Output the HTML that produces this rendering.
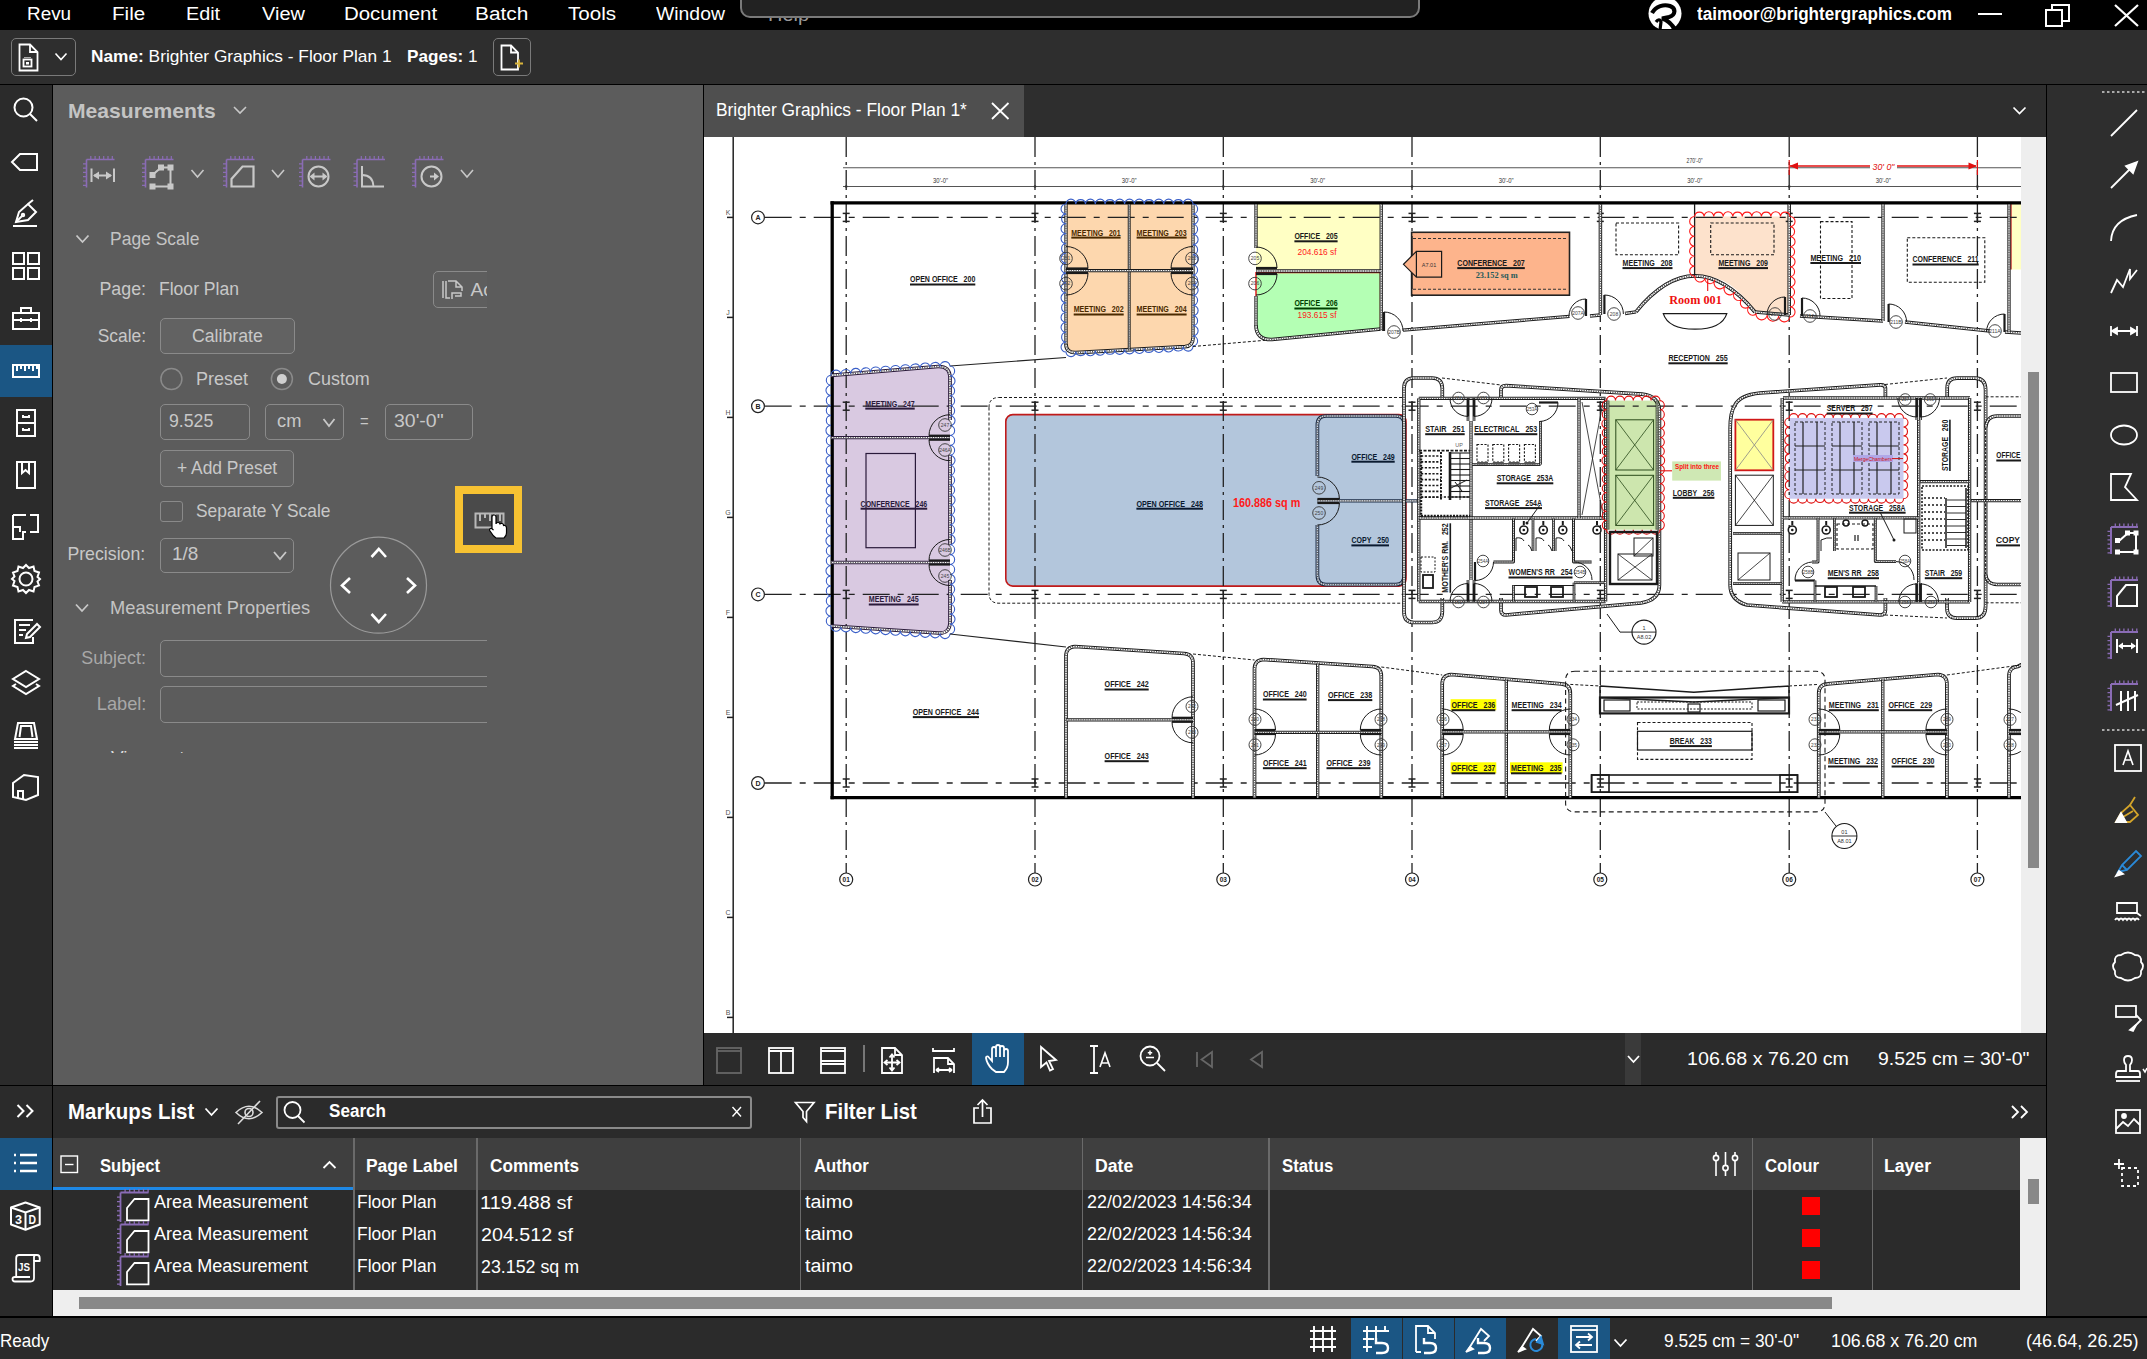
<!DOCTYPE html><html><head><meta charset="utf-8"><style>
html,body{margin:0;padding:0;width:2147px;height:1359px;overflow:hidden;background:#2b2b2b;}
body{position:relative;font-family:"Liberation Sans",sans-serif;}
.b{position:absolute;}
.s{position:absolute;overflow:visible;}
.t{position:absolute;white-space:nowrap;line-height:1;}
</style></head><body>
<div class="b" style="left:0px;top:0px;width:2147px;height:30px;background:#000;"></div>
<div class="b" style="left:0px;top:30px;width:2147px;height:54px;background:#2e2e2e;"></div>
<div class="b" style="left:0px;top:84px;width:2147px;height:1px;background:#000;"></div>
<div class="b" style="left:0px;top:85px;width:52px;height:1001px;background:#2b2b2b;"></div>
<div class="b" style="left:52px;top:85px;width:1px;height:1001px;background:#000;"></div>
<div class="b" style="left:53px;top:85px;width:650px;height:1000px;background:#5c5c5c;"></div>
<div class="b" style="left:703px;top:85px;width:1px;height:1000px;background:#000;"></div>
<div class="b" style="left:704px;top:85px;width:1342px;height:52px;background:#2e2e2e;"></div>
<div class="b" style="left:704px;top:85px;width:320px;height:52px;background:#4f4f4f;"></div>
<div class="b" style="left:704px;top:137px;width:1317px;height:896px;background:#fff;"></div>
<div class="b" style="left:2021px;top:137px;width:25px;height:896px;background:#eeeeee;"></div>
<div class="b" style="left:2028px;top:372px;width:11px;height:496px;background:#888;"></div>
<div class="b" style="left:2046px;top:85px;width:1px;height:1232px;background:#000;"></div>
<div class="b" style="left:2047px;top:85px;width:100px;height:1232px;background:#2e2e2e;"></div>
<div class="b" style="left:704px;top:1033px;width:1342px;height:52px;background:#2b2b2b;"></div>
<div class="b" style="left:0px;top:1085px;width:2046px;height:1px;background:#000;"></div>
<div class="b" style="left:0px;top:1086px;width:52px;height:231px;background:#2b2b2b;"></div>
<div class="b" style="left:52px;top:1086px;width:1px;height:231px;background:#000;"></div>
<div class="b" style="left:53px;top:1086px;width:1993px;height:52px;background:#2b2b2b;"></div>
<div class="b" style="left:53px;top:1138px;width:1967px;height:52px;background:#3f3f3f;"></div>
<div class="b" style="left:53px;top:1187px;width:300px;height:3px;background:#1e88e5;"></div>
<div class="b" style="left:53px;top:1190px;width:1967px;height:100px;background:#2b2b2b;"></div>
<div class="b" style="left:53px;top:1290px;width:1993px;height:26px;background:#eeeeee;"></div>
<div class="b" style="left:2020px;top:1138px;width:26px;height:152px;background:#eeeeee;"></div>
<div class="b" style="left:2028px;top:1179px;width:11px;height:25px;background:#888;"></div>
<div class="b" style="left:79px;top:1297px;width:1753px;height:12px;background:#888;"></div>
<div class="b" style="left:0px;top:1316px;width:2147px;height:1px;background:#111;"></div>
<div class="b" style="left:0px;top:1317px;width:2147px;height:42px;background:#2b2b2b;"></div>
<div id="t1" class="t" style="left:27.00px;transform-origin:left center;top:5.26px;font-size:18px;color:#fff;font-weight:normal;transform:scaleX(1.0497);">Revu</div>
<div id="t2" class="t" style="left:112.00px;transform-origin:left center;top:5.26px;font-size:18px;color:#fff;font-weight:normal;transform:scaleX(1.1431);">File</div>
<div id="t3" class="t" style="left:186.00px;transform-origin:left center;top:5.26px;font-size:18px;color:#fff;font-weight:normal;transform:scaleX(1.0994);">Edit</div>
<div id="t4" class="t" style="left:262.00px;transform-origin:left center;top:5.26px;font-size:18px;color:#fff;font-weight:normal;transform:scaleX(1.1086);">View</div>
<div id="t5" class="t" style="left:344.00px;transform-origin:left center;top:5.26px;font-size:18px;color:#fff;font-weight:normal;transform:scaleX(1.1353);">Document</div>
<div id="t6" class="t" style="left:475.00px;transform-origin:left center;top:5.26px;font-size:18px;color:#fff;font-weight:normal;transform:scaleX(1.1586);">Batch</div>
<div id="t7" class="t" style="left:568.00px;transform-origin:left center;top:5.26px;font-size:18px;color:#fff;font-weight:normal;transform:scaleX(1.1423);">Tools</div>
<div id="t8" class="t" style="left:656.00px;transform-origin:left center;top:5.26px;font-size:18px;color:#fff;font-weight:normal;transform:scaleX(1.0766);">Window</div>
<div id="t9" class="t" style="left:768.00px;transform-origin:left center;top:6.26px;font-size:18px;color:#9a9a9a;font-weight:normal;transform:scaleX(1.1108);">Help</div>
<div class="b" style="left:740px;top:-10px;width:680px;height:27.5px;background:#222;border:2px solid #7a7a7a;border-radius:10px;box-sizing:border-box;"></div>
<svg class="s" style="left:1648px;top:0" width="35" height="30" viewBox="0 0 35 30"><defs><clipPath id="lgc"><rect x="0" y="0" width="35" height="29"/></clipPath></defs><g clip-path="url(#lgc)"><circle cx="17" cy="13.5" r="16.5" fill="#fff"/><path d="M4 13 C8 6 16 4 22 6 C28 8 28 15 21 17 L14 18.5 C19 20 24 24 27 30" stroke="#000" stroke-width="4.2" fill="none"/><path d="M8 22 C10 19 12 19 13 22 L12 30" stroke="#000" stroke-width="3.2" fill="none"/></g></svg>
<div id="t10" class="t" style="left:1697.00px;transform-origin:left center;top:5.16px;font-size:18px;color:#fff;font-weight:bold;transform:scaleX(0.9492);">taimoor@brightergraphics.com</div>
<svg class="s" style="left:1978px;top:13px;" width="25" height="3" viewBox="0 0 25 3"><rect x="0" y="0" width="24" height="2" fill="#fff"/></svg>
<svg class="s" style="left:2045px;top:3px;" width="27" height="25" viewBox="0 0 27 25"><g fill="none" stroke="#fff" stroke-width="2"><rect x="1" y="7" width="16" height="16"/><path d="M7 7 V2 H24 V18 H17"/></g></svg>
<svg class="s" style="left:2113px;top:3px;" width="27" height="25" viewBox="0 0 27 25"><path d="M2 2 L25 23 M25 2 L2 23" stroke="#fff" stroke-width="2.2"/></svg>
<div class="b" style="left:11px;top:38px;width:65px;height:38px;background:transparent;border:1.6px solid #7a7a7a;border-radius:5px;box-sizing:border-box;"></div>
<svg class="s" style="left:18px;top:43px;" width="24" height="30" viewBox="0 0 24 30"><g fill="none" stroke="#fff" stroke-width="1.8"><path d="M1.5 1.5 H12 L19.5 9 V27.5 H1.5 Z"/><path d="M12 1.5 V9 H19.5"/><rect x="5.5" y="16.5" width="8" height="7"/></g><rect x="8" y="19" width="3" height="2.5" fill="#fff"/><path d="M6 14.5 H13" stroke="#aaa" stroke-width="1"/></svg>
<svg class="s" style="left:54px;top:52px;" width="15" height="10" viewBox="0 0 15 10"><path d="M1.5 1.5 L7 7.5 L12.5 1.5" fill="none" stroke="#fff" stroke-width="1.6"/></svg>
<div id="t11" class="t" style="left:91.00px;transform-origin:left center;top:48.11px;font-size:17px;color:#fff;font-weight:normal;transform:scaleX(1.0161);"><b>Name:</b> Brighter Graphics - Floor Plan 1</div>
<div id="t12" class="t" style="left:407.00px;transform-origin:left center;top:48.11px;font-size:17px;color:#fff;font-weight:normal;transform:scaleX(1.0077);"><b>Pages:</b> 1</div>
<div class="b" style="left:493px;top:38px;width:38px;height:38px;background:transparent;border:1.6px solid #7a7a7a;border-radius:5px;box-sizing:border-box;"></div>
<svg class="s" style="left:500px;top:44px;" width="24" height="28" viewBox="0 0 24 28"><g fill="none" stroke="#fff" stroke-width="1.8"><path d="M1.5 1.5 H11 L18 8.5 V25.5 H1.5 Z"/><path d="M11 1.5 V8.5 H18"/></g><path d="M15 19.5 H23 M19 15.5 V23.5" stroke="#d9b43a" stroke-width="1.8"/></svg>
<div class="b" style="left:0px;top:345px;width:52px;height:52px;background:#1b5684;"></div>
<svg class="s" style="left:6.0px;top:90.0px" width="40" height="40" viewBox="0 0 40 40" fill="none" stroke="#fff" stroke-width="2"><circle cx="17.5" cy="17.5" r="9"/><path d="M24 24 L31 31"/></svg>
<svg class="s" style="left:6.0px;top:142.0px" width="40" height="40" viewBox="0 0 40 40" fill="none" stroke="#fff" stroke-width="2"><path d="M31 12 H14 L6 20 L14 28 H31 Z"/></svg>
<svg class="s" style="left:6.0px;top:194.0px" width="40" height="40" viewBox="0 0 40 40" fill="none" stroke="#fff" stroke-width="2"><path d="M7 32 H31"/><path d="M10 28 L13 18 L22 10 L30 18 L22 26 Z" /><path d="M10 28 L16.5 21.5"/><circle cx="17" cy="21" r="1.2"/><path d="M22 10 L27 6"/></svg>
<svg class="s" style="left:6.0px;top:246.0px" width="40" height="40" viewBox="0 0 40 40" fill="none" stroke="#fff" stroke-width="2"><rect x="7" y="7" width="11" height="11"/><rect x="22" y="7" width="11" height="11"/><rect x="7" y="22" width="11" height="11"/><rect x="22" y="22" width="11" height="11"/></svg>
<svg class="s" style="left:6.0px;top:298.0px" width="40" height="40" viewBox="0 0 40 40" fill="none" stroke="#fff" stroke-width="2"><rect x="7" y="15" width="26" height="16"/><path d="M15 15 V10 H25 V15"/><path d="M7 22 H33"/><path d="M15 20 V24 M25 20 V24"/></svg>
<svg class="s" style="left:6.0px;top:351.0px" width="40" height="40" viewBox="0 0 40 40" fill="none" stroke="#fff" stroke-width="2"><rect x="7" y="14" width="26" height="12"/><path d="M11 14 V20 M15 14 V18 M19 14 V20 M23 14 V18 M27 14 V20 M31 14 V18"/></svg>
<svg class="s" style="left:6.0px;top:403.0px" width="40" height="40" viewBox="0 0 40 40" fill="none" stroke="#fff" stroke-width="2"><rect x="11" y="7" width="18" height="26"/><path d="M11 20 H29"/><path d="M17 12 V14 H23 V12 M17 25 V27 H23 V25"/></svg>
<svg class="s" style="left:6.0px;top:455.0px" width="40" height="40" viewBox="0 0 40 40" fill="none" stroke="#fff" stroke-width="2"><rect x="11" y="7" width="18" height="26"/><path d="M16 7 V18 L19.5 15 L23 18 V7"/></svg>
<svg class="s" style="left:6.0px;top:507.0px" width="40" height="40" viewBox="0 0 40 40" fill="none" stroke="#fff" stroke-width="2"><path d="M7 8 H20 M24 8 H32 V25 H24 M20 25 H17 V32 H7 V8"/><path d="M7 20 H14 V25"/></svg>
<svg class="s" style="left:6.0px;top:559.0px" width="40" height="40" viewBox="0 0 40 40" fill="none" stroke="#fff" stroke-width="2"><circle cx="20" cy="20" r="6.5"/><path d="M20 6 L23 9 L27.5 7.5 L28.5 12 L33 13.5 L31.5 18 L34 20 L31.5 22.5 L33 26.5 L28.5 28 L27.5 32.5 L23 31 L20 34 L17 31 L12.5 32.5 L11.5 28 L7 26.5 L8.5 22 L6 20 L8.5 17.5 L7 13.5 L11.5 12 L12.5 7.5 L17 9 Z"/></svg>
<svg class="s" style="left:6.0px;top:611.0px" width="40" height="40" viewBox="0 0 40 40" fill="none" stroke="#fff" stroke-width="2"><path d="M27 9 H9 V32 H27 V26"/><path d="M13 14 H24 M13 19 H20 M13 24 H17"/><path d="M20 27 L21 23 L31 13 L34 16 L24 26 Z"/></svg>
<svg class="s" style="left:6.0px;top:663.0px" width="40" height="40" viewBox="0 0 40 40" fill="none" stroke="#fff" stroke-width="2"><path d="M20 8 L33 16 L20 24 L7 16 Z"/><path d="M10 21 L7 23 L20 31 L33 23 L30 21"/></svg>
<svg class="s" style="left:6.0px;top:715.0px" width="40" height="40" viewBox="0 0 40 40" fill="none" stroke="#fff" stroke-width="2"><path d="M9 24 L12 8 H28 L31 24 Z"/><path d="M13.5 22 L15 11 H25 L26.5 22"/><path d="M8 27 H32 M8 30 H32 M8 33 H32"/></svg>
<svg class="s" style="left:6.0px;top:767.0px" width="40" height="40" viewBox="0 0 40 40" fill="none" stroke="#fff" stroke-width="2"><path d="M7 16 L18 8 L32 10 V28 L20 33 L7 30 Z"/><path d="M12 31 V24 H17 V32"/></svg>
<svg class="s" style="left:6.0px;top:1092.0px" width="40" height="40" viewBox="0 0 40 40" fill="none" stroke="#fff" stroke-width="2"><path d="M11.5 13 L17.5 19 L11.5 25 M20.5 13 L26.5 19 L20.5 25"/></svg>
<div class="b" style="left:0px;top:1138px;width:52px;height:52px;background:#1b5684;"></div>
<svg class="s" style="left:6.0px;top:1144.0px" width="40" height="40" viewBox="0 0 40 40" fill="none" stroke="#fff" stroke-width="2"><path d="M14 11 H31 M14 19 H31 M14 27 H31" stroke-width="2.6"/><path d="M8 11 H10 M8 19 H10 M8 27 H10" stroke-width="2.6"/></svg>
<svg class="s" style="left:6.0px;top:1196.0px" width="40" height="40" viewBox="0 0 40 40" fill="none" stroke="#fff" stroke-width="2"><path d="M5 11.5 L19.5 6.5 L33.7 11.5 V28.5 L19.5 33.7 L5 28.5 Z" stroke-linejoin="round"/><path d="M5 11.5 L19.5 16.5 L33.7 11.5 M19.5 16.5 V33.7"/><text x="9" y="28" font-size="13" font-weight="bold" fill="#fff" stroke="none" font-family="Liberation Sans" textLength="7" lengthAdjust="spacingAndGlyphs">3</text><text x="22.5" y="28" font-size="13" font-weight="bold" fill="#fff" stroke="none" font-family="Liberation Sans" textLength="7.5" lengthAdjust="spacingAndGlyphs">D</text></svg>
<svg class="s" style="left:6.0px;top:1248.0px" width="40" height="40" viewBox="0 0 40 40" fill="none" stroke="#fff" stroke-width="1.8"><path d="M10.2 30 V10 Q10.2 7 13 7 H31 Q33.7 7 33.7 10 V13 H28 V30 Q28 33.5 24.5 33.5 H9 Q6.5 33.5 6.5 31 Q6.5 29 9 29 H24" stroke-linejoin="round"/><path d="M28 13 V9 Q28 7 30 7"/><text x="12" y="23" font-size="10.5" font-weight="bold" fill="#fff" stroke="none" font-family="Liberation Sans" textLength="12" lengthAdjust="spacingAndGlyphs">JS</text></svg>
<div id="t13" class="t" style="left:67.70px;transform-origin:left center;top:100.22px;font-size:21px;color:#c4c4c4;font-weight:bold;transform:scaleX(1.0042);">Measurements</div>
<svg class="s" style="left:233px;top:106px;" width="14" height="9" viewBox="0 0 14 9"><path d="M1 1 L7 7 L13 1" fill="none" stroke="#c8c8c8" stroke-width="1.6"/></svg>
<svg class="s" style="left:0px;top:0px;" width="700" height="300" viewBox="0 0 700 300"><path d="M86.5 159.5 V187.5 M86.5 159.5 H114.5" stroke="#8a6cb5" stroke-width="1.6" fill="none"/><path d="M90.8 159.5 V156.0 M95.1 159.5 V156.0 M99.4 159.5 V156.0 M103.7 159.5 V156.0 M108.0 159.5 V156.0 M112.3 159.5 V156.0 M86.5 163.8 H83.0 M86.5 168.1 H83.0 M86.5 172.4 H83.0 M86.5 176.7 H83.0 M86.5 181.0 H83.0 M86.5 185.3 H83.0 " stroke="#8a6cb5" stroke-width="1.2" fill="none"/><g stroke="#c8c8c8" stroke-width="2" fill="none"><path d="M91.5 168.5 V182 M114 168.5 V182 M94 175.5 H111"/></g><path d="M93 175.5 L99 171.5 V179.5 Z M112 175.5 L106 171.5 V179.5 Z" fill="#c8c8c8"/><path d="M145.5 159.5 V187.5 M145.5 159.5 H173.5" stroke="#8a6cb5" stroke-width="1.6" fill="none"/><path d="M149.8 159.5 V156.0 M154.1 159.5 V156.0 M158.4 159.5 V156.0 M162.7 159.5 V156.0 M167.0 159.5 V156.0 M171.3 159.5 V156.0 M145.5 163.8 H142.0 M145.5 168.1 H142.0 M145.5 172.4 H142.0 M145.5 176.7 H142.0 M145.5 181.0 H142.0 M145.5 185.3 H142.0 " stroke="#8a6cb5" stroke-width="1.2" fill="none"/><path d="M152.5 186.5 H170.5 V167.5 H161 L152.5 175" stroke="#c8c8c8" stroke-width="2" fill="none"/><g fill="#c8c8c8"><rect x="149.5" y="172" width="6" height="6"/><rect x="158" y="164.5" width="6" height="6"/><rect x="167.5" y="164.5" width="6" height="6"/><rect x="167.5" y="183.5" width="6" height="6"/><rect x="149.5" y="183.5" width="6" height="6"/></g><path d="M191.5 170 L197.5 177 L203.5 170" fill="none" stroke="#c8c8c8" stroke-width="1.6"/><path d="M226.5 159.5 V187.5 M226.5 159.5 H254.5" stroke="#8a6cb5" stroke-width="1.6" fill="none"/><path d="M230.8 159.5 V156.0 M235.1 159.5 V156.0 M239.4 159.5 V156.0 M243.7 159.5 V156.0 M248.0 159.5 V156.0 M252.3 159.5 V156.0 M226.5 163.8 H223.0 M226.5 168.1 H223.0 M226.5 172.4 H223.0 M226.5 176.7 H223.0 M226.5 181.0 H223.0 M226.5 185.3 H223.0 " stroke="#8a6cb5" stroke-width="1.2" fill="none"/><path d="M231.5 186.5 V179 L242.5 166.5 H253.5 V186.5 Z" stroke="#c8c8c8" stroke-width="2.2" fill="none"/><path d="M272 170 L278.0 177 L284 170" fill="none" stroke="#c8c8c8" stroke-width="1.6"/><path d="M302.5 159.5 V187.5 M302.5 159.5 H330.5" stroke="#8a6cb5" stroke-width="1.6" fill="none"/><path d="M306.8 159.5 V156.0 M311.1 159.5 V156.0 M315.4 159.5 V156.0 M319.7 159.5 V156.0 M324.0 159.5 V156.0 M328.3 159.5 V156.0 M302.5 163.8 H299.0 M302.5 168.1 H299.0 M302.5 172.4 H299.0 M302.5 176.7 H299.0 M302.5 181.0 H299.0 M302.5 185.3 H299.0 " stroke="#8a6cb5" stroke-width="1.2" fill="none"/><circle cx="318.5" cy="176.5" r="10" stroke="#c8c8c8" stroke-width="2" fill="none"/><path d="M311 176.5 H326" stroke="#c8c8c8" stroke-width="2"/><path d="M309.5 176.5 L314.5 172.5 V180.5 Z M327.5 176.5 L322.5 172.5 V180.5 Z" fill="#c8c8c8"/><path d="M357 159.5 V187.5 M357 159.5 H385" stroke="#8a6cb5" stroke-width="1.6" fill="none"/><path d="M361.3 159.5 V156.0 M365.6 159.5 V156.0 M369.9 159.5 V156.0 M374.2 159.5 V156.0 M378.5 159.5 V156.0 M382.8 159.5 V156.0 M357 163.8 H353.5 M357 168.1 H353.5 M357 172.4 H353.5 M357 176.7 H353.5 M357 181.0 H353.5 M357 185.3 H353.5 " stroke="#8a6cb5" stroke-width="1.2" fill="none"/><path d="M362 166 V186.5 H384" stroke="#c8c8c8" stroke-width="2" fill="none"/><path d="M362 175 Q373 175 373.5 186.5" stroke="#c8c8c8" stroke-width="1.8" fill="none"/><path d="M415.5 159.5 V187.5 M415.5 159.5 H443.5" stroke="#8a6cb5" stroke-width="1.6" fill="none"/><path d="M419.8 159.5 V156.0 M424.1 159.5 V156.0 M428.4 159.5 V156.0 M432.7 159.5 V156.0 M437.0 159.5 V156.0 M441.3 159.5 V156.0 M415.5 163.8 H412.0 M415.5 168.1 H412.0 M415.5 172.4 H412.0 M415.5 176.7 H412.0 M415.5 181.0 H412.0 M415.5 185.3 H412.0 " stroke="#8a6cb5" stroke-width="1.2" fill="none"/><circle cx="431.5" cy="176.5" r="10" stroke="#c8c8c8" stroke-width="2" fill="none"/><path d="M430 176.5 H437" stroke="#c8c8c8" stroke-width="2"/><path d="M439 176.5 L434 172.5 V180.5 Z" fill="#c8c8c8"/><path d="M461 170 L467.0 177 L473 170" fill="none" stroke="#c8c8c8" stroke-width="1.6"/></svg>
<svg class="s" style="left:0px;top:0px;" width="700" height="800" viewBox="0 0 700 800"><path d="M76.5 235.5 L82.5 242.0 L88.5 235.5" fill="none" stroke="#c8c8c8" stroke-width="1.8"/><path d="M76 604.5 L82.0 611.0 L88 604.5" fill="none" stroke="#c8c8c8" stroke-width="1.8"/></svg>
<div id="t14" class="t" style="left:110.30px;transform-origin:left center;top:229.22px;font-size:19px;color:#c4c4c4;font-weight:normal;transform:scaleX(0.9204);">Page Scale</div>
<div id="t15" class="t" style="right:2001.19px;transform-origin:right center;top:279.96px;font-size:18px;color:#c8c8c8;font-weight:normal;transform:scaleX(0.9903);">Page:</div>
<div id="t16" class="t" style="left:159.30px;transform-origin:left center;top:279.96px;font-size:18px;color:#c8c8c8;font-weight:normal;transform:scaleX(0.9747);">Floor Plan</div>
<div class="b" style="left:432.5px;top:271px;width:54.5px;height:37px;overflow:hidden;"><div style="position:absolute;left:0;top:0;width:80px;height:37px;border:1.6px solid #8a8a8a;border-radius:5px;box-sizing:border-box;background:#5e5e5e"></div><svg style="position:absolute;left:8px;top:7px" width="24" height="24" viewBox="0 0 24 24" fill="none" stroke="#c8c8c8" stroke-width="1.5"><path d="M2 3 V20 M5 3 V20 H9"/><path d="M7 3 H15 L21 9 V13 M15 3 V9 H21"/><path d="M11 21 V15 H20 V18 H14"/></svg><div style="position:absolute;left:38px;top:3px;font-size:19px;line-height:31px;color:#c8c8c8;font-family:Liberation Sans">Ac</div></div>
<div id="t17" class="t" style="right:2001.20px;transform-origin:right center;top:326.96px;font-size:18px;color:#c8c8c8;font-weight:normal;transform:scaleX(0.9668);">Scale:</div>
<div class="b" style="left:160.3px;top:317.6px;width:134.4px;height:36.3px;background:#626262;border:1.6px solid #8a8a8a;border-radius:5px;box-sizing:border-box;"></div>
<div id="t18" class="t" style="left:192.40px;transform-origin:left center;top:326.96px;font-size:18px;color:#c8c8c8;font-weight:normal;transform:scaleX(0.9830);">Calibrate</div>
<svg class="s" style="left:0px;top:0px;" width="700" height="800" viewBox="0 0 700 800"><circle cx="171.4" cy="379" r="10.5" fill="none" stroke="#8a8a8a" stroke-width="1.5"/><circle cx="281.9" cy="379" r="10.5" fill="none" stroke="#8a8a8a" stroke-width="1.5"/><circle cx="281.9" cy="379" r="5" fill="#d0d0d0"/></svg>
<div id="t19" class="t" style="left:195.60px;transform-origin:left center;top:369.64px;font-size:18.5px;color:#c8c8c8;font-weight:normal;transform:scaleX(0.9727);">Preset</div>
<div id="t20" class="t" style="left:307.70px;transform-origin:left center;top:369.64px;font-size:18.5px;color:#c8c8c8;font-weight:normal;transform:scaleX(0.9696);">Custom</div>
<div class="b" style="left:160.3px;top:404.2px;width:89.29999999999998px;height:36.1px;background:transparent;border:1.6px solid #8a8a8a;border-radius:5px;box-sizing:border-box;"></div>
<div class="b" style="left:265.3px;top:404.2px;width:78.39999999999998px;height:36.1px;background:transparent;border:1.6px solid #8a8a8a;border-radius:5px;box-sizing:border-box;"></div>
<div class="b" style="left:384.6px;top:404.2px;width:88.59999999999997px;height:36.1px;background:transparent;border:1.6px solid #8a8a8a;border-radius:5px;box-sizing:border-box;"></div>
<div id="t21" class="t" style="left:169.30px;transform-origin:left center;top:412.04px;font-size:18.5px;color:#c8c8c8;font-weight:normal;transform:scaleX(0.9564);">9.525</div>
<div id="t22" class="t" style="left:277.30px;transform-origin:left center;top:412.04px;font-size:18.5px;color:#c8c8c8;font-weight:normal;transform:scaleX(0.9897);">cm</div>
<svg class="s" style="left:0px;top:0px;" width="700" height="800" viewBox="0 0 700 800"><path d="M323.5 419 L329.0 426 L334.5 419" fill="none" stroke="#c8c8c8" stroke-width="1.8"/><path d="M274 552 L280.0 559 L286 552" fill="none" stroke="#c8c8c8" stroke-width="1.8"/></svg>
<div id="t23" class="t" style="left:360.00px;transform-origin:left center;top:412.04px;font-size:18.5px;color:#c8c8c8;font-weight:normal;transform:scaleX(0.8000);">=</div>
<div id="t24" class="t" style="left:393.60px;transform-origin:left center;top:412.04px;font-size:18.5px;color:#c8c8c8;font-weight:normal;transform:scaleX(1.0524);">30'-0&quot;</div>
<div class="b" style="left:160.3px;top:450.3px;width:134.2px;height:36.5px;background:#626262;border:1.6px solid #8a8a8a;border-radius:5px;box-sizing:border-box;"></div>
<div id="t25" class="t" style="left:177.40px;transform-origin:left center;top:459.04px;font-size:18.5px;color:#c8c8c8;font-weight:normal;transform:scaleX(0.9410);">+ Add Preset</div>
<div class="b" style="left:160.3px;top:501.2px;width:22.3px;height:21px;background:transparent;border:1.6px solid #8a8a8a;border-radius:3px;box-sizing:border-box;"></div>
<div id="t26" class="t" style="left:195.60px;transform-origin:left center;top:502.34px;font-size:18.5px;color:#c8c8c8;font-weight:normal;transform:scaleX(0.9381);">Separate Y Scale</div>
<div class="b" style="left:455.2px;top:486.1px;width:66.8px;height:66.5px;background:#f7c232;"></div>
<div class="b" style="left:463.2px;top:494.3px;width:50.9px;height:50.7px;background:#4a4a4a;"></div>
<svg class="s" style="left:470px;top:505px;" width="40" height="40" viewBox="0 0 40 40"><rect x="5.5" y="8.5" width="28" height="14" fill="none" stroke="#b8b8b8" stroke-width="2"/><path d="M10 8.5 V16 M15 8.5 V13 M20 8.5 V16 M25 8.5 V13 M30 8.5 V16" stroke="#b8b8b8" stroke-width="2"/><path d="M22 12 Q22 10 24 10 Q26 10 26 12 V19 Q26 17.5 28 17.5 Q30 17.5 30 19.5 Q30 18 32 18.5 Q34 19 33.5 21 Q33.5 20 35 20.5 Q36.5 21 36.5 23 V28 Q36.5 31 34 33 H26 Q23 31 20 26 Q19 24 20.5 23.5 Q22 23 23.5 25 L22 24 Z" fill="#fff" stroke="#000" stroke-width="1.2"/></svg>
<div id="t27" class="t" style="right:2001.55px;transform-origin:right center;top:545.34px;font-size:18.5px;color:#c8c8c8;font-weight:normal;transform:scaleX(0.9584);">Precision:</div>
<div class="b" style="left:160.3px;top:537.7px;width:134.2px;height:35.4px;background:transparent;border:1.6px solid #8a8a8a;border-radius:5px;box-sizing:border-box;"></div>
<div id="t28" class="t" style="left:171.90px;transform-origin:left center;top:545.34px;font-size:18.5px;color:#c8c8c8;font-weight:normal;transform:scaleX(1.0234);">1/8</div>
<svg class="s" style="left:0px;top:0px;" width="700" height="800" viewBox="0 0 700 800"><circle cx="378.5" cy="585.2" r="48" fill="none" stroke="#9a9a9a" stroke-width="1.2"/><g fill="none" stroke="#fff" stroke-width="2.6"><path d="M371.5 557 L378.8 549 L386 557"/><path d="M371.5 614 L378.8 622 L386 614"/><path d="M350 578 L342 585.5 L350 593"/><path d="M407 578 L415 585.5 L407 593"/></g></svg>
<div id="t29" class="t" style="left:110.20px;transform-origin:left center;top:597.92px;font-size:19px;color:#c4c4c4;font-weight:normal;transform:scaleX(0.9616);">Measurement Properties</div>
<div id="t30" class="t" style="right:2000.85px;transform-origin:right center;top:648.54px;font-size:18.5px;color:#a8a8a8;font-weight:normal;transform:scaleX(0.9664);">Subject:</div>
<div id="t31" class="t" style="right:2000.86px;transform-origin:right center;top:695.34px;font-size:18.5px;color:#a8a8a8;font-weight:normal;transform:scaleX(0.9841);">Label:</div>
<div class="b" style="left:160.3px;top:639.8px;width:326.3px;height:37.0px;overflow:hidden"><div style="position:absolute;left:0;top:0;width:400px;height:100%;border:1.6px solid #8a8a8a;border-radius:5px;box-sizing:border-box"></div></div>
<div class="b" style="left:160.3px;top:686.4px;width:326.3px;height:36.700000000000045px;overflow:hidden"><div style="position:absolute;left:0;top:0;width:400px;height:100%;border:1.6px solid #8a8a8a;border-radius:5px;box-sizing:border-box"></div></div>
<div class="b" style="left:100px;top:747px;width:200px;height:6px;overflow:hidden"><div style="position:absolute;left:11px;top:1px;font-size:19px;line-height:19px;color:#ddd;font-family:Liberation Sans">Viewports</div></div>
<div id="t32" class="t" style="left:716.40px;transform-origin:left center;top:101.89px;font-size:17.5px;color:#fff;font-weight:normal;transform:scaleX(0.9918);">Brighter Graphics - Floor Plan 1*</div>
<svg class="s" style="left:990px;top:101px;" width="21" height="21" viewBox="0 0 21 21"><path d="M2 2 L18.5 18 M18.5 2 L2 18" stroke="#fff" stroke-width="1.8"/></svg>
<svg class="s" style="left:2012px;top:106px;" width="16" height="10" viewBox="0 0 16 10"><path d="M1.5 1.5 L7.5 7.5 L13.5 1.5" fill="none" stroke="#fff" stroke-width="1.7"/></svg>
<div class="b" style="left:972px;top:1033px;width:52px;height:52px;background:#1b5684;"></div>
<svg class="s" style="left:709.0px;top:1039.0px" width="40" height="40" viewBox="0 0 40 40" fill="none" stroke="#fff" stroke-width="1.8"><rect x="8" y="9" width="24" height="25" stroke="#666"/><path d="M8 12 H32" stroke="#666"/></svg>
<svg class="s" style="left:761.0px;top:1039.0px" width="40" height="40" viewBox="0 0 40 40" fill="none" stroke="#fff" stroke-width="1.8"><rect x="8" y="9" width="24" height="25"/><path d="M8 12 H32 M20 12 V34"/></svg>
<svg class="s" style="left:813.0px;top:1039.0px" width="40" height="40" viewBox="0 0 40 40" fill="none" stroke="#fff" stroke-width="1.8"><rect x="8" y="9" width="24" height="25"/><path d="M8 12 H32 M8 22 H32 M8 25 H32"/></svg>
<svg class="s" style="left:872.0px;top:1039.0px" width="40" height="40" viewBox="0 0 40 40" fill="none" stroke="#fff" stroke-width="1.8"><path d="M10 9 H23 L30 16 V34 H10 Z"/><path d="M23 9 V16 H30"/><path d="M20 16 V31 M13 23.5 H27"/><path d="M17.5 18.5 L20 15.5 L22.5 18.5 M17.5 28.5 L20 31.5 L22.5 28.5 M15.5 21 L12.5 23.5 L15.5 26 M24.5 21 L27.5 23.5 L24.5 26"/></svg>
<svg class="s" style="left:924.0px;top:1039.0px" width="40" height="40" viewBox="0 0 40 40" fill="none" stroke="#fff" stroke-width="1.8"><path d="M9 9 V12 H30 V9"/><path d="M10 34 V19 H24 L30 25 V34 M24 19 V25 H30"/><path d="M12 31 H28 M12 31 L15 29 M12 31 L15 33 M28 31 L25 29 M28 31 L25 33"/></svg>
<svg class="s" style="left:978.0px;top:1039.0px" width="40" height="40" viewBox="0 0 40 40" fill="none" stroke="#fff" stroke-width="1.8"><path d="M14 30 Q9 25 8 19 Q8 17 10 17.5 L14 22 V10 Q14 8 16 8 Q18 8 18 10 V18 V8 Q18 6 20 6 Q22 6 22 8 V18 V9 Q22 7 24 7 Q26 7 26 9 V18 V12 Q26 10 28 10 Q30 10 30 12 V23 Q30 29 26 33 H18 Z"/></svg>
<svg class="s" style="left:1029.0px;top:1039.0px" width="40" height="40" viewBox="0 0 40 40" fill="none" stroke="#fff" stroke-width="1.8"><path d="M12 8 L27 21 L20 22 L24 30 L21 31.5 L17.5 23.5 L12 28 Z"/></svg>
<svg class="s" style="left:1081.0px;top:1039.0px" width="40" height="40" viewBox="0 0 40 40" fill="none" stroke="#fff" stroke-width="1.8"><path d="M9 7 H17 M13 7 V34 M9 34 H17"/><path d="M19 28 L24 14 L29 28 M20.5 24 H27.5" stroke-width="1.6"/></svg>
<svg class="s" style="left:1133.0px;top:1039.0px" width="40" height="40" viewBox="0 0 40 40" fill="none" stroke="#fff" stroke-width="1.8"><circle cx="17" cy="17" r="9.5"/><path d="M24 24 L32 32"/><path d="M13 18.5 H21 M17 11.5 V16 M14.8 13.8 H19.2" stroke-width="1.5"/></svg>
<svg class="s" style="left:1185.0px;top:1039.0px" width="40" height="40" viewBox="0 0 40 40" fill="none" stroke="#fff" stroke-width="1.8"><path d="M12 13 V28 M27 13 V28 L16.5 20.5 Z" stroke="#666"/></svg>
<svg class="s" style="left:1237.0px;top:1039.0px" width="40" height="40" viewBox="0 0 40 40" fill="none" stroke="#fff" stroke-width="1.8"><path d="M25 13 V28 L14 20.5 Z" stroke="#666"/></svg>
<div class="b" style="left:863px;top:1045px;width:1.5px;height:27px;background:#777;"></div>
<div class="b" style="left:1625px;top:1033px;width:16px;height:52px;background:#3a3a3a;"></div>
<svg class="s" style="left:1627px;top:1055px;" width="14" height="9" viewBox="0 0 14 9"><path d="M1 1 L6.5 7 L12 1" fill="none" stroke="#fff" stroke-width="1.8"/></svg>
<div id="t33" class="t" style="left:1687.30px;transform-origin:left center;top:1049.12px;font-size:19px;color:#fff;font-weight:normal;transform:scaleX(1.0356);">106.68 x 76.20 cm</div>
<div id="t34" class="t" style="left:1878.40px;transform-origin:left center;top:1049.12px;font-size:19px;color:#fff;font-weight:normal;transform:scaleX(1.0213);">9.525 cm = 30'-0&quot;</div>
<svg class="s" style="left:2100px;top:90px;" width="47" height="4" viewBox="0 0 47 4"><path d="M2 2 H47" stroke="#aaa" stroke-width="2" stroke-dasharray="2.5 2.5"/></svg>
<svg class="s" style="left:2100px;top:718px;" width="47" height="24" viewBox="0 0 47 24"><path d="M2 12 H47" stroke="#aaa" stroke-width="2" stroke-dasharray="2.5 2.5"/></svg>
<svg class="s" style="left:2104.0px;top:103.0px" width="40" height="40" viewBox="0 0 40 40" fill="none" stroke="#fff" stroke-width="1.8"><path d="M7 33 L33 7"/></svg>
<svg class="s" style="left:2104.0px;top:155.0px" width="40" height="40" viewBox="0 0 40 40" fill="none" stroke="#fff" stroke-width="1.8"><path d="M7 33 L29 11"/><path d="M33 7 L22 11 L29 18 Z" fill="#fff"/></svg>
<svg class="s" style="left:2104.0px;top:208.0px" width="40" height="40" viewBox="0 0 40 40" fill="none" stroke="#fff" stroke-width="1.8"><path d="M7 33 Q8 12 33 7"/></svg>
<svg class="s" style="left:2104.0px;top:260.0px" width="40" height="40" viewBox="0 0 40 40" fill="none" stroke="#fff" stroke-width="1.8"><path d="M7 33 L13 20 L19 27 L26 9 V19 L33 10"/></svg>
<svg class="s" style="left:2104.0px;top:311.0px" width="40" height="40" viewBox="0 0 40 40" fill="none" stroke="#fff" stroke-width="1.8"><path d="M7 20 H33 M7 15 V25 M33 15 V25"/><path d="M8 20 L13 17 V23 Z M32 20 L27 17 V23 Z" fill="#fff"/></svg>
<svg class="s" style="left:2104.0px;top:363.0px" width="40" height="40" viewBox="0 0 40 40" fill="none" stroke="#fff" stroke-width="1.8"><rect x="7" y="10" width="26" height="19"/></svg>
<svg class="s" style="left:2104.0px;top:415.0px" width="40" height="40" viewBox="0 0 40 40" fill="none" stroke="#fff" stroke-width="1.8"><ellipse cx="20" cy="20" rx="13" ry="9.5"/></svg>
<svg class="s" style="left:2104.0px;top:467.0px" width="40" height="40" viewBox="0 0 40 40" fill="none" stroke="#fff" stroke-width="1.8"><path d="M7 7 H27 L21 20 L33 33 H7 Z"/></svg>
<svg class="s" style="left:2108.0px;top:738.0px" width="40" height="40" viewBox="0 0 40 40" fill="none" stroke="#fff" stroke-width="1.8"><rect x="7" y="7" width="26" height="26"/><path d="M15 27 L20 13 L25 27 M17 22 H23" stroke-width="1.6"/></svg>
<svg class="s" style="left:2108.0px;top:894.0px" width="40" height="40" viewBox="0 0 40 40" fill="none" stroke="#fff" stroke-width="1.8"><path d="M9 9 H29 V19 H9 Z M29 19 L33 22"/><path d="M7 26 Q9 23 11 26 Q13 23 15 26 Q17 23 19 26 Q21 23 23 26 Q25 23 27 26 Q29 23 31 26"/></svg>
<svg class="s" style="left:2108.0px;top:946.0px" width="40" height="40" viewBox="0 0 40 40" fill="none" stroke="#fff" stroke-width="1.8"><path d="M13 9 Q20 4 27 9 Q34 9 33 16 Q37 20 33 25 Q34 32 27 32 Q20 37 13 32 Q6 32 7 25 Q3 20 7 16 Q6 9 13 9 Z"/></svg>
<svg class="s" style="left:2108.0px;top:998.0px" width="40" height="40" viewBox="0 0 40 40" fill="none" stroke="#fff" stroke-width="1.8"><rect x="8" y="8" width="20" height="11"/><path d="M28 17 L33 22 L25 30"/><path d="M22 32 L28 27 L25 33 Z" fill="#fff"/></svg>
<svg class="s" style="left:2108.0px;top:1049.0px" width="40" height="40" viewBox="0 0 40 40" fill="none" stroke="#fff" stroke-width="1.8"><path d="M20 7 Q16 7 16 11 Q16 14 18 16 V22 H10 Q8 22 8 25 V28 H32 V25 Q32 22 30 22 H22 V16 Q24 14 24 11 Q24 7 20 7 Z"/><path d="M8 32 H32"/><path d="M35 20 L37 23 L39 19" stroke-width="1.5"/></svg>
<svg class="s" style="left:2108.0px;top:1101.0px" width="40" height="40" viewBox="0 0 40 40" fill="none" stroke="#fff" stroke-width="1.8"><rect x="8" y="9" width="24" height="23"/><circle cx="16" cy="15" r="2" fill="#fff"/><path d="M8 28 L15 21 L20 25 L26 18 L32 24"/></svg>
<svg class="s" style="left:2108.0px;top:1153.0px" width="40" height="40" viewBox="0 0 40 40" fill="none" stroke="#fff" stroke-width="1.8"><path d="M14 15 H30 V33 H14 Z" stroke-dasharray="3 3"/><path d="M11 6 V16 M6 11 H16"/></svg>
<svg class="s" style="left:2104.0px;top:520.0px" width="40" height="40" viewBox="0 0 40 40" fill="none" stroke="#fff" stroke-width="2"><path d="M7 7 V34 M7 7 H34" stroke="#8a6cb5" stroke-width="2"/><path d="M11.3 7 V3.5 M15.6 7 V3.5 M19.9 7 V3.5 M24.2 7 V3.5 M28.5 7 V3.5 M32.8 7 V3.5 M7 11.3 H3.5 M7 15.6 H3.5 M7 19.9 H3.5 M7 24.2 H3.5 M7 28.5 H3.5 M7 32.8 H3.5 " stroke="#8a6cb5" stroke-width="1.3"/><path d="M13 32 H32 V13 H24 L15 21" /><g fill="#fff" stroke="none"><rect x="11" y="18" width="5" height="5"/><rect x="21" y="10.5" width="5" height="5"/><rect x="29.5" y="10.5" width="5" height="5"/><rect x="29.5" y="29.5" width="5" height="5"/><rect x="11" y="29.5" width="5" height="5"/></g></svg>
<svg class="s" style="left:2104.0px;top:573.0px" width="40" height="40" viewBox="0 0 40 40" fill="none" stroke="#fff" stroke-width="2"><path d="M7 7 V34 M7 7 H34" stroke="#8a6cb5" stroke-width="2"/><path d="M11.3 7 V3.5 M15.6 7 V3.5 M19.9 7 V3.5 M24.2 7 V3.5 M28.5 7 V3.5 M32.8 7 V3.5 M7 11.3 H3.5 M7 15.6 H3.5 M7 19.9 H3.5 M7 24.2 H3.5 M7 28.5 H3.5 M7 32.8 H3.5 " stroke="#8a6cb5" stroke-width="1.3"/><path d="M13 33 V23 L22 12 H33 V33 Z"/></svg>
<svg class="s" style="left:2104.0px;top:625.0px" width="40" height="40" viewBox="0 0 40 40" fill="none" stroke="#fff" stroke-width="2"><path d="M7 7 V34 M7 7 H34" stroke="#8a6cb5" stroke-width="2"/><path d="M11.3 7 V3.5 M15.6 7 V3.5 M19.9 7 V3.5 M24.2 7 V3.5 M28.5 7 V3.5 M32.8 7 V3.5 M7 11.3 H3.5 M7 15.6 H3.5 M7 19.9 H3.5 M7 24.2 H3.5 M7 28.5 H3.5 M7 32.8 H3.5 " stroke="#8a6cb5" stroke-width="1.3"/><path d="M13 14 V28 M33 14 V28 M15 21 H31"/><path d="M14 21 L19 17.5 V24.5 Z M32 21 L27 17.5 V24.5 Z" fill="#fff" stroke="none"/></svg>
<svg class="s" style="left:2104.0px;top:677.0px" width="40" height="40" viewBox="0 0 40 40" fill="none" stroke="#fff" stroke-width="2"><path d="M7 7 V34 M7 7 H34" stroke="#8a6cb5" stroke-width="2"/><path d="M11.3 7 V3.5 M15.6 7 V3.5 M19.9 7 V3.5 M24.2 7 V3.5 M28.5 7 V3.5 M32.8 7 V3.5 M7 11.3 H3.5 M7 15.6 H3.5 M7 19.9 H3.5 M7 24.2 H3.5 M7 28.5 H3.5 M7 32.8 H3.5 " stroke="#8a6cb5" stroke-width="1.3"/><path d="M17 14 V34 M24 14 V34 M31 14 V34 M12 28 L34 18"/></svg>
<svg class="s" style="left:2108.0px;top:791.0px" width="40" height="40" viewBox="0 0 40 40" fill="none" stroke="#fff" stroke-width="1.8"><path d="M8 31 L13 22 L22 14 L30 24 L22 31 Z" stroke="#d4a52a"/><path d="M22 14 L27 6 M15 26 L25 20" stroke="#d4a52a"/><path d="M8 31 L13 22 L18 31 Z" fill="#fff" stroke="#fff"/></svg>
<svg class="s" style="left:2108.0px;top:843.0px" width="40" height="40" viewBox="0 0 40 40" fill="none" stroke="#fff" stroke-width="1.8"><path d="M10 29 L14 22 L28 8 L33 13 L19 27 Z" stroke="#2a8ad8"/><path d="M8 33 L11 28 L15 31 Z" fill="#fff" stroke="#fff"/><path d="M14 22 L19 27" stroke="#2a8ad8"/></svg>
<div id="t35" class="t" style="left:68.30px;transform-origin:left center;top:1100.68px;font-size:22px;color:#fff;font-weight:bold;transform:scaleX(0.9308);">Markups List</div>
<svg class="s" style="left:204px;top:1107px;" width="16" height="10" viewBox="0 0 16 10"><path d="M1.5 1.5 L7.5 8 L13.5 1.5" fill="none" stroke="#fff" stroke-width="1.8"/></svg>
<svg class="s" style="left:234px;top:1099px;" width="30" height="27" viewBox="0 0 30 27"><g fill="none" stroke="#ddd" stroke-width="1.6"><path d="M2 13.5 Q15 1 28 13.5 Q15 26 2 13.5 Z"/><circle cx="15" cy="13.5" r="4"/><path d="M4 25 L26 2"/></g></svg>
<div class="b" style="left:276.1px;top:1095.8px;width:476px;height:32.8px;background:transparent;border:2px solid #8a8a8a;border-radius:3px;box-sizing:border-box;"></div>
<svg class="s" style="left:282px;top:1100px;" width="26" height="26" viewBox="0 0 26 26"><circle cx="10.5" cy="10" r="8" fill="none" stroke="#fff" stroke-width="1.8"/><path d="M16 16 L22.5 22.5" stroke="#fff" stroke-width="1.8"/></svg>
<div id="t36" class="t" style="left:328.50px;transform-origin:left center;top:1101.76px;font-size:18px;color:#fff;font-weight:bold;transform:scaleX(0.9485);">Search</div>
<svg class="s" style="left:731px;top:1106px;" width="12" height="12" viewBox="0 0 12 12"><path d="M1.5 1 L10 10.5 M10 1 L1.5 10.5" stroke="#fff" stroke-width="1.4"/></svg>
<svg class="s" style="left:794px;top:1101px;" width="23" height="23" viewBox="0 0 23 23"><path d="M1.5 1.5 H20 L12.5 10.5 V20.5 L9 16.5 V10.5 Z" fill="none" stroke="#fff" stroke-width="1.7"/></svg>
<div id="t37" class="t" style="left:824.50px;transform-origin:left center;top:1100.68px;font-size:22px;color:#fff;font-weight:bold;transform:scaleX(0.9272);">Filter List</div>
<svg class="s" style="left:972px;top:1098px;" width="23" height="27" viewBox="0 0 23 27"><g fill="none" stroke="#fff" stroke-width="1.7"><path d="M7 10 H2 V25 H19 V10 H14"/><path d="M10.5 19 V2 M5.5 7 L10.5 2 L15.5 7"/></g></svg>
<svg class="s" style="left:2010px;top:1104px;" width="22" height="16" viewBox="0 0 22 16"><path d="M2 2 L8 8 L2 14 M11 2 L17 8 L11 14" fill="none" stroke="#fff" stroke-width="1.8"/></svg>
<svg class="s" style="left:60px;top:1155px;" width="20" height="19" viewBox="0 0 20 19"><rect x="1" y="1" width="16.5" height="16.5" fill="none" stroke="#fff" stroke-width="1.4"/><path d="M5 9.5 H13.5" stroke="#fff" stroke-width="1.4"/></svg>
<div id="t38" class="t" style="left:99.60px;transform-origin:left center;top:1156.96px;font-size:18px;color:#fff;font-weight:bold;transform:scaleX(0.9228);">Subject</div>
<svg class="s" style="left:322px;top:1160px;" width="16" height="10" viewBox="0 0 16 10"><path d="M1.5 8 L7.5 2 L13.5 8" fill="none" stroke="#fff" stroke-width="1.8"/></svg>
<div class="b" style="left:353.4px;top:1138px;width:1.2px;height:152px;background:#6a6a6a;"></div>
<div class="b" style="left:476.4px;top:1138px;width:1.2px;height:152px;background:#6a6a6a;"></div>
<div class="b" style="left:800.3px;top:1138px;width:1.2px;height:152px;background:#6a6a6a;"></div>
<div class="b" style="left:1082.1px;top:1138px;width:1.2px;height:152px;background:#6a6a6a;"></div>
<div class="b" style="left:1268.4px;top:1138px;width:1.2px;height:152px;background:#6a6a6a;"></div>
<div class="b" style="left:1751.5px;top:1138px;width:1.2px;height:152px;background:#6a6a6a;"></div>
<div class="b" style="left:1871.5px;top:1138px;width:1.2px;height:152px;background:#6a6a6a;"></div>
<div id="t39" class="t" style="left:366.40px;transform-origin:left center;top:1156.96px;font-size:18px;color:#fff;font-weight:bold;transform:scaleX(0.9674);">Page Label</div>
<div id="t40" class="t" style="left:490.40px;transform-origin:left center;top:1156.96px;font-size:18px;color:#fff;font-weight:bold;transform:scaleX(0.9569);">Comments</div>
<div id="t41" class="t" style="left:813.80px;transform-origin:left center;top:1156.96px;font-size:18px;color:#fff;font-weight:bold;transform:scaleX(0.9292);">Author</div>
<div id="t42" class="t" style="left:1095.00px;transform-origin:left center;top:1156.96px;font-size:18px;color:#fff;font-weight:bold;transform:scaleX(0.9815);">Date</div>
<div id="t43" class="t" style="left:1282.40px;transform-origin:left center;top:1156.96px;font-size:18px;color:#fff;font-weight:bold;transform:scaleX(0.9309);">Status</div>
<div id="t44" class="t" style="left:1765.00px;transform-origin:left center;top:1156.96px;font-size:18px;color:#fff;font-weight:bold;transform:scaleX(0.9313);">Colour</div>
<div id="t45" class="t" style="left:1884.00px;transform-origin:left center;top:1156.96px;font-size:18px;color:#fff;font-weight:bold;transform:scaleX(0.9782);">Layer</div>
<svg class="s" style="left:1712px;top:1150px;" width="28" height="28" viewBox="0 0 28 28"><g fill="none" stroke="#fff" stroke-width="1.6"><path d="M4 2 V26 M13.5 2 V26 M23 2 V26"/><circle cx="4" cy="8" r="2.6" fill="#3f3f3f"/><circle cx="13.5" cy="18" r="2.6" fill="#3f3f3f"/><circle cx="23" cy="8" r="2.6" fill="#3f3f3f"/></g></svg>
<svg class="s" style="left:114px;top:1188px;" width="40" height="36" viewBox="0 0 40 36"><path d="M6.5 4.5 V34 M6.5 4.5 H34.5" stroke="#8a6cb5" stroke-width="1.8"/><path d="M11.1 4.5 V1 M15.7 4.5 V1 M20.3 4.5 V1 M24.9 4.5 V1 M29.5 4.5 V1 M34.1 4.5 V1 M6.5 9.1 H3 M6.5 13.7 H3 M6.5 18.3 H3 M6.5 22.9 H3 M6.5 27.5 H3 M6.5 32.1 H3 " stroke="#8a6cb5" stroke-width="1.3"/><path d="M13 32.4 V20 L20.5 11 H34.5 V32.4 Z" fill="none" stroke="#fff" stroke-width="1.8"/></svg>
<div id="t46" class="t" style="left:153.60px;transform-origin:left center;top:1192.56px;font-size:18px;color:#fff;font-weight:normal;transform:scaleX(1.0041);">Area Measurement</div>
<div id="t47" class="t" style="left:356.60px;transform-origin:left center;top:1192.56px;font-size:18px;color:#fff;font-weight:normal;transform:scaleX(0.9672);">Floor Plan</div>
<div id="t48" class="t" style="left:480.00px;transform-origin:left center;top:1194.26px;font-size:18px;color:#fff;font-weight:normal;transform:scaleX(1.1120);">119.488 sf</div>
<div id="t49" class="t" style="left:804.50px;transform-origin:left center;top:1192.56px;font-size:18px;color:#fff;font-weight:normal;transform:scaleX(1.0908);">taimo</div>
<div id="t50" class="t" style="left:1086.80px;transform-origin:left center;top:1192.56px;font-size:18px;color:#fff;font-weight:normal;transform:scaleX(0.9967);">22/02/2023 14:56:34</div>
<div class="b" style="left:1802px;top:1197px;width:18px;height:18px;background:#ff0000;"></div>
<svg class="s" style="left:114px;top:1220px;" width="40" height="36" viewBox="0 0 40 36"><path d="M6.5 4.5 V34 M6.5 4.5 H34.5" stroke="#8a6cb5" stroke-width="1.8"/><path d="M11.1 4.5 V1 M15.7 4.5 V1 M20.3 4.5 V1 M24.9 4.5 V1 M29.5 4.5 V1 M34.1 4.5 V1 M6.5 9.1 H3 M6.5 13.7 H3 M6.5 18.3 H3 M6.5 22.9 H3 M6.5 27.5 H3 M6.5 32.1 H3 " stroke="#8a6cb5" stroke-width="1.3"/><path d="M13 32.4 V20 L20.5 11 H34.5 V32.4 Z" fill="none" stroke="#fff" stroke-width="1.8"/></svg>
<div id="t51" class="t" style="left:153.60px;transform-origin:left center;top:1224.56px;font-size:18px;color:#fff;font-weight:normal;transform:scaleX(1.0041);">Area Measurement</div>
<div id="t52" class="t" style="left:356.60px;transform-origin:left center;top:1224.56px;font-size:18px;color:#fff;font-weight:normal;transform:scaleX(0.9672);">Floor Plan</div>
<div id="t53" class="t" style="left:481.00px;transform-origin:left center;top:1226.26px;font-size:18px;color:#fff;font-weight:normal;transform:scaleX(1.0933);">204.512 sf</div>
<div id="t54" class="t" style="left:804.50px;transform-origin:left center;top:1224.56px;font-size:18px;color:#fff;font-weight:normal;transform:scaleX(1.0908);">taimo</div>
<div id="t55" class="t" style="left:1086.80px;transform-origin:left center;top:1224.56px;font-size:18px;color:#fff;font-weight:normal;transform:scaleX(0.9967);">22/02/2023 14:56:34</div>
<div class="b" style="left:1802px;top:1229px;width:18px;height:18px;background:#ff0000;"></div>
<svg class="s" style="left:114px;top:1252px;" width="40" height="36" viewBox="0 0 40 36"><path d="M6.5 4.5 V34 M6.5 4.5 H34.5" stroke="#8a6cb5" stroke-width="1.8"/><path d="M11.1 4.5 V1 M15.7 4.5 V1 M20.3 4.5 V1 M24.9 4.5 V1 M29.5 4.5 V1 M34.1 4.5 V1 M6.5 9.1 H3 M6.5 13.7 H3 M6.5 18.3 H3 M6.5 22.9 H3 M6.5 27.5 H3 M6.5 32.1 H3 " stroke="#8a6cb5" stroke-width="1.3"/><path d="M13 32.4 V20 L20.5 11 H34.5 V32.4 Z" fill="none" stroke="#fff" stroke-width="1.8"/></svg>
<div id="t56" class="t" style="left:153.60px;transform-origin:left center;top:1256.56px;font-size:18px;color:#fff;font-weight:normal;transform:scaleX(1.0041);">Area Measurement</div>
<div id="t57" class="t" style="left:356.60px;transform-origin:left center;top:1256.56px;font-size:18px;color:#fff;font-weight:normal;transform:scaleX(0.9672);">Floor Plan</div>
<div id="t58" class="t" style="left:481.00px;transform-origin:left center;top:1258.26px;font-size:18px;color:#fff;font-weight:normal;transform:scaleX(0.9891);">23.152 sq m</div>
<div id="t59" class="t" style="left:804.50px;transform-origin:left center;top:1256.56px;font-size:18px;color:#fff;font-weight:normal;transform:scaleX(1.0908);">taimo</div>
<div id="t60" class="t" style="left:1086.80px;transform-origin:left center;top:1256.56px;font-size:18px;color:#fff;font-weight:normal;transform:scaleX(0.9967);">22/02/2023 14:56:34</div>
<div class="b" style="left:1802px;top:1261px;width:18px;height:18px;background:#ff0000;"></div>
<div class="b" style="left:0px;top:1316px;width:2147px;height:1.5px;background:#000;"></div>
<div id="t61" class="t" style="left:0.40px;transform-origin:left center;top:1332.44px;font-size:18.5px;color:#fff;font-weight:normal;transform:scaleX(0.9206);">Ready</div>
<div class="b" style="left:1350.5px;top:1317.5px;width:51.299999999999955px;height:41.5px;background:#1b5684;"></div>
<div class="b" style="left:1402.7px;top:1317.5px;width:51.299999999999955px;height:41.5px;background:#1b5684;"></div>
<div class="b" style="left:1455px;top:1317.5px;width:50.700000000000045px;height:41.5px;background:#1b5684;"></div>
<div class="b" style="left:1558.2px;top:1317.5px;width:52.200000000000045px;height:41.5px;background:#1b5684;"></div>
<svg class="s" style="left:1303.0px;top:1319.0px" width="40" height="40" viewBox="0 0 40 40" fill="none" stroke="#fff" stroke-width="1.8"><path d="M11 7 V33 M20 7 V33 M29 7 V33 M7 12 H33 M7 20 H33 M7 28 H33" stroke-width="1.9"/></svg>
<svg class="s" style="left:1356.0px;top:1319.0px" width="40" height="40" viewBox="0 0 40 40" fill="none" stroke="#fff" stroke-width="1.8"><path d="M11 7 V33 M20 7 V22 M29 7 V12 M7 12 H33 M7 20 H18 M7 28 H16" stroke-width="1.9"/><path d="M20 19 V24 H26 Q32 24 32 29 Q32 34 26 34 H20" stroke-width="2.4"/></svg>
<svg class="s" style="left:1408.0px;top:1319.0px" width="40" height="40" viewBox="0 0 40 40" fill="none" stroke="#fff" stroke-width="1.8"><path d="M8 33 V7 H20 L27 14 V20 M20 7 V14 H27 M8 33 H13"/><path d="M16 19 V24 H22 Q28 24 28 29 Q28 34 22 34 H16" stroke-width="2.4"/></svg>
<svg class="s" style="left:1460.0px;top:1319.0px" width="40" height="40" viewBox="0 0 40 40" fill="none" stroke="#fff" stroke-width="1.8"><path d="M8 31 L21 10 L29 17 L24 22"/><path d="M6 33 L10 28 L13 30 Z" fill="#fff"/><path d="M18 19 V24 H24 Q30 24 30 29 Q30 34 24 34 H18" stroke-width="2.4"/></svg>
<svg class="s" style="left:1512.0px;top:1319.0px" width="40" height="40" viewBox="0 0 40 40" fill="none" stroke="#fff" stroke-width="1.8"><path d="M8 31 L21 10 L29 17 L24 22"/><path d="M6 33 L10 28 L13 30 Z" fill="#fff"/><path d="M30 24 A6 6 0 1 1 24 20" stroke="#2a8ad8" stroke-width="2"/><path d="M29 18 L31 25 L25 23 Z" fill="#2a8ad8" stroke="#2a8ad8"/></svg>
<svg class="s" style="left:1564.0px;top:1319.0px" width="40" height="40" viewBox="0 0 40 40" fill="none" stroke="#fff" stroke-width="1.8"><rect x="7" y="7" width="26" height="26"/><path d="M7 11 H33"/><path d="M12 18 H28 M24 14.5 L28 18 L24 21.5 M28 26 H12 M16 22.5 L12 26 L16 29.5"/></svg>
<svg class="s" style="left:1613px;top:1338px;" width="16" height="10" viewBox="0 0 16 10"><path d="M1.5 1.5 L7.5 8 L13.5 1.5" fill="none" stroke="#fff" stroke-width="1.8"/></svg>
<div id="t62" class="t" style="left:1663.50px;transform-origin:left center;top:1332.44px;font-size:18.5px;color:#fff;font-weight:normal;transform:scaleX(0.9357);">9.525 cm = 30'-0&quot;</div>
<div id="t63" class="t" style="left:1831.00px;transform-origin:left center;top:1332.44px;font-size:18.5px;color:#fff;font-weight:normal;transform:scaleX(0.9615);">106.68 x 76.20 cm</div>
<div id="t64" class="t" style="left:2025.50px;transform-origin:left center;top:1332.44px;font-size:18.5px;color:#fff;font-weight:normal;transform:scaleX(0.9778);">(46.64, 26.25)</div>
<svg class="s" style="left:0;top:0" width="2147" height="1359" viewBox="0 0 2147 1359">
<defs><clipPath id="fpc"><rect x="704" y="137" width="1317" height="896"/></clipPath></defs>
<g clip-path="url(#fpc)">
<line x1="733.2" y1="137.0" x2="733.2" y2="1033.0" stroke="#222" stroke-width="1.5" stroke-linecap="butt"/>
<line x1="727.0" y1="217.4" x2="733.2" y2="217.4" stroke="#222" stroke-width="1.5" stroke-linecap="butt"/>
<text x="728" y="214.9" font-family="Liberation Sans" font-size="7" fill="#555" text-anchor="middle">K</text>
<line x1="727.0" y1="317.4" x2="733.2" y2="317.4" stroke="#222" stroke-width="1.5" stroke-linecap="butt"/>
<text x="728" y="314.9" font-family="Liberation Sans" font-size="7" fill="#555" text-anchor="middle">J</text>
<line x1="727.0" y1="417.4" x2="733.2" y2="417.4" stroke="#222" stroke-width="1.5" stroke-linecap="butt"/>
<text x="728" y="414.9" font-family="Liberation Sans" font-size="7" fill="#555" text-anchor="middle">H</text>
<line x1="727.0" y1="517.4" x2="733.2" y2="517.4" stroke="#222" stroke-width="1.5" stroke-linecap="butt"/>
<text x="728" y="514.9" font-family="Liberation Sans" font-size="7" fill="#555" text-anchor="middle">G</text>
<line x1="727.0" y1="617.4" x2="733.2" y2="617.4" stroke="#222" stroke-width="1.5" stroke-linecap="butt"/>
<text x="728" y="614.9" font-family="Liberation Sans" font-size="7" fill="#555" text-anchor="middle">F</text>
<line x1="727.0" y1="717.4" x2="733.2" y2="717.4" stroke="#222" stroke-width="1.5" stroke-linecap="butt"/>
<text x="728" y="714.9" font-family="Liberation Sans" font-size="7" fill="#555" text-anchor="middle">E</text>
<line x1="727.0" y1="817.4" x2="733.2" y2="817.4" stroke="#222" stroke-width="1.5" stroke-linecap="butt"/>
<text x="728" y="814.9" font-family="Liberation Sans" font-size="7" fill="#555" text-anchor="middle">D</text>
<line x1="727.0" y1="917.4" x2="733.2" y2="917.4" stroke="#222" stroke-width="1.5" stroke-linecap="butt"/>
<text x="728" y="914.9" font-family="Liberation Sans" font-size="7" fill="#555" text-anchor="middle">C</text>
<line x1="727.0" y1="1017.4" x2="733.2" y2="1017.4" stroke="#222" stroke-width="1.5" stroke-linecap="butt"/>
<text x="728" y="1014.9" font-family="Liberation Sans" font-size="7" fill="#555" text-anchor="middle">B</text>
<path d="M1066 204 H1193 V338 Q1193 346 1185 346.7 L1076 352.6 Q1066 353 1066 344 Z" stroke="none" stroke-width="0" fill="#fdd7ae" />
<rect x="1256.0" y="204.0" width="124.5" height="65.5" rx="0" stroke="none" stroke-width="0" fill="#ffffc4"/>
<path d="M1256 272.6 H1380.5 V329 L1272 339.5 Q1256 340 1256 325 Z" stroke="none" stroke-width="0" fill="#b4ffb4" />
<path d="M1256 272.6 H1380.5 V329 L1272 339.5 Q1256 340 1256 325 Z" stroke="#e01010" stroke-width="1.4" fill="none" />
<rect x="1411.6" y="232.3" width="157.9" height="62.9" rx="0" stroke="#222" stroke-width="1.6" fill="#fdb48c"/>
<line x1="1413.0" y1="238.5" x2="1568.0" y2="238.5" stroke="#333" stroke-width="1.1" stroke-dasharray="3 2" stroke-linecap="butt"/>
<line x1="1413.0" y1="289.3" x2="1568.0" y2="289.3" stroke="#333" stroke-width="1.1" stroke-dasharray="3 2" stroke-linecap="butt"/>
<path d="M1694.6 216.5 H1789.2 V315 L1755 312 Q1730 272 1694.6 276 Z" stroke="none" stroke-width="0" fill="#fde2cc" />
<rect x="2011.0" y="204.0" width="10.0" height="65.5" rx="0" stroke="none" stroke-width="0" fill="#ffffc4"/>
<line x1="2011.0" y1="204.0" x2="2011.0" y2="269.5" stroke="#c03030" stroke-width="1.4" stroke-linecap="butt"/>
<path d="M831 375.3 L938 366.5 Q950 366 950 378 V622 Q950 634 938 633 L831 626 Z" stroke="none" stroke-width="0" fill="#d9c9e1" />
<rect x="1005.8" y="414.6" width="400.2" height="171.5" rx="7" stroke="#c01a1a" stroke-width="1.6" fill="#b3c6dc"/>
<rect x="1606.6" y="400.6" width="53.4" height="129.1" rx="0" stroke="none" stroke-width="0" fill="#cde6ae"/>
<rect x="1735.4" y="419.7" width="37.9" height="50.6" rx="0" stroke="#d01818" stroke-width="1.8" fill="#ffff9e"/>
<rect x="1789.3" y="418.0" width="114.2" height="80.7" rx="0" stroke="none" stroke-width="0" fill="#c9c9ee"/>
<rect x="1672.2" y="461.4" width="48.8" height="19.2" rx="0" stroke="none" stroke-width="0" fill="#cfe8b4"/>
<rect x="1450.6" y="699.2" width="45.7" height="11.0" rx="0" stroke="none" stroke-width="0" fill="#ffff00"/>
<rect x="1450.6" y="762.3" width="45.7" height="11.0" rx="0" stroke="none" stroke-width="0" fill="#ffff00"/>
<rect x="1510.0" y="762.3" width="52.6" height="11.0" rx="0" stroke="none" stroke-width="0" fill="#ffff00"/>
<line x1="846.2" y1="137.0" x2="846.2" y2="873.0" stroke="#222" stroke-width="1.3" stroke-dasharray="20 5 3 5" stroke-linecap="butt"/>
<circle cx="846.2" cy="879.5" r="6.5" stroke="#222" stroke-width="1.2" fill="#fff"/>
<line x1="1035.0" y1="137.0" x2="1035.0" y2="873.0" stroke="#222" stroke-width="1.3" stroke-dasharray="20 5 3 5" stroke-linecap="butt"/>
<circle cx="1035.0" cy="879.5" r="6.5" stroke="#222" stroke-width="1.2" fill="#fff"/>
<line x1="1223.3" y1="137.0" x2="1223.3" y2="873.0" stroke="#222" stroke-width="1.3" stroke-dasharray="20 5 3 5" stroke-linecap="butt"/>
<circle cx="1223.3" cy="879.5" r="6.5" stroke="#222" stroke-width="1.2" fill="#fff"/>
<line x1="1412.0" y1="137.0" x2="1412.0" y2="873.0" stroke="#222" stroke-width="1.3" stroke-dasharray="20 5 3 5" stroke-linecap="butt"/>
<circle cx="1412.0" cy="879.5" r="6.5" stroke="#222" stroke-width="1.2" fill="#fff"/>
<line x1="1600.3" y1="137.0" x2="1600.3" y2="873.0" stroke="#222" stroke-width="1.3" stroke-dasharray="20 5 3 5" stroke-linecap="butt"/>
<circle cx="1600.3" cy="879.5" r="6.5" stroke="#222" stroke-width="1.2" fill="#fff"/>
<line x1="1789.2" y1="137.0" x2="1789.2" y2="873.0" stroke="#222" stroke-width="1.3" stroke-dasharray="20 5 3 5" stroke-linecap="butt"/>
<circle cx="1789.2" cy="879.5" r="6.5" stroke="#222" stroke-width="1.2" fill="#fff"/>
<line x1="1977.4" y1="137.0" x2="1977.4" y2="873.0" stroke="#222" stroke-width="1.3" stroke-dasharray="20 5 3 5" stroke-linecap="butt"/>
<circle cx="1977.4" cy="879.5" r="6.5" stroke="#222" stroke-width="1.2" fill="#fff"/>
<line x1="764.7" y1="217.4" x2="2021.0" y2="217.4" stroke="#222" stroke-width="1.3" stroke-dasharray="27 8 6 8" stroke-linecap="butt"/>
<circle cx="758.0" cy="217.4" r="6.4" stroke="#222" stroke-width="1.2" fill="#fff"/>
<line x1="764.7" y1="406.2" x2="2021.0" y2="406.2" stroke="#222" stroke-width="1.3" stroke-dasharray="27 8 6 8" stroke-linecap="butt"/>
<circle cx="758.0" cy="406.2" r="6.4" stroke="#222" stroke-width="1.2" fill="#fff"/>
<line x1="764.7" y1="594.4" x2="2021.0" y2="594.4" stroke="#222" stroke-width="1.3" stroke-dasharray="27 8 6 8" stroke-linecap="butt"/>
<circle cx="758.0" cy="594.4" r="6.4" stroke="#222" stroke-width="1.2" fill="#fff"/>
<line x1="764.7" y1="783.0" x2="2021.0" y2="783.0" stroke="#222" stroke-width="1.3" stroke-dasharray="27 8 6 8" stroke-linecap="butt"/>
<circle cx="758.0" cy="783.0" r="6.4" stroke="#222" stroke-width="1.2" fill="#fff"/>
<text x="846.2" y="882" font-family="Liberation Sans" font-size="6.5" font-weight="bold" fill="#222" text-anchor="middle">01</text>
<text x="1035.0" y="882" font-family="Liberation Sans" font-size="6.5" font-weight="bold" fill="#222" text-anchor="middle">02</text>
<text x="1223.3" y="882" font-family="Liberation Sans" font-size="6.5" font-weight="bold" fill="#222" text-anchor="middle">03</text>
<text x="1412.0" y="882" font-family="Liberation Sans" font-size="6.5" font-weight="bold" fill="#222" text-anchor="middle">04</text>
<text x="1600.3" y="882" font-family="Liberation Sans" font-size="6.5" font-weight="bold" fill="#222" text-anchor="middle">05</text>
<text x="1789.2" y="882" font-family="Liberation Sans" font-size="6.5" font-weight="bold" fill="#222" text-anchor="middle">06</text>
<text x="1977.4" y="882" font-family="Liberation Sans" font-size="6.5" font-weight="bold" fill="#222" text-anchor="middle">07</text>
<text x="758" y="219.9" font-family="Liberation Sans" font-size="7" font-weight="bold" fill="#222" text-anchor="middle">A</text>
<text x="758" y="408.7" font-family="Liberation Sans" font-size="7" font-weight="bold" fill="#222" text-anchor="middle">B</text>
<text x="758" y="596.9" font-family="Liberation Sans" font-size="7" font-weight="bold" fill="#222" text-anchor="middle">C</text>
<text x="758" y="785.5" font-family="Liberation Sans" font-size="7" font-weight="bold" fill="#222" text-anchor="middle">D</text>
<line x1="842.7" y1="213.4" x2="849.7" y2="213.4" stroke="#222" stroke-width="1.5" stroke-linecap="butt"/>
<line x1="842.7" y1="221.4" x2="849.7" y2="221.4" stroke="#222" stroke-width="1.5" stroke-linecap="butt"/>
<line x1="846.2" y1="213.4" x2="846.2" y2="221.4" stroke="#222" stroke-width="1.5" stroke-linecap="butt"/>
<line x1="842.7" y1="402.2" x2="849.7" y2="402.2" stroke="#222" stroke-width="1.5" stroke-linecap="butt"/>
<line x1="842.7" y1="410.2" x2="849.7" y2="410.2" stroke="#222" stroke-width="1.5" stroke-linecap="butt"/>
<line x1="846.2" y1="402.2" x2="846.2" y2="410.2" stroke="#222" stroke-width="1.5" stroke-linecap="butt"/>
<line x1="842.7" y1="590.4" x2="849.7" y2="590.4" stroke="#222" stroke-width="1.5" stroke-linecap="butt"/>
<line x1="842.7" y1="598.4" x2="849.7" y2="598.4" stroke="#222" stroke-width="1.5" stroke-linecap="butt"/>
<line x1="846.2" y1="590.4" x2="846.2" y2="598.4" stroke="#222" stroke-width="1.5" stroke-linecap="butt"/>
<line x1="842.7" y1="779.0" x2="849.7" y2="779.0" stroke="#222" stroke-width="1.5" stroke-linecap="butt"/>
<line x1="842.7" y1="787.0" x2="849.7" y2="787.0" stroke="#222" stroke-width="1.5" stroke-linecap="butt"/>
<line x1="846.2" y1="779.0" x2="846.2" y2="787.0" stroke="#222" stroke-width="1.5" stroke-linecap="butt"/>
<line x1="1031.5" y1="213.4" x2="1038.5" y2="213.4" stroke="#222" stroke-width="1.5" stroke-linecap="butt"/>
<line x1="1031.5" y1="221.4" x2="1038.5" y2="221.4" stroke="#222" stroke-width="1.5" stroke-linecap="butt"/>
<line x1="1035.0" y1="213.4" x2="1035.0" y2="221.4" stroke="#222" stroke-width="1.5" stroke-linecap="butt"/>
<line x1="1031.5" y1="402.2" x2="1038.5" y2="402.2" stroke="#222" stroke-width="1.5" stroke-linecap="butt"/>
<line x1="1031.5" y1="410.2" x2="1038.5" y2="410.2" stroke="#222" stroke-width="1.5" stroke-linecap="butt"/>
<line x1="1035.0" y1="402.2" x2="1035.0" y2="410.2" stroke="#222" stroke-width="1.5" stroke-linecap="butt"/>
<line x1="1031.5" y1="590.4" x2="1038.5" y2="590.4" stroke="#222" stroke-width="1.5" stroke-linecap="butt"/>
<line x1="1031.5" y1="598.4" x2="1038.5" y2="598.4" stroke="#222" stroke-width="1.5" stroke-linecap="butt"/>
<line x1="1035.0" y1="590.4" x2="1035.0" y2="598.4" stroke="#222" stroke-width="1.5" stroke-linecap="butt"/>
<line x1="1031.5" y1="779.0" x2="1038.5" y2="779.0" stroke="#222" stroke-width="1.5" stroke-linecap="butt"/>
<line x1="1031.5" y1="787.0" x2="1038.5" y2="787.0" stroke="#222" stroke-width="1.5" stroke-linecap="butt"/>
<line x1="1035.0" y1="779.0" x2="1035.0" y2="787.0" stroke="#222" stroke-width="1.5" stroke-linecap="butt"/>
<line x1="1219.8" y1="213.4" x2="1226.8" y2="213.4" stroke="#222" stroke-width="1.5" stroke-linecap="butt"/>
<line x1="1219.8" y1="221.4" x2="1226.8" y2="221.4" stroke="#222" stroke-width="1.5" stroke-linecap="butt"/>
<line x1="1223.3" y1="213.4" x2="1223.3" y2="221.4" stroke="#222" stroke-width="1.5" stroke-linecap="butt"/>
<line x1="1219.8" y1="402.2" x2="1226.8" y2="402.2" stroke="#222" stroke-width="1.5" stroke-linecap="butt"/>
<line x1="1219.8" y1="410.2" x2="1226.8" y2="410.2" stroke="#222" stroke-width="1.5" stroke-linecap="butt"/>
<line x1="1223.3" y1="402.2" x2="1223.3" y2="410.2" stroke="#222" stroke-width="1.5" stroke-linecap="butt"/>
<line x1="1219.8" y1="590.4" x2="1226.8" y2="590.4" stroke="#222" stroke-width="1.5" stroke-linecap="butt"/>
<line x1="1219.8" y1="598.4" x2="1226.8" y2="598.4" stroke="#222" stroke-width="1.5" stroke-linecap="butt"/>
<line x1="1223.3" y1="590.4" x2="1223.3" y2="598.4" stroke="#222" stroke-width="1.5" stroke-linecap="butt"/>
<line x1="1219.8" y1="779.0" x2="1226.8" y2="779.0" stroke="#222" stroke-width="1.5" stroke-linecap="butt"/>
<line x1="1219.8" y1="787.0" x2="1226.8" y2="787.0" stroke="#222" stroke-width="1.5" stroke-linecap="butt"/>
<line x1="1223.3" y1="779.0" x2="1223.3" y2="787.0" stroke="#222" stroke-width="1.5" stroke-linecap="butt"/>
<line x1="1408.5" y1="213.4" x2="1415.5" y2="213.4" stroke="#222" stroke-width="1.5" stroke-linecap="butt"/>
<line x1="1408.5" y1="221.4" x2="1415.5" y2="221.4" stroke="#222" stroke-width="1.5" stroke-linecap="butt"/>
<line x1="1412.0" y1="213.4" x2="1412.0" y2="221.4" stroke="#222" stroke-width="1.5" stroke-linecap="butt"/>
<line x1="1408.5" y1="402.2" x2="1415.5" y2="402.2" stroke="#222" stroke-width="1.5" stroke-linecap="butt"/>
<line x1="1408.5" y1="410.2" x2="1415.5" y2="410.2" stroke="#222" stroke-width="1.5" stroke-linecap="butt"/>
<line x1="1412.0" y1="402.2" x2="1412.0" y2="410.2" stroke="#222" stroke-width="1.5" stroke-linecap="butt"/>
<line x1="1408.5" y1="590.4" x2="1415.5" y2="590.4" stroke="#222" stroke-width="1.5" stroke-linecap="butt"/>
<line x1="1408.5" y1="598.4" x2="1415.5" y2="598.4" stroke="#222" stroke-width="1.5" stroke-linecap="butt"/>
<line x1="1412.0" y1="590.4" x2="1412.0" y2="598.4" stroke="#222" stroke-width="1.5" stroke-linecap="butt"/>
<line x1="1408.5" y1="779.0" x2="1415.5" y2="779.0" stroke="#222" stroke-width="1.5" stroke-linecap="butt"/>
<line x1="1408.5" y1="787.0" x2="1415.5" y2="787.0" stroke="#222" stroke-width="1.5" stroke-linecap="butt"/>
<line x1="1412.0" y1="779.0" x2="1412.0" y2="787.0" stroke="#222" stroke-width="1.5" stroke-linecap="butt"/>
<line x1="1596.8" y1="213.4" x2="1603.8" y2="213.4" stroke="#222" stroke-width="1.5" stroke-linecap="butt"/>
<line x1="1596.8" y1="221.4" x2="1603.8" y2="221.4" stroke="#222" stroke-width="1.5" stroke-linecap="butt"/>
<line x1="1600.3" y1="213.4" x2="1600.3" y2="221.4" stroke="#222" stroke-width="1.5" stroke-linecap="butt"/>
<line x1="1596.8" y1="402.2" x2="1603.8" y2="402.2" stroke="#222" stroke-width="1.5" stroke-linecap="butt"/>
<line x1="1596.8" y1="410.2" x2="1603.8" y2="410.2" stroke="#222" stroke-width="1.5" stroke-linecap="butt"/>
<line x1="1600.3" y1="402.2" x2="1600.3" y2="410.2" stroke="#222" stroke-width="1.5" stroke-linecap="butt"/>
<line x1="1596.8" y1="590.4" x2="1603.8" y2="590.4" stroke="#222" stroke-width="1.5" stroke-linecap="butt"/>
<line x1="1596.8" y1="598.4" x2="1603.8" y2="598.4" stroke="#222" stroke-width="1.5" stroke-linecap="butt"/>
<line x1="1600.3" y1="590.4" x2="1600.3" y2="598.4" stroke="#222" stroke-width="1.5" stroke-linecap="butt"/>
<line x1="1596.8" y1="779.0" x2="1603.8" y2="779.0" stroke="#222" stroke-width="1.5" stroke-linecap="butt"/>
<line x1="1596.8" y1="787.0" x2="1603.8" y2="787.0" stroke="#222" stroke-width="1.5" stroke-linecap="butt"/>
<line x1="1600.3" y1="779.0" x2="1600.3" y2="787.0" stroke="#222" stroke-width="1.5" stroke-linecap="butt"/>
<line x1="1785.7" y1="213.4" x2="1792.7" y2="213.4" stroke="#222" stroke-width="1.5" stroke-linecap="butt"/>
<line x1="1785.7" y1="221.4" x2="1792.7" y2="221.4" stroke="#222" stroke-width="1.5" stroke-linecap="butt"/>
<line x1="1789.2" y1="213.4" x2="1789.2" y2="221.4" stroke="#222" stroke-width="1.5" stroke-linecap="butt"/>
<line x1="1785.7" y1="402.2" x2="1792.7" y2="402.2" stroke="#222" stroke-width="1.5" stroke-linecap="butt"/>
<line x1="1785.7" y1="410.2" x2="1792.7" y2="410.2" stroke="#222" stroke-width="1.5" stroke-linecap="butt"/>
<line x1="1789.2" y1="402.2" x2="1789.2" y2="410.2" stroke="#222" stroke-width="1.5" stroke-linecap="butt"/>
<line x1="1785.7" y1="590.4" x2="1792.7" y2="590.4" stroke="#222" stroke-width="1.5" stroke-linecap="butt"/>
<line x1="1785.7" y1="598.4" x2="1792.7" y2="598.4" stroke="#222" stroke-width="1.5" stroke-linecap="butt"/>
<line x1="1789.2" y1="590.4" x2="1789.2" y2="598.4" stroke="#222" stroke-width="1.5" stroke-linecap="butt"/>
<line x1="1785.7" y1="779.0" x2="1792.7" y2="779.0" stroke="#222" stroke-width="1.5" stroke-linecap="butt"/>
<line x1="1785.7" y1="787.0" x2="1792.7" y2="787.0" stroke="#222" stroke-width="1.5" stroke-linecap="butt"/>
<line x1="1789.2" y1="779.0" x2="1789.2" y2="787.0" stroke="#222" stroke-width="1.5" stroke-linecap="butt"/>
<line x1="1973.9" y1="213.4" x2="1980.9" y2="213.4" stroke="#222" stroke-width="1.5" stroke-linecap="butt"/>
<line x1="1973.9" y1="221.4" x2="1980.9" y2="221.4" stroke="#222" stroke-width="1.5" stroke-linecap="butt"/>
<line x1="1977.4" y1="213.4" x2="1977.4" y2="221.4" stroke="#222" stroke-width="1.5" stroke-linecap="butt"/>
<line x1="1973.9" y1="402.2" x2="1980.9" y2="402.2" stroke="#222" stroke-width="1.5" stroke-linecap="butt"/>
<line x1="1973.9" y1="410.2" x2="1980.9" y2="410.2" stroke="#222" stroke-width="1.5" stroke-linecap="butt"/>
<line x1="1977.4" y1="402.2" x2="1977.4" y2="410.2" stroke="#222" stroke-width="1.5" stroke-linecap="butt"/>
<line x1="1973.9" y1="590.4" x2="1980.9" y2="590.4" stroke="#222" stroke-width="1.5" stroke-linecap="butt"/>
<line x1="1973.9" y1="598.4" x2="1980.9" y2="598.4" stroke="#222" stroke-width="1.5" stroke-linecap="butt"/>
<line x1="1977.4" y1="590.4" x2="1977.4" y2="598.4" stroke="#222" stroke-width="1.5" stroke-linecap="butt"/>
<line x1="1973.9" y1="779.0" x2="1980.9" y2="779.0" stroke="#222" stroke-width="1.5" stroke-linecap="butt"/>
<line x1="1973.9" y1="787.0" x2="1980.9" y2="787.0" stroke="#222" stroke-width="1.5" stroke-linecap="butt"/>
<line x1="1977.4" y1="779.0" x2="1977.4" y2="787.0" stroke="#222" stroke-width="1.5" stroke-linecap="butt"/>
<line x1="843.0" y1="167.7" x2="2021.0" y2="167.7" stroke="#555" stroke-width="1.1" stroke-linecap="butt"/>
<line x1="843.0" y1="186.5" x2="2021.0" y2="186.5" stroke="#555" stroke-width="1.1" stroke-linecap="butt"/>
<circle cx="846.2" cy="186.5" r="1.3" stroke="none" stroke-width="0" fill="#333"/>
<circle cx="1035.0" cy="186.5" r="1.3" stroke="none" stroke-width="0" fill="#333"/>
<circle cx="1223.3" cy="186.5" r="1.3" stroke="none" stroke-width="0" fill="#333"/>
<circle cx="1412.0" cy="186.5" r="1.3" stroke="none" stroke-width="0" fill="#333"/>
<circle cx="1600.3" cy="186.5" r="1.3" stroke="none" stroke-width="0" fill="#333"/>
<circle cx="1789.2" cy="186.5" r="1.3" stroke="none" stroke-width="0" fill="#333"/>
<circle cx="1977.4" cy="186.5" r="1.3" stroke="none" stroke-width="0" fill="#333"/>
<text x="940.6" y="182.5" font-family="Liberation Sans" font-size="6.5" fill="#333" text-anchor="middle" textLength="15" lengthAdjust="spacingAndGlyphs">30'-0"</text>
<text x="1129.2" y="182.5" font-family="Liberation Sans" font-size="6.5" fill="#333" text-anchor="middle" textLength="15" lengthAdjust="spacingAndGlyphs">30'-0"</text>
<text x="1317.7" y="182.5" font-family="Liberation Sans" font-size="6.5" fill="#333" text-anchor="middle" textLength="15" lengthAdjust="spacingAndGlyphs">30'-0"</text>
<text x="1506.2" y="182.5" font-family="Liberation Sans" font-size="6.5" fill="#333" text-anchor="middle" textLength="15" lengthAdjust="spacingAndGlyphs">30'-0"</text>
<text x="1694.8" y="182.5" font-family="Liberation Sans" font-size="6.5" fill="#333" text-anchor="middle" textLength="15" lengthAdjust="spacingAndGlyphs">30'-0"</text>
<text x="1883.3" y="182.5" font-family="Liberation Sans" font-size="6.5" fill="#333" text-anchor="middle" textLength="15" lengthAdjust="spacingAndGlyphs">30'-0"</text>
<text x="1694.6" y="163" font-family="Liberation Sans" font-size="6.5" fill="#333" text-anchor="middle" textLength="16" lengthAdjust="spacingAndGlyphs">270'-0"</text>
<line x1="1790.0" y1="166.0" x2="1976.0" y2="166.0" stroke="#e01010" stroke-width="1.4" stroke-linecap="butt"/>
<path d="M1789.5 166 L1798 162.5 V169.5 Z M1977 166 L1968.5 162.5 V169.5 Z" stroke="none" stroke-width="0" fill="#e01010" />
<line x1="1789.2" y1="160.0" x2="1789.2" y2="175.0" stroke="#e01010" stroke-width="1.2" stroke-linecap="butt"/>
<line x1="1977.4" y1="160.0" x2="1977.4" y2="175.0" stroke="#e01010" stroke-width="1.2" stroke-linecap="butt"/>
<rect x="1870.0" y="161.0" width="27.0" height="10.0" rx="0" stroke="none" stroke-width="0" fill="#fff"/>
<text x="1883.5" y="170" font-family="Liberation Sans" font-size="9" font-style="italic" fill="#e01010" text-anchor="middle" textLength="22" lengthAdjust="spacingAndGlyphs">30' 0"</text>
<line x1="830.5" y1="202.8" x2="2021.0" y2="202.8" stroke="#000" stroke-width="3.3" stroke-linecap="butt"/>
<line x1="832.2" y1="201.2" x2="832.2" y2="799.3" stroke="#000" stroke-width="3.3" stroke-linecap="butt"/>
<line x1="830.5" y1="797.7" x2="2021.0" y2="797.7" stroke="#000" stroke-width="3.3" stroke-linecap="butt"/>
<line x1="950.0" y1="366.0" x2="1066.0" y2="357.5" stroke="#222" stroke-width="1.1" stroke-linecap="butt"/>
<path d="M1066.0 204.0 L1066.0 344.0" stroke="#1a1a1a" stroke-width="3.3" fill="none" stroke-linejoin="round"/>
<path d="M1066.0 204.0 L1066.0 344.0" stroke="#fff" stroke-width="1.2999999999999998" fill="none" />
<path d="M1066.0 204.0 L1066.0 344.0" stroke="#555" stroke-width="1.2999999999999998" fill="none" stroke-dasharray="1.1 1.3" />
<path d="M1066 344 Q1066 353 1076 352.6 L1185 346.7 Q1193 346 1193 338" stroke="#1a1a1a" stroke-width="3.6999999999999997" fill="none" />
<path d="M1066 344 Q1066 353 1076 352.6 L1185 346.7 Q1193 346 1193 338" stroke="#fff" stroke-width="1.6999999999999997" fill="none" />
<path d="M1066 344 Q1066 353 1076 352.6 L1185 346.7 Q1193 346 1193 338" stroke="#555" stroke-width="1.6999999999999997" fill="none" stroke-dasharray="1.1 1.3" />
<path d="M1193.0 204.0 L1193.0 338.0" stroke="#1a1a1a" stroke-width="3.3" fill="none" stroke-linejoin="round"/>
<path d="M1193.0 204.0 L1193.0 338.0" stroke="#fff" stroke-width="1.2999999999999998" fill="none" />
<path d="M1193.0 204.0 L1193.0 338.0" stroke="#555" stroke-width="1.2999999999999998" fill="none" stroke-dasharray="1.1 1.3" />
<path d="M1129.2 204.0 L1129.2 350.0" stroke="#1a1a1a" stroke-width="2.9" fill="none" stroke-linejoin="round"/>
<path d="M1129.2 204.0 L1129.2 350.0" stroke="#fff" stroke-width="0.8999999999999999" fill="none" />
<path d="M1129.2 204.0 L1129.2 350.0" stroke="#555" stroke-width="0.8999999999999999" fill="none" stroke-dasharray="1.1 1.3" />
<path d="M1066.0 270.7 L1193.0 270.7" stroke="#1a1a1a" stroke-width="3.3" fill="none" stroke-linejoin="round"/>
<path d="M1066.0 270.7 L1193.0 270.7" stroke="#fff" stroke-width="1.2999999999999998" fill="none" />
<path d="M1066.0 270.7 L1193.0 270.7" stroke="#555" stroke-width="1.2999999999999998" fill="none" stroke-dasharray="1.1 1.3" />
<path d="M1088.0 268.5 A22 22 0 0 0 1066.0 246.5" stroke="#1a1a1a" stroke-width="1" fill="none" />
<line x1="1066.0" y1="268.5" x2="1088.0" y2="268.5" stroke="#1a1a1a" stroke-width="2.2" stroke-linecap="butt"/>
<path d="M1088.0 273.0 A22 22 0 0 1 1066.0 295.0" stroke="#1a1a1a" stroke-width="1" fill="none" />
<line x1="1066.0" y1="273.0" x2="1088.0" y2="273.0" stroke="#1a1a1a" stroke-width="2.2" stroke-linecap="butt"/>
<path d="M1171.0 268.5 A22 22 0 0 1 1193.0 246.5" stroke="#1a1a1a" stroke-width="1" fill="none" />
<line x1="1193.0" y1="268.5" x2="1171.0" y2="268.5" stroke="#1a1a1a" stroke-width="2.2" stroke-linecap="butt"/>
<path d="M1171.0 273.0 A22 22 0 0 0 1193.0 295.0" stroke="#1a1a1a" stroke-width="1" fill="none" />
<line x1="1193.0" y1="273.0" x2="1171.0" y2="273.0" stroke="#1a1a1a" stroke-width="2.2" stroke-linecap="butt"/>
<path d="M1066.0 204.0 A4.88 4.88 0 0 1 1075.8 204.0 A4.88 4.88 0 0 1 1085.5 204.0 A4.88 4.88 0 0 1 1095.3 204.0 A4.88 4.88 0 0 1 1105.1 204.0 A4.88 4.88 0 0 1 1114.8 204.0 A4.88 4.88 0 0 1 1124.6 204.0 A4.88 4.88 0 0 1 1134.4 204.0 A4.88 4.88 0 0 1 1144.2 204.0 A4.88 4.88 0 0 1 1153.9 204.0 A4.88 4.88 0 0 1 1163.7 204.0 A4.88 4.88 0 0 1 1173.5 204.0 A4.88 4.88 0 0 1 1183.2 204.0 A4.88 4.88 0 0 1 1193.0 204.0 A5.07 5.07 0 0 1 1193.0 214.1 A5.07 5.07 0 0 1 1193.0 224.3 A5.07 5.07 0 0 1 1193.0 234.4 A5.07 5.07 0 0 1 1193.0 244.6 A5.07 5.07 0 0 1 1193.0 254.7 A5.07 5.07 0 0 1 1193.0 264.9 A5.07 5.07 0 0 1 1193.0 275.0 A5.07 5.07 0 0 1 1193.0 285.1 A5.07 5.07 0 0 1 1193.0 295.3 A5.07 5.07 0 0 1 1193.0 305.4 A5.07 5.07 0 0 1 1193.0 315.6 A5.07 5.07 0 0 1 1193.0 325.7 A5.07 5.07 0 0 1 1193.0 335.9 A5.07 5.07 0 0 1 1193.0 346.0 A4.89 4.89 0 0 1 1183.2 346.5 A4.89 4.89 0 0 1 1173.5 346.9 A4.89 4.89 0 0 1 1163.7 347.4 A4.89 4.89 0 0 1 1153.9 347.8 A4.89 4.89 0 0 1 1144.2 348.3 A4.89 4.89 0 0 1 1134.4 348.8 A4.89 4.89 0 0 1 1124.6 349.2 A4.89 4.89 0 0 1 1114.8 349.7 A4.89 4.89 0 0 1 1105.1 350.2 A4.89 4.89 0 0 1 1095.3 350.6 A4.89 4.89 0 0 1 1085.5 351.1 A4.89 4.89 0 0 1 1075.8 351.5 A4.89 4.89 0 0 1 1066.0 352.0 A4.93 4.93 0 0 1 1066.0 342.1 A4.93 4.93 0 0 1 1066.0 332.3 A4.93 4.93 0 0 1 1066.0 322.4 A4.93 4.93 0 0 1 1066.0 312.5 A4.93 4.93 0 0 1 1066.0 302.7 A4.93 4.93 0 0 1 1066.0 292.8 A4.93 4.93 0 0 1 1066.0 282.9 A4.93 4.93 0 0 1 1066.0 273.1 A4.93 4.93 0 0 1 1066.0 263.2 A4.93 4.93 0 0 1 1066.0 253.3 A4.93 4.93 0 0 1 1066.0 243.5 A4.93 4.93 0 0 1 1066.0 233.6 A4.93 4.93 0 0 1 1066.0 223.7 A4.93 4.93 0 0 1 1066.0 213.9 A4.93 4.93 0 0 1 1066.0 204.0" stroke="#3a5fc8" stroke-width="1.1" fill="none"/>
<circle cx="1066.0" cy="258.4" r="6.3" stroke="#333" stroke-width="0.9" fill="none"/>
<text x="1066.0" y="260.2" font-family="Liberation Sans" font-size="5" fill="#444" text-anchor="middle">201</text>
<circle cx="1066.0" cy="283.6" r="6.3" stroke="#333" stroke-width="0.9" fill="none"/>
<text x="1066.0" y="285.4" font-family="Liberation Sans" font-size="5" fill="#444" text-anchor="middle">202</text>
<circle cx="1192.0" cy="258.4" r="6.3" stroke="#333" stroke-width="0.9" fill="none"/>
<text x="1192.0" y="260.2" font-family="Liberation Sans" font-size="5" fill="#444" text-anchor="middle">203</text>
<circle cx="1192.0" cy="283.6" r="6.3" stroke="#333" stroke-width="0.9" fill="none"/>
<text x="1192.0" y="285.4" font-family="Liberation Sans" font-size="5" fill="#444" text-anchor="middle">204</text>
<path d="M1256.0 204.0 L1256.0 248.0" stroke="#1a1a1a" stroke-width="3.3" fill="none" stroke-linejoin="round"/>
<path d="M1256.0 204.0 L1256.0 248.0" stroke="#fff" stroke-width="1.2999999999999998" fill="none" />
<path d="M1256.0 204.0 L1256.0 248.0" stroke="#555" stroke-width="1.2999999999999998" fill="none" stroke-dasharray="1.1 1.3" />
<path d="M1256.0 296.0 L1256.0 325.0" stroke="#1a1a1a" stroke-width="3.3" fill="none" stroke-linejoin="round"/>
<path d="M1256.0 296.0 L1256.0 325.0" stroke="#fff" stroke-width="1.2999999999999998" fill="none" />
<path d="M1256.0 296.0 L1256.0 325.0" stroke="#555" stroke-width="1.2999999999999998" fill="none" stroke-dasharray="1.1 1.3" />
<path d="M1256 325 Q1256 340 1272 339.5 L1381 329" stroke="#1a1a1a" stroke-width="3.6999999999999997" fill="none" />
<path d="M1256 325 Q1256 340 1272 339.5 L1381 329" stroke="#fff" stroke-width="1.6999999999999997" fill="none" />
<path d="M1256 325 Q1256 340 1272 339.5 L1381 329" stroke="#555" stroke-width="1.6999999999999997" fill="none" stroke-dasharray="1.1 1.3" />
<path d="M1381.2 204.0 L1381.2 331.0" stroke="#1a1a1a" stroke-width="3.3" fill="none" stroke-linejoin="round"/>
<path d="M1381.2 204.0 L1381.2 331.0" stroke="#fff" stroke-width="1.2999999999999998" fill="none" />
<path d="M1381.2 204.0 L1381.2 331.0" stroke="#555" stroke-width="1.2999999999999998" fill="none" stroke-dasharray="1.1 1.3" />
<path d="M1256.0 271.0 L1381.0 271.0" stroke="#1a1a1a" stroke-width="3.3" fill="none" stroke-linejoin="round"/>
<path d="M1256.0 271.0 L1381.0 271.0" stroke="#fff" stroke-width="1.2999999999999998" fill="none" />
<path d="M1256.0 271.0 L1381.0 271.0" stroke="#555" stroke-width="1.2999999999999998" fill="none" stroke-dasharray="1.1 1.3" />
<path d="M1277.0 268.0 A21 21 0 0 0 1256.0 247.0" stroke="#1a1a1a" stroke-width="1" fill="none" />
<line x1="1256.0" y1="268.0" x2="1277.0" y2="268.0" stroke="#1a1a1a" stroke-width="2.2" stroke-linecap="butt"/>
<path d="M1277.0 274.0 A21 21 0 0 1 1256.0 295.0" stroke="#1a1a1a" stroke-width="1" fill="none" />
<line x1="1256.0" y1="274.0" x2="1277.0" y2="274.0" stroke="#1a1a1a" stroke-width="2.2" stroke-linecap="butt"/>
<circle cx="1255.0" cy="258.4" r="6.3" stroke="#333" stroke-width="0.9" fill="none"/>
<text x="1255.0" y="260.2" font-family="Liberation Sans" font-size="5" fill="#444" text-anchor="middle">205</text>
<circle cx="1255.0" cy="283.6" r="6.3" stroke="#333" stroke-width="0.9" fill="none"/>
<text x="1255.0" y="285.4" font-family="Liberation Sans" font-size="5" fill="#444" text-anchor="middle">206</text>
<line x1="1193.0" y1="346.5" x2="1265.0" y2="340.3" stroke="#1a1a1a" stroke-width="1" stroke-dasharray="3 2" stroke-linecap="butt"/>
<path d="M1403.0 330.2 L1569.5 316.4" stroke="#1a1a1a" stroke-width="3.3" fill="none" stroke-linejoin="round"/>
<path d="M1403.0 330.2 L1569.5 316.4" stroke="#fff" stroke-width="1.2999999999999998" fill="none" />
<path d="M1403.0 330.2 L1569.5 316.4" stroke="#555" stroke-width="1.2999999999999998" fill="none" stroke-dasharray="1.1 1.3" />
<path d="M1590.0 316.0 L1600.4 315.0" stroke="#1a1a1a" stroke-width="3.3" fill="none" stroke-linejoin="round"/>
<path d="M1590.0 316.0 L1600.4 315.0" stroke="#fff" stroke-width="1.2999999999999998" fill="none" />
<path d="M1590.0 316.0 L1600.4 315.0" stroke="#555" stroke-width="1.2999999999999998" fill="none" stroke-dasharray="1.1 1.3" />
<path d="M1600.4 204.0 L1600.4 315.0" stroke="#1a1a1a" stroke-width="3.5" fill="none" stroke-linejoin="round"/>
<path d="M1600.4 204.0 L1600.4 315.0" stroke="#fff" stroke-width="1.5" fill="none" />
<path d="M1600.4 204.0 L1600.4 315.0" stroke="#555" stroke-width="1.5" fill="none" stroke-dasharray="1.1 1.3" />
<path d="M1586.0 299.0 A17 17 0 0 0 1569.0 316.0" stroke="#1a1a1a" stroke-width="1" fill="none" />
<line x1="1586.0" y1="316.0" x2="1586.0" y2="299.0" stroke="#1a1a1a" stroke-width="2.2" stroke-linecap="butt"/>
<path d="M1384.0 312.0 A19 19 0 0 1 1403.0 331.0" stroke="#1a1a1a" stroke-width="1" fill="none" />
<line x1="1384.0" y1="331.0" x2="1384.0" y2="312.0" stroke="#1a1a1a" stroke-width="2.2" stroke-linecap="butt"/>
<circle cx="1394.0" cy="332.0" r="6.3" stroke="#333" stroke-width="0.9" fill="none"/>
<text x="1394.0" y="333.8" font-family="Liberation Sans" font-size="5" fill="#444" text-anchor="middle">207B</text>
<circle cx="1578.0" cy="313.0" r="6.3" stroke="#333" stroke-width="0.9" fill="none"/>
<text x="1578.0" y="314.8" font-family="Liberation Sans" font-size="5" fill="#444" text-anchor="middle">207A</text>
<path d="M1416.4 251.4 H1441.6 V277.2 H1416.4 Z M1416.4 251.4 L1403.5 264.3 L1416.4 277.2" stroke="#1a1a1a" stroke-width="1.2" fill="#fdb48c" />
<text x="1429" y="267" font-family="Liberation Sans" font-size="5.5" fill="#333" text-anchor="middle">A7.01</text>
<rect x="1616.0" y="223.0" width="62.6" height="31.7" rx="0" stroke="#1a1a1a" stroke-width="1.1" fill="none" stroke-dasharray="3 2"/>
<path d="M1625.0 313.5 L1636.0 311.8" stroke="#1a1a1a" stroke-width="3.3" fill="none" stroke-linejoin="round"/>
<path d="M1625.0 313.5 L1636.0 311.8" stroke="#fff" stroke-width="1.2999999999999998" fill="none" />
<path d="M1625.0 313.5 L1636.0 311.8" stroke="#555" stroke-width="1.2999999999999998" fill="none" stroke-dasharray="1.1 1.3" />
<path d="M1604.4 295.0 A19 19 0 0 1 1623.4 314.0" stroke="#1a1a1a" stroke-width="1" fill="none" />
<line x1="1604.4" y1="314.0" x2="1604.4" y2="295.0" stroke="#1a1a1a" stroke-width="2.2" stroke-linecap="butt"/>
<circle cx="1614.0" cy="314.0" r="6.3" stroke="#333" stroke-width="0.9" fill="none"/>
<text x="1614.0" y="315.8" font-family="Liberation Sans" font-size="5" fill="#444" text-anchor="middle">208</text>
<path d="M1636 311.8 Q1694.6 240 1755 312" stroke="#1a1a1a" stroke-width="3.6999999999999997" fill="none" />
<path d="M1636 311.8 Q1694.6 240 1755 312" stroke="#fff" stroke-width="1.6999999999999997" fill="none" />
<path d="M1636 311.8 Q1694.6 240 1755 312" stroke="#555" stroke-width="1.6999999999999997" fill="none" stroke-dasharray="1.1 1.3" />
<line x1="1694.6" y1="204.0" x2="1694.6" y2="276.0" stroke="#1a1a1a" stroke-width="1.3" stroke-linecap="butt"/>
<rect x="1710.7" y="223.0" width="63.3" height="31.7" rx="0" stroke="#1a1a1a" stroke-width="1.1" fill="none" stroke-dasharray="3 2"/>
<path d="M1755.0 312.0 L1789.2 315.0" stroke="#1a1a1a" stroke-width="3.3" fill="none" stroke-linejoin="round"/>
<path d="M1755.0 312.0 L1789.2 315.0" stroke="#fff" stroke-width="1.2999999999999998" fill="none" />
<path d="M1755.0 312.0 L1789.2 315.0" stroke="#555" stroke-width="1.2999999999999998" fill="none" stroke-dasharray="1.1 1.3" />
<path d="M1789.2 204.0 L1789.2 315.0" stroke="#1a1a1a" stroke-width="3.5" fill="none" stroke-linejoin="round"/>
<path d="M1789.2 204.0 L1789.2 315.0" stroke="#fff" stroke-width="1.5" fill="none" />
<path d="M1789.2 204.0 L1789.2 315.0" stroke="#555" stroke-width="1.5" fill="none" stroke-dasharray="1.1 1.3" />
<path d="M1785.0 297.0 A18 18 0 0 0 1767.0 315.0" stroke="#1a1a1a" stroke-width="1" fill="none" />
<line x1="1785.0" y1="315.0" x2="1785.0" y2="297.0" stroke="#1a1a1a" stroke-width="2.2" stroke-linecap="butt"/>
<path d="M1694.6 216.5 A4.77 4.77 0 0 1 1704.1 216.5 A4.77 4.77 0 0 1 1713.7 216.5 A4.77 4.77 0 0 1 1723.2 216.5 A4.77 4.77 0 0 1 1732.8 216.5 A4.77 4.77 0 0 1 1742.3 216.5 A4.77 4.77 0 0 1 1751.8 216.5 A4.77 4.77 0 0 1 1761.4 216.5 A4.77 4.77 0 0 1 1770.9 216.5 A4.77 4.77 0 0 1 1780.5 216.5 A4.77 4.77 0 0 1 1790.0 216.5 A5.02 5.02 0 0 1 1790.0 226.6 A5.02 5.02 0 0 1 1790.0 236.6 A5.02 5.02 0 0 1 1790.0 246.7 A5.02 5.02 0 0 1 1790.0 256.7 A5.02 5.02 0 0 1 1790.0 266.8 A5.02 5.02 0 0 1 1790.0 276.8 A5.02 5.02 0 0 1 1790.0 286.9 A5.02 5.02 0 0 1 1790.0 296.9 A5.02 5.02 0 0 1 1790.0 306.9 A5.02 5.02 0 0 1 1790.0 317.0 A5.68 5.68 0 0 1 1778.7 316.0 A5.68 5.68 0 0 1 1767.3 315.0 A5.68 5.68 0 0 1 1756.0 314.0 A5.07 5.07 0 0 1 1749.0 306.7 A5.07 5.07 0 0 1 1741.9 299.3 A5.07 5.07 0 0 1 1734.9 292.0 A5.82 5.82 0 0 1 1724.9 286.0 A5.82 5.82 0 0 1 1714.9 280.0 A5.07 5.07 0 0 1 1705.0 278.0 A5.07 5.07 0 0 1 1695.0 275.9 A0.23 0.23 0 0 1 1694.6 276.0 A4.95 4.95 0 0 1 1694.6 266.1 A4.95 4.95 0 0 1 1694.6 256.2 A4.95 4.95 0 0 1 1694.6 246.2 A4.95 4.95 0 0 1 1694.6 236.3 A4.95 4.95 0 0 1 1694.6 226.4 A4.95 4.95 0 0 1 1694.6 216.5" stroke="#ff1a1a" stroke-width="1.1" fill="none"/>
<circle cx="1775.0" cy="314.0" r="6.3" stroke="#333" stroke-width="0.9" fill="none"/>
<text x="1775.0" y="315.8" font-family="Liberation Sans" font-size="5" fill="#444" text-anchor="middle">209</text>
<path d="M1663.3 313.6 H1726.8 Q1722 329 1695 329.2 Q1668 329 1663.3 313.6 Z" stroke="#1a1a1a" stroke-width="1.2" fill="none" />
<rect x="1820.5" y="221.6" width="31.5" height="76.9" rx="0" stroke="#1a1a1a" stroke-width="1.1" fill="none" stroke-dasharray="3 2"/>
<path d="M1800.0 316.0 L1883.0 321.0" stroke="#1a1a1a" stroke-width="3.6999999999999997" fill="none" stroke-linejoin="round"/>
<path d="M1800.0 316.0 L1883.0 321.0" stroke="#fff" stroke-width="1.6999999999999997" fill="none" />
<path d="M1800.0 316.0 L1883.0 321.0" stroke="#555" stroke-width="1.6999999999999997" fill="none" stroke-dasharray="1.1 1.3" />
<path d="M1883.0 204.0 L1883.0 321.0" stroke="#1a1a1a" stroke-width="3.3" fill="none" stroke-linejoin="round"/>
<path d="M1883.0 204.0 L1883.0 321.0" stroke="#fff" stroke-width="1.2999999999999998" fill="none" />
<path d="M1883.0 204.0 L1883.0 321.0" stroke="#555" stroke-width="1.2999999999999998" fill="none" stroke-dasharray="1.1 1.3" />
<path d="M1905.0 322.0 L1990.0 331.0" stroke="#1a1a1a" stroke-width="3.3" fill="none" stroke-linejoin="round"/>
<path d="M1905.0 322.0 L1990.0 331.0" stroke="#fff" stroke-width="1.2999999999999998" fill="none" />
<path d="M1905.0 322.0 L1990.0 331.0" stroke="#555" stroke-width="1.2999999999999998" fill="none" stroke-dasharray="1.1 1.3" />
<path d="M2005.0 332.0 L2021.0 333.0" stroke="#1a1a1a" stroke-width="3.3" fill="none" stroke-linejoin="round"/>
<path d="M2005.0 332.0 L2021.0 333.0" stroke="#fff" stroke-width="1.2999999999999998" fill="none" />
<path d="M2005.0 332.0 L2021.0 333.0" stroke="#555" stroke-width="1.2999999999999998" fill="none" stroke-dasharray="1.1 1.3" />
<path d="M2009.0 204.0 L2009.0 332.0" stroke="#1a1a1a" stroke-width="3.3" fill="none" stroke-linejoin="round"/>
<path d="M2009.0 204.0 L2009.0 332.0" stroke="#fff" stroke-width="1.2999999999999998" fill="none" />
<path d="M2009.0 204.0 L2009.0 332.0" stroke="#555" stroke-width="1.2999999999999998" fill="none" stroke-dasharray="1.1 1.3" />
<rect x="1907.3" y="237.8" width="77.5" height="44.5" rx="0" stroke="#1a1a1a" stroke-width="1.1" fill="none" stroke-dasharray="3 2"/>
<path d="M1802.0 298.0 A18 18 0 0 1 1820.0 316.0" stroke="#1a1a1a" stroke-width="1" fill="none" />
<line x1="1802.0" y1="316.0" x2="1802.0" y2="298.0" stroke="#1a1a1a" stroke-width="2.2" stroke-linecap="butt"/>
<circle cx="1810.0" cy="316.0" r="6.3" stroke="#333" stroke-width="0.9" fill="none"/>
<text x="1810.0" y="317.8" font-family="Liberation Sans" font-size="5" fill="#444" text-anchor="middle">210</text>
<path d="M1888.6 304.0 A18 18 0 0 1 1906.6 322.0" stroke="#1a1a1a" stroke-width="1" fill="none" />
<line x1="1888.6" y1="322.0" x2="1888.6" y2="304.0" stroke="#1a1a1a" stroke-width="2.2" stroke-linecap="butt"/>
<circle cx="1896.0" cy="322.0" r="6.3" stroke="#333" stroke-width="0.9" fill="none"/>
<text x="1896.0" y="323.8" font-family="Liberation Sans" font-size="5" fill="#444" text-anchor="middle">211B</text>
<path d="M2004.5 314.0 A18 18 0 0 0 1986.5 332.0" stroke="#1a1a1a" stroke-width="1" fill="none" />
<line x1="2004.5" y1="332.0" x2="2004.5" y2="314.0" stroke="#1a1a1a" stroke-width="2.2" stroke-linecap="butt"/>
<circle cx="1995.0" cy="331.0" r="6.3" stroke="#333" stroke-width="0.9" fill="none"/>
<text x="1995.0" y="332.8" font-family="Liberation Sans" font-size="5" fill="#444" text-anchor="middle">211A</text>
<text x="910.0" y="282.4" font-family="Liberation Sans" font-size="9.6" font-weight="bold" fill="#1a1a1a" textLength="65.3" lengthAdjust="spacingAndGlyphs" >OPEN OFFICE&#160;&#160;&#160;200</text>
<rect x="910.0" y="283.5" width="65.3" height="2" fill="#1a1a1a"/>
<text x="1071.3" y="235.5" font-family="Liberation Sans" font-size="9.6" font-weight="bold" fill="#4a2a00" textLength="49.3" lengthAdjust="spacingAndGlyphs" >MEETING&#160;&#160;&#160;201</text>
<rect x="1071.3" y="236.6" width="49.3" height="2" fill="#4a2a00"/>
<text x="1136.6" y="235.5" font-family="Liberation Sans" font-size="9.6" font-weight="bold" fill="#4a2a00" textLength="50.0" lengthAdjust="spacingAndGlyphs" >MEETING&#160;&#160;&#160;203</text>
<rect x="1136.6" y="236.6" width="50.0" height="2" fill="#4a2a00"/>
<text x="1073.7" y="312.4" font-family="Liberation Sans" font-size="9.6" font-weight="bold" fill="#4a2a00" textLength="50.0" lengthAdjust="spacingAndGlyphs" >MEETING&#160;&#160;&#160;202</text>
<rect x="1073.7" y="313.5" width="50.0" height="2" fill="#4a2a00"/>
<text x="1136.6" y="312.4" font-family="Liberation Sans" font-size="9.6" font-weight="bold" fill="#4a2a00" textLength="50.0" lengthAdjust="spacingAndGlyphs" >MEETING&#160;&#160;&#160;204</text>
<rect x="1136.6" y="313.5" width="50.0" height="2" fill="#4a2a00"/>
<text x="1294.4" y="239.2" font-family="Liberation Sans" font-size="9.6" font-weight="bold" fill="#1a1a1a" textLength="43.2" lengthAdjust="spacingAndGlyphs" >OFFICE&#160;&#160;&#160;205</text>
<rect x="1294.4" y="240.3" width="43.2" height="2" fill="#1a1a1a"/>
<text x="1294.4" y="306.4" font-family="Liberation Sans" font-size="9.6" font-weight="bold" fill="#004000" textLength="43.2" lengthAdjust="spacingAndGlyphs" >OFFICE&#160;&#160;&#160;206</text>
<rect x="1294.4" y="307.5" width="43.2" height="2" fill="#004000"/>
<text x="1457.3" y="266.0" font-family="Liberation Sans" font-size="9.6" font-weight="bold" fill="#1a1a1a" textLength="67.5" lengthAdjust="spacingAndGlyphs" >CONFERENCE&#160;&#160;&#160;207</text>
<rect x="1457.3" y="267.1" width="67.5" height="2" fill="#1a1a1a"/>
<text x="1622.5" y="266.0" font-family="Liberation Sans" font-size="9.6" font-weight="bold" fill="#1a1a1a" textLength="50.0" lengthAdjust="spacingAndGlyphs" >MEETING&#160;&#160;&#160;208</text>
<rect x="1622.5" y="267.1" width="50.0" height="2" fill="#1a1a1a"/>
<text x="1718.4" y="266.0" font-family="Liberation Sans" font-size="9.6" font-weight="bold" fill="#1a1a1a" textLength="49.6" lengthAdjust="spacingAndGlyphs" >MEETING&#160;&#160;&#160;209</text>
<rect x="1718.4" y="267.1" width="49.6" height="2" fill="#1a1a1a"/>
<text x="1810.4" y="260.9" font-family="Liberation Sans" font-size="9.6" font-weight="bold" fill="#1a1a1a" textLength="50.6" lengthAdjust="spacingAndGlyphs" >MEETING&#160;&#160;&#160;210</text>
<rect x="1810.4" y="262.0" width="50.6" height="2" fill="#1a1a1a"/>
<text x="1912.5" y="262.4" font-family="Liberation Sans" font-size="9.6" font-weight="bold" fill="#1a1a1a" textLength="66.2" lengthAdjust="spacingAndGlyphs" >CONFERENCE&#160;&#160;&#160;211</text>
<rect x="1912.5" y="263.5" width="66.2" height="2" fill="#1a1a1a"/>
<text x="1668.4" y="361.2" font-family="Liberation Sans" font-size="9.6" font-weight="bold" fill="#1a1a1a" textLength="59.3" lengthAdjust="spacingAndGlyphs" >RECEPTION&#160;&#160;&#160;255</text>
<rect x="1668.4" y="362.3" width="59.3" height="2" fill="#1a1a1a"/>
<text x="1297.5" y="254.6" font-family="Liberation Sans" font-size="9" font-weight="normal" fill="#ff2020" textLength="39.0" lengthAdjust="spacingAndGlyphs" >204.616 sf</text>
<text x="1297.5" y="318.2" font-family="Liberation Sans" font-size="9" font-weight="normal" fill="#ff2020" textLength="39.0" lengthAdjust="spacingAndGlyphs" >193.615 sf</text>
<text x="1669.2" y="304.1" font-family="Liberation Serif" font-size="12" font-weight="bold" fill="#ee1010" textLength="52.6" lengthAdjust="spacingAndGlyphs" >Room 001</text>
<line x1="1707.7" y1="279.0" x2="1707.7" y2="291.0" stroke="#ee1010" stroke-width="1.1" stroke-linecap="butt"/>
<text x="1475.7" y="278.3" font-family="Liberation Serif" font-size="8.5" font-weight="bold" fill="#1f5a5a" textLength="41.9" lengthAdjust="spacingAndGlyphs" >23.152 sq m</text>
<path d="M831 375.3 L938 366.5 Q950 366 950 378 V420 M950 455 V545 M950 580 V622 Q950 634 938 633 L831 626" stroke="#2a1a3a" stroke-width="3.6999999999999997" fill="none" />
<path d="M831 375.3 L938 366.5 Q950 366 950 378 V420 M950 455 V545 M950 580 V622 Q950 634 938 633 L831 626" stroke="#fff" stroke-width="1.6999999999999997" fill="none" />
<path d="M831 375.3 L938 366.5 Q950 366 950 378 V420 M950 455 V545 M950 580 V622 Q950 634 938 633 L831 626" stroke="#555" stroke-width="1.6999999999999997" fill="none" stroke-dasharray="1.1 1.3" />
<path d="M831.0 437.7 L950.0 437.7" stroke="#2a1a3a" stroke-width="3.3" fill="none" stroke-linejoin="round"/>
<path d="M831.0 437.7 L950.0 437.7" stroke="#fff" stroke-width="1.2999999999999998" fill="none" />
<path d="M831.0 437.7 L950.0 437.7" stroke="#555" stroke-width="1.2999999999999998" fill="none" stroke-dasharray="1.1 1.3" />
<path d="M831.0 562.5 L950.0 562.5" stroke="#2a1a3a" stroke-width="3.3" fill="none" stroke-linejoin="round"/>
<path d="M831.0 562.5 L950.0 562.5" stroke="#fff" stroke-width="1.2999999999999998" fill="none" />
<path d="M831.0 562.5 L950.0 562.5" stroke="#555" stroke-width="1.2999999999999998" fill="none" stroke-dasharray="1.1 1.3" />
<rect x="866.0" y="453.5" width="49.4" height="94.2" rx="0" stroke="#2a1a3a" stroke-width="1.2" fill="none"/>
<path d="M929.0 435.7 A21 21 0 0 1 950.0 414.7" stroke="#1a1a1a" stroke-width="1" fill="none" />
<line x1="950.0" y1="435.7" x2="929.0" y2="435.7" stroke="#1a1a1a" stroke-width="2.2" stroke-linecap="butt"/>
<path d="M929.0 439.7 A21 21 0 0 0 950.0 460.7" stroke="#1a1a1a" stroke-width="1" fill="none" />
<line x1="950.0" y1="439.7" x2="929.0" y2="439.7" stroke="#1a1a1a" stroke-width="2.2" stroke-linecap="butt"/>
<path d="M929.0 560.5 A21 21 0 0 1 950.0 539.5" stroke="#1a1a1a" stroke-width="1" fill="none" />
<line x1="950.0" y1="560.5" x2="929.0" y2="560.5" stroke="#1a1a1a" stroke-width="2.2" stroke-linecap="butt"/>
<path d="M929.0 564.5 A21 21 0 0 0 950.0 585.5" stroke="#1a1a1a" stroke-width="1" fill="none" />
<line x1="950.0" y1="564.5" x2="929.0" y2="564.5" stroke="#1a1a1a" stroke-width="2.2" stroke-linecap="butt"/>
<path d="M831.0 375.3 A4.97 4.97 0 0 1 840.9 374.5 A4.97 4.97 0 0 1 850.8 373.8 A4.97 4.97 0 0 1 860.8 373.0 A4.97 4.97 0 0 1 870.7 372.2 A4.97 4.97 0 0 1 880.6 371.4 A4.97 4.97 0 0 1 890.5 370.6 A4.97 4.97 0 0 1 900.4 369.9 A4.97 4.97 0 0 1 910.3 369.1 A4.97 4.97 0 0 1 920.2 368.3 A4.97 4.97 0 0 1 930.2 367.6 A4.97 4.97 0 0 1 940.1 366.8 A4.97 4.97 0 0 1 950.0 366.0 A4.96 4.96 0 0 1 950.0 375.9 A4.96 4.96 0 0 1 950.0 385.9 A4.96 4.96 0 0 1 950.0 395.8 A4.96 4.96 0 0 1 950.0 405.7 A4.96 4.96 0 0 1 950.0 415.6 A4.96 4.96 0 0 1 950.0 425.6 A4.96 4.96 0 0 1 950.0 435.5 A4.96 4.96 0 0 1 950.0 445.4 A4.96 4.96 0 0 1 950.0 455.3 A4.96 4.96 0 0 1 950.0 465.3 A4.96 4.96 0 0 1 950.0 475.2 A4.96 4.96 0 0 1 950.0 485.1 A4.96 4.96 0 0 1 950.0 495.0 A4.96 4.96 0 0 1 950.0 505.0 A4.96 4.96 0 0 1 950.0 514.9 A4.96 4.96 0 0 1 950.0 524.8 A4.96 4.96 0 0 1 950.0 534.7 A4.96 4.96 0 0 1 950.0 544.7 A4.96 4.96 0 0 1 950.0 554.6 A4.96 4.96 0 0 1 950.0 564.5 A4.96 4.96 0 0 1 950.0 574.4 A4.96 4.96 0 0 1 950.0 584.4 A4.96 4.96 0 0 1 950.0 594.3 A4.96 4.96 0 0 1 950.0 604.2 A4.96 4.96 0 0 1 950.0 614.1 A4.96 4.96 0 0 1 950.0 624.1 A4.96 4.96 0 0 1 950.0 634.0 A4.96 4.96 0 0 1 940.1 633.3 A4.96 4.96 0 0 1 930.2 632.7 A4.96 4.96 0 0 1 920.2 632.0 A4.96 4.96 0 0 1 910.3 631.3 A4.96 4.96 0 0 1 900.4 630.7 A4.96 4.96 0 0 1 890.5 630.0 A4.96 4.96 0 0 1 880.6 629.3 A4.96 4.96 0 0 1 870.7 628.7 A4.96 4.96 0 0 1 860.8 628.0 A4.96 4.96 0 0 1 850.8 627.3 A4.96 4.96 0 0 1 840.9 626.7 A4.96 4.96 0 0 1 831.0 626.0 A5.01 5.01 0 0 1 831.0 616.0 A5.01 5.01 0 0 1 831.0 605.9 A5.01 5.01 0 0 1 831.0 595.9 A5.01 5.01 0 0 1 831.0 585.9 A5.01 5.01 0 0 1 831.0 575.9 A5.01 5.01 0 0 1 831.0 565.8 A5.01 5.01 0 0 1 831.0 555.8 A5.01 5.01 0 0 1 831.0 545.8 A5.01 5.01 0 0 1 831.0 535.7 A5.01 5.01 0 0 1 831.0 525.7 A5.01 5.01 0 0 1 831.0 515.7 A5.01 5.01 0 0 1 831.0 505.7 A5.01 5.01 0 0 1 831.0 495.6 A5.01 5.01 0 0 1 831.0 485.6 A5.01 5.01 0 0 1 831.0 475.6 A5.01 5.01 0 0 1 831.0 465.6 A5.01 5.01 0 0 1 831.0 455.5 A5.01 5.01 0 0 1 831.0 445.5 A5.01 5.01 0 0 1 831.0 435.5 A5.01 5.01 0 0 1 831.0 425.4 A5.01 5.01 0 0 1 831.0 415.4 A5.01 5.01 0 0 1 831.0 405.4 A5.01 5.01 0 0 1 831.0 395.4 A5.01 5.01 0 0 1 831.0 385.3 A5.01 5.01 0 0 1 831.0 375.3" stroke="#3a5fc8" stroke-width="1.1" fill="none"/>
<circle cx="945.0" cy="425.0" r="6.3" stroke="#333" stroke-width="0.9" fill="none"/>
<text x="945.0" y="426.8" font-family="Liberation Sans" font-size="5" fill="#444" text-anchor="middle">247</text>
<circle cx="945.0" cy="450.0" r="6.3" stroke="#333" stroke-width="0.9" fill="none"/>
<text x="945.0" y="451.8" font-family="Liberation Sans" font-size="5" fill="#444" text-anchor="middle">246A</text>
<circle cx="945.0" cy="550.0" r="6.3" stroke="#333" stroke-width="0.9" fill="none"/>
<text x="945.0" y="551.8" font-family="Liberation Sans" font-size="5" fill="#444" text-anchor="middle">246B</text>
<circle cx="945.0" cy="576.0" r="6.3" stroke="#333" stroke-width="0.9" fill="none"/>
<text x="945.0" y="577.8" font-family="Liberation Sans" font-size="5" fill="#444" text-anchor="middle">245</text>
<line x1="950.0" y1="634.0" x2="1066.0" y2="647.0" stroke="#222" stroke-width="1.1" stroke-linecap="butt"/>
<path d="M999 397.5 H1404 M989 407.5 Q989 397.5 999 397.5 M989 407.5 V593 Q989 603.2 999 603.2 H1404" stroke="#1a1a1a" stroke-width="1" fill="none" stroke-dasharray="3 2" />
<path d="M1326 416 H1396 Q1404.4 416 1404.4 425 V575 Q1404.4 584.6 1396 584.6 H1326 Q1317.4 584.6 1317.4 575 V525 M1317.4 476 V425 Q1317.4 416 1326 416" stroke="#1a2a44" stroke-width="3.6999999999999997" fill="none" />
<path d="M1326 416 H1396 Q1404.4 416 1404.4 425 V575 Q1404.4 584.6 1396 584.6 H1326 Q1317.4 584.6 1317.4 575 V525 M1317.4 476 V425 Q1317.4 416 1326 416" stroke="#c8d4e4" stroke-width="1.6999999999999997" fill="none" />
<path d="M1326 416 H1396 Q1404.4 416 1404.4 425 V575 Q1404.4 584.6 1396 584.6 H1326 Q1317.4 584.6 1317.4 575 V525 M1317.4 476 V425 Q1317.4 416 1326 416" stroke="#555" stroke-width="1.6999999999999997" fill="none" stroke-dasharray="1.1 1.3" />
<path d="M1317.4 500.8 L1420.0 500.8" stroke="#1a2a44" stroke-width="3.3" fill="none" stroke-linejoin="round"/>
<path d="M1317.4 500.8 L1420.0 500.8" stroke="#fff" stroke-width="1.2999999999999998" fill="none" />
<path d="M1317.4 500.8 L1420.0 500.8" stroke="#555" stroke-width="1.2999999999999998" fill="none" stroke-dasharray="1.1 1.3" />
<path d="M1339.4 499.0 A22 22 0 0 0 1317.4 477.0" stroke="#1a1a1a" stroke-width="1" fill="none" />
<line x1="1317.4" y1="499.0" x2="1339.4" y2="499.0" stroke="#1a1a1a" stroke-width="2.2" stroke-linecap="butt"/>
<path d="M1339.4 503.0 A22 22 0 0 1 1317.4 525.0" stroke="#1a1a1a" stroke-width="1" fill="none" />
<line x1="1317.4" y1="503.0" x2="1339.4" y2="503.0" stroke="#1a1a1a" stroke-width="2.2" stroke-linecap="butt"/>
<circle cx="1319.0" cy="487.8" r="6.3" stroke="#333" stroke-width="0.9" fill="none"/>
<text x="1319.0" y="489.6" font-family="Liberation Sans" font-size="5" fill="#444" text-anchor="middle">249</text>
<circle cx="1319.0" cy="513.0" r="6.3" stroke="#333" stroke-width="0.9" fill="none"/>
<text x="1319.0" y="514.8" font-family="Liberation Sans" font-size="5" fill="#444" text-anchor="middle">250</text>
<path d="M1442.3 398.4 V388 Q1442 378 1432 378 H1414 Q1404 378 1404 388 V612 Q1404 622.5 1414 622.5 H1432 Q1442 622.5 1442.3 612 V598" stroke="#1a1a1a" stroke-width="3.6999999999999997" fill="none" />
<path d="M1442.3 398.4 V388 Q1442 378 1432 378 H1414 Q1404 378 1404 388 V612 Q1404 622.5 1414 622.5 H1432 Q1442 622.5 1442.3 612 V598" stroke="#fff" stroke-width="1.6999999999999997" fill="none" />
<path d="M1442.3 398.4 V388 Q1442 378 1432 378 H1414 Q1404 378 1404 388 V612 Q1404 622.5 1414 622.5 H1432 Q1442 622.5 1442.3 612 V598" stroke="#555" stroke-width="1.6999999999999997" fill="none" stroke-dasharray="1.1 1.3" />
<path d="M1501 398.4 V390 Q1501 385.6 1506 385.6 L1641.9 394.2 Q1659.4 396 1659.4 412 V585 Q1659.4 600 1641 603 L1506 615 Q1501 615 1501 610 V598" stroke="#1a1a1a" stroke-width="3.6999999999999997" fill="none" />
<path d="M1501 398.4 V390 Q1501 385.6 1506 385.6 L1641.9 394.2 Q1659.4 396 1659.4 412 V585 Q1659.4 600 1641 603 L1506 615 Q1501 615 1501 610 V598" stroke="#fff" stroke-width="1.6999999999999997" fill="none" />
<path d="M1501 398.4 V390 Q1501 385.6 1506 385.6 L1641.9 394.2 Q1659.4 396 1659.4 412 V585 Q1659.4 600 1641 603 L1506 615 Q1501 615 1501 610 V598" stroke="#555" stroke-width="1.6999999999999997" fill="none" stroke-dasharray="1.1 1.3" />
<line x1="1442.0" y1="378.0" x2="1501.0" y2="385.0" stroke="#1a1a1a" stroke-width="1" stroke-dasharray="3 2" stroke-linecap="butt"/>
<path d="M1418.8 398.4 L1605.6 398.4" stroke="#1a1a1a" stroke-width="3.3" fill="none" stroke-linejoin="round"/>
<path d="M1418.8 398.4 L1605.6 398.4" stroke="#fff" stroke-width="1.2999999999999998" fill="none" />
<path d="M1418.8 398.4 L1605.6 398.4" stroke="#555" stroke-width="1.2999999999999998" fill="none" stroke-dasharray="1.1 1.3" />
<path d="M1418.8 601.5 L1605.6 601.5" stroke="#1a1a1a" stroke-width="3.3" fill="none" stroke-linejoin="round"/>
<path d="M1418.8 601.5 L1605.6 601.5" stroke="#fff" stroke-width="1.2999999999999998" fill="none" />
<path d="M1418.8 601.5 L1605.6 601.5" stroke="#555" stroke-width="1.2999999999999998" fill="none" stroke-dasharray="1.1 1.3" />
<path d="M1418.8 398.4 L1418.8 601.5" stroke="#1a1a1a" stroke-width="3.3" fill="none" stroke-linejoin="round"/>
<path d="M1418.8 398.4 L1418.8 601.5" stroke="#fff" stroke-width="1.2999999999999998" fill="none" />
<path d="M1418.8 398.4 L1418.8 601.5" stroke="#555" stroke-width="1.2999999999999998" fill="none" stroke-dasharray="1.1 1.3" />
<path d="M1468.0 398.4 L1468.0 421.0" stroke="#1a1a1a" stroke-width="2.6999999999999997" fill="none" stroke-linejoin="round"/>
<path d="M1468.0 398.4 L1468.0 421.0" stroke="#fff" stroke-width="0.8" fill="none" />
<path d="M1468.0 398.4 L1468.0 421.0" stroke="#555" stroke-width="0.8" fill="none" stroke-dasharray="1.1 1.3" />
<path d="M1474.0 398.4 L1474.0 421.0" stroke="#1a1a1a" stroke-width="2.6999999999999997" fill="none" stroke-linejoin="round"/>
<path d="M1474.0 398.4 L1474.0 421.0" stroke="#fff" stroke-width="0.8" fill="none" />
<path d="M1474.0 398.4 L1474.0 421.0" stroke="#555" stroke-width="0.8" fill="none" stroke-dasharray="1.1 1.3" />
<path d="M1468.0 580.0 L1468.0 601.5" stroke="#1a1a1a" stroke-width="2.6999999999999997" fill="none" stroke-linejoin="round"/>
<path d="M1468.0 580.0 L1468.0 601.5" stroke="#fff" stroke-width="0.8" fill="none" />
<path d="M1468.0 580.0 L1468.0 601.5" stroke="#555" stroke-width="0.8" fill="none" stroke-dasharray="1.1 1.3" />
<path d="M1474.0 580.0 L1474.0 601.5" stroke="#1a1a1a" stroke-width="2.6999999999999997" fill="none" stroke-linejoin="round"/>
<path d="M1474.0 580.0 L1474.0 601.5" stroke="#fff" stroke-width="0.8" fill="none" />
<path d="M1474.0 580.0 L1474.0 601.5" stroke="#555" stroke-width="0.8" fill="none" stroke-dasharray="1.1 1.3" />
<path d="M1471.0 421.0 L1471.0 580.0" stroke="#1a1a1a" stroke-width="3.3" fill="none" stroke-linejoin="round"/>
<path d="M1471.0 421.0 L1471.0 580.0" stroke="#fff" stroke-width="1.2999999999999998" fill="none" />
<path d="M1471.0 421.0 L1471.0 580.0" stroke="#555" stroke-width="1.2999999999999998" fill="none" stroke-dasharray="1.1 1.3" />
<path d="M1472.0 464.6 L1540.5 464.6" stroke="#1a1a1a" stroke-width="2.6999999999999997" fill="none" stroke-linejoin="round"/>
<path d="M1472.0 464.6 L1540.5 464.6" stroke="#fff" stroke-width="0.8" fill="none" />
<path d="M1472.0 464.6 L1540.5 464.6" stroke="#555" stroke-width="0.8" fill="none" stroke-dasharray="1.1 1.3" />
<path d="M1540.5 421.0 L1540.5 464.6" stroke="#1a1a1a" stroke-width="2.6999999999999997" fill="none" stroke-linejoin="round"/>
<path d="M1540.5 421.0 L1540.5 464.6" stroke="#fff" stroke-width="0.8" fill="none" />
<path d="M1540.5 421.0 L1540.5 464.6" stroke="#555" stroke-width="0.8" fill="none" stroke-dasharray="1.1 1.3" />
<line x1="1539.0" y1="402.5" x2="1558.0" y2="402.5" stroke="#1a1a1a" stroke-width="2.2" stroke-linecap="butt"/>
<path d="M1558 402.5 A19 19 0 0 1 1539.5 421.5" stroke="#1a1a1a" stroke-width="1" fill="none" />
<path d="M1418.8 518.0 L1605.6 518.0" stroke="#1a1a1a" stroke-width="3.3" fill="none" stroke-linejoin="round"/>
<path d="M1418.8 518.0 L1605.6 518.0" stroke="#fff" stroke-width="1.2999999999999998" fill="none" />
<path d="M1418.8 518.0 L1605.6 518.0" stroke="#555" stroke-width="1.2999999999999998" fill="none" stroke-dasharray="1.1 1.3" />
<path d="M1579.0 398.4 L1579.0 518.0" stroke="#1a1a1a" stroke-width="3.3" fill="none" stroke-linejoin="round"/>
<path d="M1579.0 398.4 L1579.0 518.0" stroke="#fff" stroke-width="1.2999999999999998" fill="none" />
<path d="M1579.0 398.4 L1579.0 518.0" stroke="#555" stroke-width="1.2999999999999998" fill="none" stroke-dasharray="1.1 1.3" />
<path d="M1605.6 398.4 L1605.6 601.5" stroke="#1a1a1a" stroke-width="3.3" fill="none" stroke-linejoin="round"/>
<path d="M1605.6 398.4 L1605.6 601.5" stroke="#fff" stroke-width="1.2999999999999998" fill="none" />
<path d="M1605.6 398.4 L1605.6 601.5" stroke="#555" stroke-width="1.2999999999999998" fill="none" stroke-dasharray="1.1 1.3" />
<line x1="1582.0" y1="402.0" x2="1603.0" y2="515.0" stroke="#1a1a1a" stroke-width="0.8" stroke-linecap="butt"/>
<line x1="1603.0" y1="402.0" x2="1582.0" y2="515.0" stroke="#1a1a1a" stroke-width="0.8" stroke-linecap="butt"/>
<line x1="1419.0" y1="450.6" x2="1470.0" y2="450.6" stroke="#1a1a1a" stroke-width="1.6" stroke-dasharray="3 1.5" stroke-linecap="butt"/>
<line x1="1421.0" y1="456.0" x2="1441.0" y2="456.0" stroke="#1a1a1a" stroke-width="1.6" stroke-dasharray="2.2 1.6" stroke-linecap="butt"/>
<line x1="1421.0" y1="461.9" x2="1441.0" y2="461.9" stroke="#1a1a1a" stroke-width="1.6" stroke-dasharray="2.2 1.6" stroke-linecap="butt"/>
<line x1="1421.0" y1="467.8" x2="1441.0" y2="467.8" stroke="#1a1a1a" stroke-width="1.6" stroke-dasharray="2.2 1.6" stroke-linecap="butt"/>
<line x1="1421.0" y1="473.7" x2="1441.0" y2="473.7" stroke="#1a1a1a" stroke-width="1.6" stroke-dasharray="2.2 1.6" stroke-linecap="butt"/>
<line x1="1421.0" y1="479.6" x2="1441.0" y2="479.6" stroke="#1a1a1a" stroke-width="1.6" stroke-dasharray="2.2 1.6" stroke-linecap="butt"/>
<line x1="1421.0" y1="485.5" x2="1441.0" y2="485.5" stroke="#1a1a1a" stroke-width="1.6" stroke-dasharray="2.2 1.6" stroke-linecap="butt"/>
<line x1="1421.0" y1="491.4" x2="1441.0" y2="491.4" stroke="#1a1a1a" stroke-width="1.6" stroke-dasharray="2.2 1.6" stroke-linecap="butt"/>
<line x1="1421.0" y1="497.3" x2="1441.0" y2="497.3" stroke="#1a1a1a" stroke-width="1.6" stroke-dasharray="2.2 1.6" stroke-linecap="butt"/>
<line x1="1441.0" y1="452.0" x2="1441.0" y2="500.0" stroke="#1a1a1a" stroke-width="2" stroke-dasharray="2 1.5" stroke-linecap="butt"/>
<line x1="1421.0" y1="452.0" x2="1421.0" y2="517.0" stroke="#1a1a1a" stroke-width="2.4" stroke-dasharray="2 1.2" stroke-linecap="butt"/>
<line x1="1450.0" y1="453.0" x2="1470.0" y2="453.0" stroke="#1a1a1a" stroke-width="1.1" stroke-linecap="butt"/>
<line x1="1450.0" y1="458.5" x2="1470.0" y2="458.5" stroke="#1a1a1a" stroke-width="1.1" stroke-linecap="butt"/>
<line x1="1450.0" y1="464.0" x2="1470.0" y2="464.0" stroke="#1a1a1a" stroke-width="1.1" stroke-linecap="butt"/>
<line x1="1450.0" y1="469.5" x2="1470.0" y2="469.5" stroke="#1a1a1a" stroke-width="1.1" stroke-linecap="butt"/>
<line x1="1450.0" y1="475.0" x2="1470.0" y2="475.0" stroke="#1a1a1a" stroke-width="1.1" stroke-linecap="butt"/>
<line x1="1450.0" y1="480.5" x2="1470.0" y2="480.5" stroke="#1a1a1a" stroke-width="1.1" stroke-linecap="butt"/>
<line x1="1450.0" y1="486.0" x2="1470.0" y2="486.0" stroke="#1a1a1a" stroke-width="1.1" stroke-linecap="butt"/>
<line x1="1450.0" y1="491.5" x2="1470.0" y2="491.5" stroke="#1a1a1a" stroke-width="1.1" stroke-linecap="butt"/>
<line x1="1450.0" y1="497.0" x2="1470.0" y2="497.0" stroke="#1a1a1a" stroke-width="1.1" stroke-linecap="butt"/>
<line x1="1460.0" y1="453.0" x2="1460.0" y2="500.0" stroke="#1a1a1a" stroke-width="1" stroke-linecap="butt"/>
<line x1="1450.0" y1="452.0" x2="1450.0" y2="500.0" stroke="#1a1a1a" stroke-width="2.6" stroke-linecap="butt"/>
<line x1="1421.0" y1="497.0" x2="1470.0" y2="497.0" stroke="#1a1a1a" stroke-width="1.6" stroke-dasharray="2.2 1.6" stroke-linecap="butt"/>
<line x1="1421.0" y1="516.0" x2="1470.0" y2="516.0" stroke="#1a1a1a" stroke-width="2.4" stroke-dasharray="2 1.2" stroke-linecap="butt"/>
<line x1="1451.0" y1="488.0" x2="1467.0" y2="480.0" stroke="#1a1a1a" stroke-width="1" stroke-linecap="butt"/>
<line x1="1455.0" y1="482.0" x2="1462.0" y2="491.0" stroke="#1a1a1a" stroke-width="1" stroke-linecap="butt"/>
<text x="1459" y="447" font-family="Liberation Sans" font-size="5.5" fill="#666" text-anchor="middle">UP</text>
<rect x="1477.0" y="444.5" width="11.0" height="17.5" rx="0" stroke="#1a1a1a" stroke-width="1.1" fill="none" stroke-dasharray="2.2 1.5"/>
<rect x="1477.0" y="462.0" width="11.0" height="2.5" rx="0" stroke="none" stroke-width="0" fill="#555"/>
<rect x="1492.8" y="444.5" width="11.0" height="17.5" rx="0" stroke="#1a1a1a" stroke-width="1.1" fill="none" stroke-dasharray="2.2 1.5"/>
<rect x="1492.8" y="462.0" width="11.0" height="2.5" rx="0" stroke="none" stroke-width="0" fill="#555"/>
<rect x="1508.6" y="444.5" width="11.0" height="17.5" rx="0" stroke="#1a1a1a" stroke-width="1.1" fill="none" stroke-dasharray="2.2 1.5"/>
<rect x="1508.6" y="462.0" width="11.0" height="2.5" rx="0" stroke="none" stroke-width="0" fill="#555"/>
<rect x="1524.4" y="444.5" width="11.0" height="17.5" rx="0" stroke="#1a1a1a" stroke-width="1.1" fill="none" stroke-dasharray="2.2 1.5"/>
<rect x="1524.4" y="462.0" width="11.0" height="2.5" rx="0" stroke="none" stroke-width="0" fill="#555"/>
<circle cx="1523.8" cy="530.0" r="4" stroke="#1a1a1a" stroke-width="1.6" fill="none"/>
<circle cx="1523.8" cy="530.0" r="1.3" stroke="none" stroke-width="0" fill="#1a1a1a"/>
<line x1="1523.8" y1="521.0" x2="1523.8" y2="525.0" stroke="#1a1a1a" stroke-width="2" stroke-linecap="butt"/>
<circle cx="1543.3" cy="530.0" r="4" stroke="#1a1a1a" stroke-width="1.6" fill="none"/>
<circle cx="1543.3" cy="530.0" r="1.3" stroke="none" stroke-width="0" fill="#1a1a1a"/>
<line x1="1543.3" y1="521.0" x2="1543.3" y2="525.0" stroke="#1a1a1a" stroke-width="2" stroke-linecap="butt"/>
<circle cx="1562.8" cy="530.0" r="4" stroke="#1a1a1a" stroke-width="1.6" fill="none"/>
<circle cx="1562.8" cy="530.0" r="1.3" stroke="none" stroke-width="0" fill="#1a1a1a"/>
<line x1="1562.8" y1="521.0" x2="1562.8" y2="525.0" stroke="#1a1a1a" stroke-width="2" stroke-linecap="butt"/>
<circle cx="1597.0" cy="530.0" r="4" stroke="#1a1a1a" stroke-width="1.6" fill="none"/>
<circle cx="1597.0" cy="530.0" r="1.3" stroke="none" stroke-width="0" fill="#1a1a1a"/>
<line x1="1597.0" y1="521.0" x2="1597.0" y2="525.0" stroke="#1a1a1a" stroke-width="2" stroke-linecap="butt"/>
<path d="M1513.5 518.5 L1513.5 562.0 L1493.5 562.0" stroke="#1a1a1a" stroke-width="2.9" fill="none" stroke-linejoin="round"/>
<path d="M1513.5 518.5 L1513.5 562.0 L1493.5 562.0" stroke="#fff" stroke-width="0.8999999999999999" fill="none" />
<path d="M1513.5 518.5 L1513.5 562.0 L1493.5 562.0" stroke="#555" stroke-width="0.8999999999999999" fill="none" stroke-dasharray="1.1 1.3" />
<path d="M1475.0 580.5 A18.5 18.5 0 0 0 1493.5 562.0" stroke="#1a1a1a" stroke-width="1" fill="none" />
<line x1="1475.0" y1="562.0" x2="1475.0" y2="580.5" stroke="#1a1a1a" stroke-width="2.2" stroke-linecap="butt"/>
<path d="M1533.0 518.5 L1533.0 551.0" stroke="#1a1a1a" stroke-width="2.6999999999999997" fill="none" stroke-linejoin="round"/>
<path d="M1533.0 518.5 L1533.0 551.0" stroke="#fff" stroke-width="0.8" fill="none" />
<path d="M1533.0 518.5 L1533.0 551.0" stroke="#555" stroke-width="0.8" fill="none" stroke-dasharray="1.1 1.3" />
<path d="M1553.5 518.5 L1553.5 551.0" stroke="#1a1a1a" stroke-width="2.6999999999999997" fill="none" stroke-linejoin="round"/>
<path d="M1553.5 518.5 L1553.5 551.0" stroke="#fff" stroke-width="0.8" fill="none" />
<path d="M1553.5 518.5 L1553.5 551.0" stroke="#555" stroke-width="0.8" fill="none" stroke-dasharray="1.1 1.3" />
<path d="M1573.5 518.5 L1573.5 562.0 L1591.6 562.0" stroke="#1a1a1a" stroke-width="2.9" fill="none" stroke-linejoin="round"/>
<path d="M1573.5 518.5 L1573.5 562.0 L1591.6 562.0" stroke="#fff" stroke-width="0.8999999999999999" fill="none" />
<path d="M1573.5 518.5 L1573.5 562.0 L1591.6 562.0" stroke="#555" stroke-width="0.8999999999999999" fill="none" stroke-dasharray="1.1 1.3" />
<path d="M1516 551 V538 Q1522 537 1524 541" stroke="#1a1a1a" stroke-width="1" fill="none" />
<path d="M1532 551 Q1530 545 1528 545" stroke="#1a1a1a" stroke-width="1" fill="none" />
<path d="M1536 551 V538 Q1542 537 1544 541" stroke="#1a1a1a" stroke-width="1" fill="none" />
<path d="M1552 551 Q1550 545 1548 545" stroke="#1a1a1a" stroke-width="1" fill="none" />
<path d="M1556 551 V538 Q1562 537 1564 541" stroke="#1a1a1a" stroke-width="1" fill="none" />
<path d="M1572 551 Q1570 545 1568 545" stroke="#1a1a1a" stroke-width="1" fill="none" />
<path d="M1513.5 585.0 L1513.5 601.5" stroke="#1a1a1a" stroke-width="2.6999999999999997" fill="none" stroke-linejoin="round"/>
<path d="M1513.5 585.0 L1513.5 601.5" stroke="#fff" stroke-width="0.8" fill="none" />
<path d="M1513.5 585.0 L1513.5 601.5" stroke="#555" stroke-width="0.8" fill="none" stroke-dasharray="1.1 1.3" />
<path d="M1574.0 582.7 L1574.0 601.5" stroke="#1a1a1a" stroke-width="2.6999999999999997" fill="none" stroke-linejoin="round"/>
<path d="M1574.0 582.7 L1574.0 601.5" stroke="#fff" stroke-width="0.8" fill="none" />
<path d="M1574.0 582.7 L1574.0 601.5" stroke="#555" stroke-width="0.8" fill="none" stroke-dasharray="1.1 1.3" />
<line x1="1513.5" y1="585.5" x2="1574.0" y2="585.5" stroke="#1a1a1a" stroke-width="1.2" stroke-linecap="butt"/>
<path d="M1574.0 582.7 L1605.0 582.7" stroke="#1a1a1a" stroke-width="2.6999999999999997" fill="none" stroke-linejoin="round"/>
<path d="M1574.0 582.7 L1605.0 582.7" stroke="#fff" stroke-width="0.8" fill="none" />
<path d="M1574.0 582.7 L1605.0 582.7" stroke="#555" stroke-width="0.8" fill="none" stroke-dasharray="1.1 1.3" />
<rect x="1525.0" y="587.0" width="12.0" height="10.0" rx="0" stroke="#1a1a1a" stroke-width="1.8" fill="none"/>
<rect x="1551.0" y="587.0" width="12.0" height="10.0" rx="0" stroke="#1a1a1a" stroke-width="1.8" fill="none"/>
<path d="M1574 562 A18 18 0 0 1 1592 580" stroke="#1a1a1a" stroke-width="1" fill="none" />
<rect x="1421.0" y="557.0" width="14.0" height="15.0" rx="0" stroke="#1a1a1a" stroke-width="1" fill="none" stroke-dasharray="2 1.5"/>
<rect x="1423.0" y="575.0" width="10.0" height="13.0" rx="0" stroke="#1a1a1a" stroke-width="1.8" fill="none"/>
<rect x="1615.8" y="419.8" width="37.8" height="50.2" rx="0" stroke="#2a4a1a" stroke-width="1" fill="none"/>
<line x1="1615.8" y1="419.8" x2="1653.6" y2="470.0" stroke="#2a4a1a" stroke-width="0.8" stroke-linecap="butt"/>
<line x1="1653.6" y1="419.8" x2="1615.8" y2="470.0" stroke="#2a4a1a" stroke-width="0.8" stroke-linecap="butt"/>
<rect x="1615.8" y="475.3" width="37.8" height="50.1" rx="0" stroke="#2a4a1a" stroke-width="1" fill="none"/>
<line x1="1615.8" y1="475.3" x2="1653.6" y2="525.4" stroke="#2a4a1a" stroke-width="0.8" stroke-linecap="butt"/>
<line x1="1653.6" y1="475.3" x2="1615.8" y2="525.4" stroke="#2a4a1a" stroke-width="0.8" stroke-linecap="butt"/>
<path d="M1608.0 400.6 L1608.0 529.7" stroke="#2a3a1a" stroke-width="2.6999999999999997" fill="none" stroke-linejoin="round"/>
<path d="M1608.0 400.6 L1608.0 529.7" stroke="#fff" stroke-width="0.8" fill="none" />
<path d="M1608.0 400.6 L1608.0 529.7" stroke="#555" stroke-width="0.8" fill="none" stroke-dasharray="1.1 1.3" />
<path d="M1657.0 400.6 L1657.0 529.7" stroke="#2a3a1a" stroke-width="2.6999999999999997" fill="none" stroke-linejoin="round"/>
<path d="M1657.0 400.6 L1657.0 529.7" stroke="#fff" stroke-width="0.8" fill="none" />
<path d="M1657.0 400.6 L1657.0 529.7" stroke="#555" stroke-width="0.8" fill="none" stroke-dasharray="1.1 1.3" />
<path d="M1606.6 400.6 A4.45 4.45 0 0 1 1615.5 400.6 A4.45 4.45 0 0 1 1624.4 400.6 A4.45 4.45 0 0 1 1633.3 400.6 A4.45 4.45 0 0 1 1642.2 400.6 A4.45 4.45 0 0 1 1651.1 400.6 A4.45 4.45 0 0 1 1660.0 400.6 A4.61 4.61 0 0 1 1660.0 409.8 A4.61 4.61 0 0 1 1660.0 419.0 A4.61 4.61 0 0 1 1660.0 428.3 A4.61 4.61 0 0 1 1660.0 437.5 A4.61 4.61 0 0 1 1660.0 446.7 A4.61 4.61 0 0 1 1660.0 455.9 A4.61 4.61 0 0 1 1660.0 465.2 A4.61 4.61 0 0 1 1660.0 474.4 A4.61 4.61 0 0 1 1660.0 483.6 A4.61 4.61 0 0 1 1660.0 492.8 A4.61 4.61 0 0 1 1660.0 502.0 A4.61 4.61 0 0 1 1660.0 511.3 A4.61 4.61 0 0 1 1660.0 520.5 A4.61 4.61 0 0 1 1660.0 529.7 A4.45 4.45 0 0 1 1651.1 529.7 A4.45 4.45 0 0 1 1642.2 529.7 A4.45 4.45 0 0 1 1633.3 529.7 A4.45 4.45 0 0 1 1624.4 529.7 A4.45 4.45 0 0 1 1615.5 529.7 A4.45 4.45 0 0 1 1606.6 529.7 A4.61 4.61 0 0 1 1606.6 520.5 A4.61 4.61 0 0 1 1606.6 511.3 A4.61 4.61 0 0 1 1606.6 502.0 A4.61 4.61 0 0 1 1606.6 492.8 A4.61 4.61 0 0 1 1606.6 483.6 A4.61 4.61 0 0 1 1606.6 474.4 A4.61 4.61 0 0 1 1606.6 465.2 A4.61 4.61 0 0 1 1606.6 455.9 A4.61 4.61 0 0 1 1606.6 446.7 A4.61 4.61 0 0 1 1606.6 437.5 A4.61 4.61 0 0 1 1606.6 428.3 A4.61 4.61 0 0 1 1606.6 419.0 A4.61 4.61 0 0 1 1606.6 409.8 A4.61 4.61 0 0 1 1606.6 400.6" stroke="#e01010" stroke-width="1.1" fill="none"/>
<rect x="1610.0" y="532.0" width="47.0" height="52.0" rx="0" stroke="#1a1a1a" stroke-width="2.4" fill="none"/>
<rect x="1634.0" y="538.0" width="19.0" height="18.0" rx="0" stroke="#1a1a1a" stroke-width="1" fill="none"/>
<line x1="1634.0" y1="556.0" x2="1653.0" y2="538.0" stroke="#1a1a1a" stroke-width="0.8" stroke-linecap="butt"/>
<rect x="1618.0" y="554.0" width="34.0" height="26.0" rx="0" stroke="#1a1a1a" stroke-width="1" fill="none"/>
<line x1="1618.0" y1="580.0" x2="1652.0" y2="554.0" stroke="#1a1a1a" stroke-width="0.8" stroke-linecap="butt"/>
<line x1="1618.0" y1="554.0" x2="1652.0" y2="580.0" stroke="#1a1a1a" stroke-width="0.8" stroke-linecap="butt"/>
<line x1="1660.0" y1="470.8" x2="1672.0" y2="470.8" stroke="#e01010" stroke-width="1.1" stroke-linecap="butt"/>
<text x="1675.0" y="469.3" font-family="Liberation Sans" font-size="6.5" font-weight="bold" fill="#ff1010" textLength="44.0" lengthAdjust="spacingAndGlyphs" >Split into three</text>
<circle cx="1458.5" cy="398.0" r="5.8" stroke="#333" stroke-width="0.9" fill="none"/>
<text x="1458.5" y="399.6" font-family="Liberation Sans" font-size="4.5" fill="#444" text-anchor="middle">251</text>
<circle cx="1483.5" cy="398.0" r="5.8" stroke="#333" stroke-width="0.9" fill="none"/>
<text x="1483.5" y="399.6" font-family="Liberation Sans" font-size="4.5" fill="#444" text-anchor="middle">253</text>
<circle cx="1532.0" cy="409.0" r="5.8" stroke="#333" stroke-width="0.9" fill="none"/>
<text x="1532.0" y="410.6" font-family="Liberation Sans" font-size="4.5" fill="#444" text-anchor="middle">253A</text>
<circle cx="1458.5" cy="602.0" r="5.8" stroke="#333" stroke-width="0.9" fill="none"/>
<text x="1458.5" y="603.6" font-family="Liberation Sans" font-size="4.5" fill="#444" text-anchor="middle">252</text>
<circle cx="1483.5" cy="602.0" r="5.8" stroke="#333" stroke-width="0.9" fill="none"/>
<text x="1483.5" y="603.6" font-family="Liberation Sans" font-size="4.5" fill="#444" text-anchor="middle">254</text>
<circle cx="1483.0" cy="561.0" r="5.8" stroke="#333" stroke-width="0.9" fill="none"/>
<text x="1483.0" y="562.6" font-family="Liberation Sans" font-size="4.5" fill="#444" text-anchor="middle">254A</text>
<circle cx="1580.0" cy="572.0" r="5.8" stroke="#333" stroke-width="0.9" fill="none"/>
<text x="1580.0" y="573.6" font-family="Liberation Sans" font-size="4.5" fill="#444" text-anchor="middle">254B</text>
<path d="M1468.0 416.4 A18 18 0 0 1 1450.0 398.4" stroke="#1a1a1a" stroke-width="1" fill="none" />
<line x1="1468.0" y1="398.4" x2="1468.0" y2="416.4" stroke="#1a1a1a" stroke-width="2.2" stroke-linecap="butt"/>
<path d="M1474.0 416.4 A18 18 0 0 0 1492.0 398.4" stroke="#1a1a1a" stroke-width="1" fill="none" />
<line x1="1474.0" y1="398.4" x2="1474.0" y2="416.4" stroke="#1a1a1a" stroke-width="2.2" stroke-linecap="butt"/>
<path d="M1468.0 583.5 A18 18 0 0 0 1450.0 601.5" stroke="#1a1a1a" stroke-width="1" fill="none" />
<line x1="1468.0" y1="601.5" x2="1468.0" y2="583.5" stroke="#1a1a1a" stroke-width="2.2" stroke-linecap="butt"/>
<path d="M1474.0 583.5 A18 18 0 0 1 1492.0 601.5" stroke="#1a1a1a" stroke-width="1" fill="none" />
<line x1="1474.0" y1="601.5" x2="1474.0" y2="583.5" stroke="#1a1a1a" stroke-width="2.2" stroke-linecap="butt"/>
<circle cx="1644.0" cy="632.1" r="12" stroke="#1a1a1a" stroke-width="1.1" fill="#fff"/>
<line x1="1632.0" y1="632.1" x2="1656.0" y2="632.1" stroke="#1a1a1a" stroke-width="0.9" stroke-linecap="butt"/>
<text x="1644" y="630" font-family="Liberation Sans" font-size="5.5" fill="#333" text-anchor="middle">1</text><text x="1644" y="639" font-family="Liberation Sans" font-size="5.5" fill="#333" text-anchor="middle">A8.02</text>
<path d="M1632 632.1 H1620 L1607 614" stroke="#1a1a1a" stroke-width="1" fill="none" />
<path d="M1885.4 398 V388 Q1885 384.5 1880 384.8 L1760 393 Q1740 395 1735 405 Q1730 412 1730.2 430 V585 Q1730 600 1747 605 L1880 615 Q1885.4 615 1885.4 610 V598" stroke="#1a1a1a" stroke-width="3.6999999999999997" fill="none" />
<path d="M1885.4 398 V388 Q1885 384.5 1880 384.8 L1760 393 Q1740 395 1735 405 Q1730 412 1730.2 430 V585 Q1730 600 1747 605 L1880 615 Q1885.4 615 1885.4 610 V598" stroke="#fff" stroke-width="1.6999999999999997" fill="none" />
<path d="M1885.4 398 V388 Q1885 384.5 1880 384.8 L1760 393 Q1740 395 1735 405 Q1730 412 1730.2 430 V585 Q1730 600 1747 605 L1880 615 Q1885.4 615 1885.4 610 V598" stroke="#555" stroke-width="1.6999999999999997" fill="none" stroke-dasharray="1.1 1.3" />
<path d="M1947.2 398 V388 Q1947.2 378.1 1957 378.1 H1975 Q1985.6 378.1 1985.6 390 V606 Q1985.6 618.2 1975 618.2 H1957 Q1947 618.2 1947 608 V598" stroke="#1a1a1a" stroke-width="3.6999999999999997" fill="none" />
<path d="M1947.2 398 V388 Q1947.2 378.1 1957 378.1 H1975 Q1985.6 378.1 1985.6 390 V606 Q1985.6 618.2 1975 618.2 H1957 Q1947 618.2 1947 608 V598" stroke="#fff" stroke-width="1.6999999999999997" fill="none" />
<path d="M1947.2 398 V388 Q1947.2 378.1 1957 378.1 H1975 Q1985.6 378.1 1985.6 390 V606 Q1985.6 618.2 1975 618.2 H1957 Q1947 618.2 1947 608 V598" stroke="#555" stroke-width="1.6999999999999997" fill="none" stroke-dasharray="1.1 1.3" />
<line x1="1885.0" y1="384.5" x2="1947.0" y2="378.0" stroke="#1a1a1a" stroke-width="1" stroke-dasharray="3 2" stroke-linecap="butt"/>
<line x1="1885.0" y1="615.0" x2="1947.0" y2="618.0" stroke="#1a1a1a" stroke-width="1" stroke-dasharray="3 2" stroke-linecap="butt"/>
<path d="M1783.0 398.0 L1970.0 398.0" stroke="#1a1a1a" stroke-width="3.3" fill="none" stroke-linejoin="round"/>
<path d="M1783.0 398.0 L1970.0 398.0" stroke="#fff" stroke-width="1.2999999999999998" fill="none" />
<path d="M1783.0 398.0 L1970.0 398.0" stroke="#555" stroke-width="1.2999999999999998" fill="none" stroke-dasharray="1.1 1.3" />
<path d="M1782.2 601.9 L1970.0 601.9" stroke="#1a1a1a" stroke-width="3.3" fill="none" stroke-linejoin="round"/>
<path d="M1782.2 601.9 L1970.0 601.9" stroke="#fff" stroke-width="1.2999999999999998" fill="none" />
<path d="M1782.2 601.9 L1970.0 601.9" stroke="#555" stroke-width="1.2999999999999998" fill="none" stroke-dasharray="1.1 1.3" />
<path d="M1782.2 398.0 L1782.2 601.9" stroke="#1a1a1a" stroke-width="3.3" fill="none" stroke-linejoin="round"/>
<path d="M1782.2 398.0 L1782.2 601.9" stroke="#fff" stroke-width="1.2999999999999998" fill="none" />
<path d="M1782.2 398.0 L1782.2 601.9" stroke="#555" stroke-width="1.2999999999999998" fill="none" stroke-dasharray="1.1 1.3" />
<path d="M1916.8 398.0 L1916.8 420.0" stroke="#1a1a1a" stroke-width="2.6999999999999997" fill="none" stroke-linejoin="round"/>
<path d="M1916.8 398.0 L1916.8 420.0" stroke="#fff" stroke-width="0.8" fill="none" />
<path d="M1916.8 398.0 L1916.8 420.0" stroke="#555" stroke-width="0.8" fill="none" stroke-dasharray="1.1 1.3" />
<path d="M1920.5 398.0 L1920.5 420.0" stroke="#1a1a1a" stroke-width="2.6999999999999997" fill="none" stroke-linejoin="round"/>
<path d="M1920.5 398.0 L1920.5 420.0" stroke="#fff" stroke-width="0.8" fill="none" />
<path d="M1920.5 398.0 L1920.5 420.0" stroke="#555" stroke-width="0.8" fill="none" stroke-dasharray="1.1 1.3" />
<path d="M1918.7 420.0 L1918.7 583.0" stroke="#1a1a1a" stroke-width="3.3" fill="none" stroke-linejoin="round"/>
<path d="M1918.7 420.0 L1918.7 583.0" stroke="#fff" stroke-width="1.2999999999999998" fill="none" />
<path d="M1918.7 420.0 L1918.7 583.0" stroke="#555" stroke-width="1.2999999999999998" fill="none" stroke-dasharray="1.1 1.3" />
<path d="M1916.8 583.0 L1916.8 601.9" stroke="#1a1a1a" stroke-width="2.6999999999999997" fill="none" stroke-linejoin="round"/>
<path d="M1916.8 583.0 L1916.8 601.9" stroke="#fff" stroke-width="0.8" fill="none" />
<path d="M1916.8 583.0 L1916.8 601.9" stroke="#555" stroke-width="0.8" fill="none" stroke-dasharray="1.1 1.3" />
<path d="M1920.5 583.0 L1920.5 601.9" stroke="#1a1a1a" stroke-width="2.6999999999999997" fill="none" stroke-linejoin="round"/>
<path d="M1920.5 583.0 L1920.5 601.9" stroke="#fff" stroke-width="0.8" fill="none" />
<path d="M1920.5 583.0 L1920.5 601.9" stroke="#555" stroke-width="0.8" fill="none" stroke-dasharray="1.1 1.3" />
<path d="M1969.6 398.0 L1969.6 601.9" stroke="#1a1a1a" stroke-width="3.3" fill="none" stroke-linejoin="round"/>
<path d="M1969.6 398.0 L1969.6 601.9" stroke="#fff" stroke-width="1.2999999999999998" fill="none" />
<path d="M1969.6 398.0 L1969.6 601.9" stroke="#555" stroke-width="1.2999999999999998" fill="none" stroke-dasharray="1.1 1.3" />
<path d="M1783.0 517.9 L1918.4 517.9" stroke="#1a1a1a" stroke-width="3.3" fill="none" stroke-linejoin="round"/>
<path d="M1783.0 517.9 L1918.4 517.9" stroke="#fff" stroke-width="1.2999999999999998" fill="none" />
<path d="M1783.0 517.9 L1918.4 517.9" stroke="#555" stroke-width="1.2999999999999998" fill="none" stroke-dasharray="1.1 1.3" />
<path d="M1920.0 481.6 L1969.6 481.6" stroke="#1a1a1a" stroke-width="3.3" fill="none" stroke-linejoin="round"/>
<path d="M1920.0 481.6 L1969.6 481.6" stroke="#fff" stroke-width="1.2999999999999998" fill="none" />
<path d="M1920.0 481.6 L1969.6 481.6" stroke="#555" stroke-width="1.2999999999999998" fill="none" stroke-dasharray="1.1 1.3" />
<path d="M1733.0 533.3 L1782.0 533.3" stroke="#1a1a1a" stroke-width="2.6999999999999997" fill="none" stroke-linejoin="round"/>
<path d="M1733.0 533.3 L1782.0 533.3" stroke="#fff" stroke-width="0.8" fill="none" />
<path d="M1733.0 533.3 L1782.0 533.3" stroke="#555" stroke-width="0.8" fill="none" stroke-dasharray="1.1 1.3" />
<path d="M1733.0 583.6 L1782.0 583.6" stroke="#1a1a1a" stroke-width="2.6999999999999997" fill="none" stroke-linejoin="round"/>
<path d="M1733.0 583.6 L1782.0 583.6" stroke="#fff" stroke-width="0.8" fill="none" />
<path d="M1733.0 583.6 L1782.0 583.6" stroke="#555" stroke-width="0.8" fill="none" stroke-dasharray="1.1 1.3" />
<rect x="1735.4" y="475.2" width="37.9" height="50.2" rx="0" stroke="#1a1a1a" stroke-width="1" fill="none"/>
<line x1="1735.4" y1="475.2" x2="1773.3" y2="525.4" stroke="#1a1a1a" stroke-width="0.8" stroke-linecap="butt"/>
<line x1="1773.3" y1="475.2" x2="1735.4" y2="525.4" stroke="#1a1a1a" stroke-width="0.8" stroke-linecap="butt"/>
<line x1="1735.4" y1="419.7" x2="1773.3" y2="470.3" stroke="#888" stroke-width="0.8" stroke-linecap="butt"/>
<line x1="1773.3" y1="419.7" x2="1735.4" y2="470.3" stroke="#888" stroke-width="0.8" stroke-linecap="butt"/>
<rect x="1738.0" y="553.0" width="32.0" height="27.0" rx="0" stroke="#1a1a1a" stroke-width="1" fill="none"/>
<line x1="1738.0" y1="580.0" x2="1770.0" y2="553.0" stroke="#1a1a1a" stroke-width="0.8" stroke-linecap="butt"/>
<rect x="1795.0" y="422.0" width="30.0" height="72.0" rx="0" stroke="#222" stroke-width="1" fill="none" stroke-dasharray="3 2"/>
<line x1="1803.0" y1="422.0" x2="1803.0" y2="494.0" stroke="#222" stroke-width="1.2" stroke-linecap="butt"/>
<line x1="1817.0" y1="422.0" x2="1817.0" y2="494.0" stroke="#222" stroke-width="1.2" stroke-linecap="butt"/>
<line x1="1795.0" y1="446.0" x2="1825.0" y2="446.0" stroke="#222" stroke-width="1" stroke-linecap="butt"/>
<line x1="1795.0" y1="470.0" x2="1825.0" y2="470.0" stroke="#222" stroke-width="1" stroke-linecap="butt"/>
<rect x="1832.0" y="422.0" width="30.0" height="72.0" rx="0" stroke="#222" stroke-width="1" fill="none" stroke-dasharray="3 2"/>
<line x1="1840.0" y1="422.0" x2="1840.0" y2="494.0" stroke="#222" stroke-width="1.2" stroke-linecap="butt"/>
<line x1="1854.0" y1="422.0" x2="1854.0" y2="494.0" stroke="#222" stroke-width="1.2" stroke-linecap="butt"/>
<line x1="1832.0" y1="446.0" x2="1862.0" y2="446.0" stroke="#222" stroke-width="1" stroke-linecap="butt"/>
<line x1="1832.0" y1="470.0" x2="1862.0" y2="470.0" stroke="#222" stroke-width="1" stroke-linecap="butt"/>
<rect x="1869.0" y="422.0" width="30.0" height="72.0" rx="0" stroke="#222" stroke-width="1" fill="none" stroke-dasharray="3 2"/>
<line x1="1877.0" y1="422.0" x2="1877.0" y2="494.0" stroke="#222" stroke-width="1.2" stroke-linecap="butt"/>
<line x1="1891.0" y1="422.0" x2="1891.0" y2="494.0" stroke="#222" stroke-width="1.2" stroke-linecap="butt"/>
<line x1="1869.0" y1="446.0" x2="1899.0" y2="446.0" stroke="#222" stroke-width="1" stroke-linecap="butt"/>
<line x1="1869.0" y1="470.0" x2="1899.0" y2="470.0" stroke="#222" stroke-width="1" stroke-linecap="butt"/>
<path d="M1789.3 418.0 A4.39 4.39 0 0 1 1798.1 418.0 A4.39 4.39 0 0 1 1806.9 418.0 A4.39 4.39 0 0 1 1815.7 418.0 A4.39 4.39 0 0 1 1824.4 418.0 A4.39 4.39 0 0 1 1833.2 418.0 A4.39 4.39 0 0 1 1842.0 418.0 A4.39 4.39 0 0 1 1850.8 418.0 A4.39 4.39 0 0 1 1859.6 418.0 A4.39 4.39 0 0 1 1868.4 418.0 A4.39 4.39 0 0 1 1877.1 418.0 A4.39 4.39 0 0 1 1885.9 418.0 A4.39 4.39 0 0 1 1894.7 418.0 A4.39 4.39 0 0 1 1903.5 418.0 A4.48 4.48 0 0 1 1903.5 427.0 A4.48 4.48 0 0 1 1903.5 435.9 A4.48 4.48 0 0 1 1903.5 444.9 A4.48 4.48 0 0 1 1903.5 453.9 A4.48 4.48 0 0 1 1903.5 462.8 A4.48 4.48 0 0 1 1903.5 471.8 A4.48 4.48 0 0 1 1903.5 480.8 A4.48 4.48 0 0 1 1903.5 489.7 A4.48 4.48 0 0 1 1903.5 498.7 A4.39 4.39 0 0 1 1894.7 498.7 A4.39 4.39 0 0 1 1885.9 498.7 A4.39 4.39 0 0 1 1877.1 498.7 A4.39 4.39 0 0 1 1868.4 498.7 A4.39 4.39 0 0 1 1859.6 498.7 A4.39 4.39 0 0 1 1850.8 498.7 A4.39 4.39 0 0 1 1842.0 498.7 A4.39 4.39 0 0 1 1833.2 498.7 A4.39 4.39 0 0 1 1824.4 498.7 A4.39 4.39 0 0 1 1815.7 498.7 A4.39 4.39 0 0 1 1806.9 498.7 A4.39 4.39 0 0 1 1798.1 498.7 A4.39 4.39 0 0 1 1789.3 498.7 A4.48 4.48 0 0 1 1789.3 489.7 A4.48 4.48 0 0 1 1789.3 480.8 A4.48 4.48 0 0 1 1789.3 471.8 A4.48 4.48 0 0 1 1789.3 462.8 A4.48 4.48 0 0 1 1789.3 453.9 A4.48 4.48 0 0 1 1789.3 444.9 A4.48 4.48 0 0 1 1789.3 435.9 A4.48 4.48 0 0 1 1789.3 427.0 A4.48 4.48 0 0 1 1789.3 418.0" stroke="#e01010" stroke-width="1.1" fill="none"/>
<rect x="1853.0" y="455.0" width="40.0" height="7.0" rx="0" stroke="none" stroke-width="0" fill="#b0a8e8"/>
<text x="1854" y="461" font-family="Liberation Sans" font-size="5.5" fill="#d01010" textLength="38" lengthAdjust="spacingAndGlyphs">MergeChambers</text>
<line x1="1892.0" y1="458.6" x2="1903.0" y2="458.6" stroke="#d01010" stroke-width="1" stroke-linecap="butt"/>
<line x1="1924.0" y1="498.0" x2="1945.0" y2="498.0" stroke="#1a1a1a" stroke-width="1.6" stroke-dasharray="2 2" stroke-linecap="butt"/>
<line x1="1924.0" y1="505.0" x2="1945.0" y2="505.0" stroke="#1a1a1a" stroke-width="1.6" stroke-dasharray="2 2" stroke-linecap="butt"/>
<line x1="1924.0" y1="512.0" x2="1945.0" y2="512.0" stroke="#1a1a1a" stroke-width="1.6" stroke-dasharray="2 2" stroke-linecap="butt"/>
<line x1="1924.0" y1="519.0" x2="1945.0" y2="519.0" stroke="#1a1a1a" stroke-width="1.6" stroke-dasharray="2 2" stroke-linecap="butt"/>
<line x1="1924.0" y1="526.0" x2="1945.0" y2="526.0" stroke="#1a1a1a" stroke-width="1.6" stroke-dasharray="2 2" stroke-linecap="butt"/>
<line x1="1924.0" y1="533.0" x2="1945.0" y2="533.0" stroke="#1a1a1a" stroke-width="1.6" stroke-dasharray="2 2" stroke-linecap="butt"/>
<line x1="1924.0" y1="540.0" x2="1945.0" y2="540.0" stroke="#1a1a1a" stroke-width="1.6" stroke-dasharray="2 2" stroke-linecap="butt"/>
<line x1="1947.0" y1="500.0" x2="1966.0" y2="500.0" stroke="#1a1a1a" stroke-width="0.9" stroke-linecap="butt"/>
<line x1="1947.0" y1="506.5" x2="1966.0" y2="506.5" stroke="#1a1a1a" stroke-width="0.9" stroke-linecap="butt"/>
<line x1="1947.0" y1="513.0" x2="1966.0" y2="513.0" stroke="#1a1a1a" stroke-width="0.9" stroke-linecap="butt"/>
<line x1="1947.0" y1="519.5" x2="1966.0" y2="519.5" stroke="#1a1a1a" stroke-width="0.9" stroke-linecap="butt"/>
<line x1="1947.0" y1="526.0" x2="1966.0" y2="526.0" stroke="#1a1a1a" stroke-width="0.9" stroke-linecap="butt"/>
<line x1="1947.0" y1="532.5" x2="1966.0" y2="532.5" stroke="#1a1a1a" stroke-width="0.9" stroke-linecap="butt"/>
<line x1="1947.0" y1="539.0" x2="1966.0" y2="539.0" stroke="#1a1a1a" stroke-width="0.9" stroke-linecap="butt"/>
<line x1="1947.0" y1="545.5" x2="1966.0" y2="545.5" stroke="#1a1a1a" stroke-width="0.9" stroke-linecap="butt"/>
<line x1="1946.0" y1="498.0" x2="1946.0" y2="548.0" stroke="#1a1a1a" stroke-width="1.5" stroke-linecap="butt"/>
<line x1="1966.0" y1="488.0" x2="1966.0" y2="548.0" stroke="#1a1a1a" stroke-width="1.5" stroke-linecap="butt"/>
<rect x="1922.0" y="486.0" width="46.0" height="64.0" rx="0" stroke="#1a1a1a" stroke-width="1.6" fill="none" stroke-dasharray="2 1.5"/>
<circle cx="1792.3" cy="530.0" r="4" stroke="#1a1a1a" stroke-width="1.6" fill="none"/>
<circle cx="1792.3" cy="530.0" r="1.3" stroke="none" stroke-width="0" fill="#1a1a1a"/>
<line x1="1792.3" y1="521.0" x2="1792.3" y2="525.0" stroke="#1a1a1a" stroke-width="2" stroke-linecap="butt"/>
<circle cx="1826.2" cy="530.0" r="4" stroke="#1a1a1a" stroke-width="1.6" fill="none"/>
<circle cx="1826.2" cy="530.0" r="1.3" stroke="none" stroke-width="0" fill="#1a1a1a"/>
<line x1="1826.2" y1="521.0" x2="1826.2" y2="525.0" stroke="#1a1a1a" stroke-width="2" stroke-linecap="butt"/>
<path d="M1818.0 518.2 L1818.0 562.0 L1812.0 562.0" stroke="#1a1a1a" stroke-width="2.9" fill="none" stroke-linejoin="round"/>
<path d="M1818.0 518.2 L1818.0 562.0 L1812.0 562.0" stroke="#fff" stroke-width="0.8999999999999999" fill="none" />
<path d="M1818.0 518.2 L1818.0 562.0 L1812.0 562.0" stroke="#555" stroke-width="0.8999999999999999" fill="none" stroke-dasharray="1.1 1.3" />
<path d="M1812 562 A18 18 0 0 0 1795 580.5" stroke="#1a1a1a" stroke-width="1" fill="none" />
<line x1="1795.0" y1="580.5" x2="1815.0" y2="580.5" stroke="#1a1a1a" stroke-width="2.2" stroke-linecap="butt"/>
<path d="M1815.0 580.5 L1815.0 601.9" stroke="#1a1a1a" stroke-width="2.6999999999999997" fill="none" stroke-linejoin="round"/>
<path d="M1815.0 580.5 L1815.0 601.9" stroke="#fff" stroke-width="0.8" fill="none" />
<path d="M1815.0 580.5 L1815.0 601.9" stroke="#555" stroke-width="0.8" fill="none" stroke-dasharray="1.1 1.3" />
<path d="M1834.4 518.2 L1834.4 551.0" stroke="#1a1a1a" stroke-width="2.6999999999999997" fill="none" stroke-linejoin="round"/>
<path d="M1834.4 518.2 L1834.4 551.0" stroke="#fff" stroke-width="0.8" fill="none" />
<path d="M1834.4 518.2 L1834.4 551.0" stroke="#555" stroke-width="0.8" fill="none" stroke-dasharray="1.1 1.3" />
<path d="M1821 551 V540 Q1827 537 1832 538" stroke="#1a1a1a" stroke-width="1" fill="none" />
<rect x="1837.0" y="524.0" width="36.0" height="25.0" rx="0" stroke="#1a1a1a" stroke-width="1.1" fill="none" stroke-dasharray="3 2"/>
<line x1="1855.0" y1="535.0" x2="1855.0" y2="541.0" stroke="#1a1a1a" stroke-width="1.2" stroke-linecap="butt"/>
<line x1="1858.0" y1="535.0" x2="1858.0" y2="541.0" stroke="#1a1a1a" stroke-width="1.2" stroke-linecap="butt"/>
<circle cx="1846.0" cy="523.0" r="3" stroke="#1a1a1a" stroke-width="1.4" fill="none"/>
<circle cx="1865.0" cy="523.0" r="3" stroke="#1a1a1a" stroke-width="1.4" fill="none"/>
<path d="M1875.3 518.2 L1875.3 561.6 L1896.0 561.6" stroke="#1a1a1a" stroke-width="2.9" fill="none" stroke-linejoin="round"/>
<path d="M1875.3 518.2 L1875.3 561.6 L1896.0 561.6" stroke="#fff" stroke-width="0.8999999999999999" fill="none" />
<path d="M1875.3 518.2 L1875.3 561.6 L1896.0 561.6" stroke="#555" stroke-width="0.8999999999999999" fill="none" stroke-dasharray="1.1 1.3" />
<path d="M1896 561.6 A18 18 0 0 1 1914 580" stroke="#1a1a1a" stroke-width="1" fill="none" />
<path d="M1876.0 586.0 L1876.0 601.9" stroke="#1a1a1a" stroke-width="2.6999999999999997" fill="none" stroke-linejoin="round"/>
<path d="M1876.0 586.0 L1876.0 601.9" stroke="#fff" stroke-width="0.8" fill="none" />
<path d="M1876.0 586.0 L1876.0 601.9" stroke="#555" stroke-width="0.8" fill="none" stroke-dasharray="1.1 1.3" />
<line x1="1815.0" y1="586.0" x2="1876.0" y2="586.0" stroke="#1a1a1a" stroke-width="1.4" stroke-linecap="butt"/>
<rect x="1825.0" y="587.0" width="12.0" height="10.0" rx="0" stroke="#1a1a1a" stroke-width="1.8" fill="none"/>
<rect x="1853.0" y="587.0" width="12.0" height="10.0" rx="0" stroke="#1a1a1a" stroke-width="1.8" fill="none"/>
<rect x="1904.0" y="519.0" width="12.0" height="14.0" rx="0" stroke="#1a1a1a" stroke-width="1" fill="none"/>
<line x1="1880.0" y1="512.0" x2="1894.0" y2="540.0" stroke="#1a1a1a" stroke-width="1" stroke-linecap="butt"/>
<circle cx="1894.0" cy="540.0" r="1.5" stroke="none" stroke-width="0" fill="#1a1a1a"/>
<path d="M1916.8 583.9 A18 18 0 0 0 1898.8 601.9" stroke="#1a1a1a" stroke-width="1" fill="none" />
<line x1="1916.8" y1="601.9" x2="1916.8" y2="583.9" stroke="#1a1a1a" stroke-width="2.2" stroke-linecap="butt"/>
<path d="M1920.5 583.9 A18 18 0 0 1 1938.5 601.9" stroke="#1a1a1a" stroke-width="1" fill="none" />
<line x1="1920.5" y1="601.9" x2="1920.5" y2="583.9" stroke="#1a1a1a" stroke-width="2.2" stroke-linecap="butt"/>
<path d="M1916.8 417.0 A19 19 0 0 1 1897.8 398.0" stroke="#1a1a1a" stroke-width="1" fill="none" />
<line x1="1916.8" y1="398.0" x2="1916.8" y2="417.0" stroke="#1a1a1a" stroke-width="2.2" stroke-linecap="butt"/>
<path d="M1920.5 417.0 A19 19 0 0 0 1939.5 398.0" stroke="#1a1a1a" stroke-width="1" fill="none" />
<line x1="1920.5" y1="398.0" x2="1920.5" y2="417.0" stroke="#1a1a1a" stroke-width="2.2" stroke-linecap="butt"/>
<circle cx="1905.2" cy="399.5" r="5.8" stroke="#333" stroke-width="0.9" fill="none"/>
<text x="1905.2" y="401.1" font-family="Liberation Sans" font-size="4.5" fill="#444" text-anchor="middle">257</text>
<circle cx="1930.2" cy="399.5" r="5.8" stroke="#333" stroke-width="0.9" fill="none"/>
<text x="1930.2" y="401.1" font-family="Liberation Sans" font-size="4.5" fill="#444" text-anchor="middle">260</text>
<circle cx="1905.0" cy="602.0" r="5.8" stroke="#333" stroke-width="0.9" fill="none"/>
<text x="1905.0" y="603.6" font-family="Liberation Sans" font-size="4.5" fill="#444" text-anchor="middle">258</text>
<circle cx="1931.0" cy="602.0" r="5.8" stroke="#333" stroke-width="0.9" fill="none"/>
<text x="1931.0" y="603.6" font-family="Liberation Sans" font-size="4.5" fill="#444" text-anchor="middle">259</text>
<circle cx="1808.0" cy="572.0" r="5.8" stroke="#333" stroke-width="0.9" fill="none"/>
<text x="1808.0" y="573.6" font-family="Liberation Sans" font-size="4.5" fill="#444" text-anchor="middle">258B</text>
<circle cx="1905.0" cy="561.0" r="5.8" stroke="#333" stroke-width="0.9" fill="none"/>
<text x="1905.0" y="562.6" font-family="Liberation Sans" font-size="4.5" fill="#444" text-anchor="middle">258A</text>
<path d="M1985.6 427.6 Q1987 416 1997 416 H2021" stroke="#1a1a1a" stroke-width="3.3" fill="none" />
<path d="M1985.6 427.6 Q1987 416 1997 416 H2021" stroke="#fff" stroke-width="1.2999999999999998" fill="none" />
<path d="M1985.6 427.6 Q1987 416 1997 416 H2021" stroke="#555" stroke-width="1.2999999999999998" fill="none" stroke-dasharray="1.1 1.3" />
<path d="M1971.0 500.7 L2021.0 500.7" stroke="#1a1a1a" stroke-width="3.3" fill="none" stroke-linejoin="round"/>
<path d="M1971.0 500.7 L2021.0 500.7" stroke="#fff" stroke-width="1.2999999999999998" fill="none" />
<path d="M1971.0 500.7 L2021.0 500.7" stroke="#555" stroke-width="1.2999999999999998" fill="none" stroke-dasharray="1.1 1.3" />
<path d="M1985.6 574.6 Q1987 584.5 1997 584.5 H2021" stroke="#1a1a1a" stroke-width="3.3" fill="none" />
<path d="M1985.6 574.6 Q1987 584.5 1997 584.5 H2021" stroke="#fff" stroke-width="1.2999999999999998" fill="none" />
<path d="M1985.6 574.6 Q1987 584.5 1997 584.5 H2021" stroke="#555" stroke-width="1.2999999999999998" fill="none" stroke-dasharray="1.1 1.3" />
<line x1="1985.6" y1="428.0" x2="1985.6" y2="575.0" stroke="#1a1a1a" stroke-width="1" stroke-dasharray="2 2" stroke-linecap="butt"/>
<line x1="1985.6" y1="396.8" x2="2021.0" y2="396.8" stroke="#1a1a1a" stroke-width="1" stroke-dasharray="3 2" stroke-linecap="butt"/>
<line x1="1985.6" y1="602.8" x2="2021.0" y2="602.8" stroke="#1a1a1a" stroke-width="1" stroke-dasharray="3 2" stroke-linecap="butt"/>
<text x="865.3" y="406.5" font-family="Liberation Sans" font-size="9.6" font-weight="bold" fill="#2a1a3a" textLength="49.4" lengthAdjust="spacingAndGlyphs" >MEETING&#160;&#160;&#160;247</text>
<rect x="865.3" y="407.6" width="49.4" height="2" fill="#2a1a3a"/>
<text x="860.6" y="506.6" font-family="Liberation Sans" font-size="9.6" font-weight="bold" fill="#2a1a3a" textLength="66.6" lengthAdjust="spacingAndGlyphs" >CONFERENCE&#160;&#160;&#160;246</text>
<rect x="860.6" y="507.7" width="66.6" height="2" fill="#2a1a3a"/>
<text x="868.8" y="602.4" font-family="Liberation Sans" font-size="9.6" font-weight="bold" fill="#2a1a3a" textLength="49.9" lengthAdjust="spacingAndGlyphs" >MEETING&#160;&#160;&#160;245</text>
<rect x="868.8" y="603.5" width="49.9" height="2" fill="#2a1a3a"/>
<text x="1136.4" y="506.6" font-family="Liberation Sans" font-size="9.6" font-weight="bold" fill="#0a1a30" textLength="66.6" lengthAdjust="spacingAndGlyphs" >OPEN OFFICE&#160;&#160;&#160;248</text>
<rect x="1136.4" y="507.7" width="66.6" height="2" fill="#0a1a30"/>
<text x="1351.4" y="459.6" font-family="Liberation Sans" font-size="9.6" font-weight="bold" fill="#0a1a30" textLength="43.3" lengthAdjust="spacingAndGlyphs" >OFFICE&#160;&#160;&#160;249</text>
<rect x="1351.4" y="460.7" width="43.3" height="2" fill="#0a1a30"/>
<text x="1351.4" y="543.3" font-family="Liberation Sans" font-size="9.6" font-weight="bold" fill="#0a1a30" textLength="37.6" lengthAdjust="spacingAndGlyphs" >COPY&#160;&#160;&#160;250</text>
<rect x="1351.4" y="544.4" width="37.6" height="2" fill="#0a1a30"/>
<text x="1425.2" y="432.1" font-family="Liberation Sans" font-size="9.6" font-weight="bold" fill="#1a1a1a" textLength="39.5" lengthAdjust="spacingAndGlyphs" >STAIR&#160;&#160;&#160;251</text>
<rect x="1425.2" y="433.2" width="39.5" height="2" fill="#1a1a1a"/>
<text x="1474.3" y="432.1" font-family="Liberation Sans" font-size="9.6" font-weight="bold" fill="#1a1a1a" textLength="63.0" lengthAdjust="spacingAndGlyphs" >ELECTRICAL&#160;&#160;&#160;253</text>
<rect x="1474.3" y="433.2" width="63.0" height="2" fill="#1a1a1a"/>
<text x="1496.7" y="481.2" font-family="Liberation Sans" font-size="9.6" font-weight="bold" fill="#1a1a1a" textLength="56.6" lengthAdjust="spacingAndGlyphs" >STORAGE&#160;&#160;&#160;253A</text>
<rect x="1496.7" y="482.3" width="56.6" height="2" fill="#1a1a1a"/>
<text x="1485.0" y="506.0" font-family="Liberation Sans" font-size="9.6" font-weight="bold" fill="#1a1a1a" textLength="57.0" lengthAdjust="spacingAndGlyphs" >STORAGE&#160;&#160;&#160;254A</text>
<rect x="1485.0" y="507.1" width="57.0" height="2" fill="#1a1a1a"/>
<text x="1508.5" y="575.4" font-family="Liberation Sans" font-size="9.6" font-weight="bold" fill="#1a1a1a" textLength="64.0" lengthAdjust="spacingAndGlyphs" >WOMEN'S RR&#160;&#160;&#160;254</text>
<rect x="1508.5" y="576.5" width="64.0" height="2" fill="#1a1a1a"/>
<text x="1672.8" y="495.7" font-family="Liberation Sans" font-size="9.6" font-weight="bold" fill="#1a1a1a" textLength="41.6" lengthAdjust="spacingAndGlyphs" >LOBBY&#160;&#160;&#160;256</text>
<rect x="1672.8" y="496.8" width="41.6" height="2" fill="#1a1a1a"/>
<text x="1826.7" y="411.4" font-family="Liberation Sans" font-size="9.6" font-weight="bold" fill="#1a1a1a" textLength="45.9" lengthAdjust="spacingAndGlyphs" >SERVER&#160;&#160;&#160;257</text>
<rect x="1826.7" y="412.5" width="45.9" height="2" fill="#1a1a1a"/>
<text x="1849.0" y="510.6" font-family="Liberation Sans" font-size="9.6" font-weight="bold" fill="#1a1a1a" textLength="56.6" lengthAdjust="spacingAndGlyphs" >STORAGE&#160;&#160;&#160;258A</text>
<rect x="1849.0" y="511.7" width="56.6" height="2" fill="#1a1a1a"/>
<text x="1827.7" y="576.1" font-family="Liberation Sans" font-size="9.6" font-weight="bold" fill="#1a1a1a" textLength="51.3" lengthAdjust="spacingAndGlyphs" >MEN'S RR&#160;&#160;&#160;258</text>
<rect x="1827.7" y="577.2" width="51.3" height="2" fill="#1a1a1a"/>
<text x="1924.8" y="576.1" font-family="Liberation Sans" font-size="9.6" font-weight="bold" fill="#1a1a1a" textLength="37.4" lengthAdjust="spacingAndGlyphs" >STAIR&#160;&#160;&#160;259</text>
<rect x="1924.8" y="577.2" width="37.4" height="2" fill="#1a1a1a"/>
<text x="1996.3" y="458.4" font-family="Liberation Sans" font-size="9.6" font-weight="bold" fill="#1a1a1a" textLength="29.7" lengthAdjust="spacingAndGlyphs" >OFFICE&#160;&#160;&#160;</text>
<rect x="1996.3" y="459.5" width="29.7" height="2" fill="#1a1a1a"/>
<text x="1996.0" y="543.3" font-family="Liberation Sans" font-size="9.6" font-weight="bold" fill="#1a1a1a" textLength="24.0" lengthAdjust="spacingAndGlyphs" >COPY</text>
<rect x="1996.0" y="544.4" width="24.0" height="2" fill="#1a1a1a"/>
<line x1="1540.0" y1="505.0" x2="1527.0" y2="523.0" stroke="#1a1a1a" stroke-width="1" stroke-linecap="butt"/>
<circle cx="1527.0" cy="523.0" r="1.5" stroke="none" stroke-width="0" fill="#1a1a1a"/>
<g transform="translate(1447.9,592.7) rotate(-90)"><text x="0" y="0" font-family="Liberation Sans" font-size="9.6" font-weight="bold" fill="#1a1a1a" textLength="69.4" lengthAdjust="spacingAndGlyphs">MOTHER'S RM.&#160;&#160;&#160;252</text><rect x="0" y="1.6" width="69.4" height="1.6" fill="#1a1a1a"/></g>
<g transform="translate(1947.5,471.0) rotate(-90)"><text x="0" y="0" font-family="Liberation Sans" font-size="9.6" font-weight="bold" fill="#1a1a1a" textLength="51.3" lengthAdjust="spacingAndGlyphs">STORAGE&#160;&#160;&#160;260</text><rect x="0" y="1.6" width="51.3" height="1.6" fill="#1a1a1a"/></g>
<text x="1232.9" y="507.1" font-family="Liberation Sans" font-size="12.5" font-weight="bold" fill="#ff1a1a" textLength="67.4" lengthAdjust="spacingAndGlyphs" >160.886 sq m</text>
<path d="M1066 797.7 V656.0 Q1066 647.0 1075 646.5 L1184 653.5 Q1193 654.0 1193 663.0 V797.7" stroke="#1a1a1a" stroke-width="3.6999999999999997" fill="none" />
<path d="M1066 797.7 V656.0 Q1066 647.0 1075 646.5 L1184 653.5 Q1193 654.0 1193 663.0 V797.7" stroke="#fff" stroke-width="1.6999999999999997" fill="none" />
<path d="M1066 797.7 V656.0 Q1066 647.0 1075 646.5 L1184 653.5 Q1193 654.0 1193 663.0 V797.7" stroke="#555" stroke-width="1.6999999999999997" fill="none" stroke-dasharray="1.1 1.3" />
<path d="M1066.0 719.8 L1193.0 719.8" stroke="#1a1a1a" stroke-width="3.3" fill="none" stroke-linejoin="round"/>
<path d="M1066.0 719.8 L1193.0 719.8" stroke="#fff" stroke-width="1.2999999999999998" fill="none" />
<path d="M1066.0 719.8 L1193.0 719.8" stroke="#555" stroke-width="1.2999999999999998" fill="none" stroke-dasharray="1.1 1.3" />
<path d="M1254.5 797.7 V669.0 Q1254.5 660.0 1263.5 659.5 L1372.3 666.5 Q1381.3 667.0 1381.3 676.0 V797.7" stroke="#1a1a1a" stroke-width="3.6999999999999997" fill="none" />
<path d="M1254.5 797.7 V669.0 Q1254.5 660.0 1263.5 659.5 L1372.3 666.5 Q1381.3 667.0 1381.3 676.0 V797.7" stroke="#fff" stroke-width="1.6999999999999997" fill="none" />
<path d="M1254.5 797.7 V669.0 Q1254.5 660.0 1263.5 659.5 L1372.3 666.5 Q1381.3 667.0 1381.3 676.0 V797.7" stroke="#555" stroke-width="1.6999999999999997" fill="none" stroke-dasharray="1.1 1.3" />
<path d="M1317.7 663.5 L1317.7 797.7" stroke="#1a1a1a" stroke-width="3.3" fill="none" stroke-linejoin="round"/>
<path d="M1317.7 663.5 L1317.7 797.7" stroke="#fff" stroke-width="1.2999999999999998" fill="none" />
<path d="M1317.7 663.5 L1317.7 797.7" stroke="#555" stroke-width="1.2999999999999998" fill="none" stroke-dasharray="1.1 1.3" />
<path d="M1254.5 732.3 L1381.3 732.3" stroke="#1a1a1a" stroke-width="3.3" fill="none" stroke-linejoin="round"/>
<path d="M1254.5 732.3 L1381.3 732.3" stroke="#fff" stroke-width="1.2999999999999998" fill="none" />
<path d="M1254.5 732.3 L1381.3 732.3" stroke="#555" stroke-width="1.2999999999999998" fill="none" stroke-dasharray="1.1 1.3" />
<path d="M1442.2 797.7 V684.0 Q1442.2 675.0 1451.2 674.5 L1561.3 683.9 Q1570.3 684.4 1570.3 693.4 V797.7" stroke="#1a1a1a" stroke-width="3.6999999999999997" fill="none" />
<path d="M1442.2 797.7 V684.0 Q1442.2 675.0 1451.2 674.5 L1561.3 683.9 Q1570.3 684.4 1570.3 693.4 V797.7" stroke="#fff" stroke-width="1.6999999999999997" fill="none" />
<path d="M1442.2 797.7 V684.0 Q1442.2 675.0 1451.2 674.5 L1561.3 683.9 Q1570.3 684.4 1570.3 693.4 V797.7" stroke="#555" stroke-width="1.6999999999999997" fill="none" stroke-dasharray="1.1 1.3" />
<path d="M1506.3 679.7 L1506.3 797.7" stroke="#1a1a1a" stroke-width="3.3" fill="none" stroke-linejoin="round"/>
<path d="M1506.3 679.7 L1506.3 797.7" stroke="#fff" stroke-width="1.2999999999999998" fill="none" />
<path d="M1506.3 679.7 L1506.3 797.7" stroke="#555" stroke-width="1.2999999999999998" fill="none" stroke-dasharray="1.1 1.3" />
<path d="M1442.2 731.9 L1570.3 731.9" stroke="#1a1a1a" stroke-width="3.3" fill="none" stroke-linejoin="round"/>
<path d="M1442.2 731.9 L1570.3 731.9" stroke="#fff" stroke-width="1.2999999999999998" fill="none" />
<path d="M1442.2 731.9 L1570.3 731.9" stroke="#555" stroke-width="1.2999999999999998" fill="none" stroke-dasharray="1.1 1.3" />
<path d="M1818.75 797.7 V693.4 Q1818.75 684.4 1827.75 683.9 L1937.9 674.5 Q1946.9 675.0 1946.9 684.0 V797.7" stroke="#1a1a1a" stroke-width="3.6999999999999997" fill="none" />
<path d="M1818.75 797.7 V693.4 Q1818.75 684.4 1827.75 683.9 L1937.9 674.5 Q1946.9 675.0 1946.9 684.0 V797.7" stroke="#fff" stroke-width="1.6999999999999997" fill="none" />
<path d="M1818.75 797.7 V693.4 Q1818.75 684.4 1827.75 683.9 L1937.9 674.5 Q1946.9 675.0 1946.9 684.0 V797.7" stroke="#555" stroke-width="1.6999999999999997" fill="none" stroke-dasharray="1.1 1.3" />
<path d="M1882.8 679.7 L1882.8 797.7" stroke="#1a1a1a" stroke-width="3.3" fill="none" stroke-linejoin="round"/>
<path d="M1882.8 679.7 L1882.8 797.7" stroke="#fff" stroke-width="1.2999999999999998" fill="none" />
<path d="M1882.8 679.7 L1882.8 797.7" stroke="#555" stroke-width="1.2999999999999998" fill="none" stroke-dasharray="1.1 1.3" />
<path d="M1818.8 731.9 L1946.9 731.9" stroke="#1a1a1a" stroke-width="3.3" fill="none" stroke-linejoin="round"/>
<path d="M1818.8 731.9 L1946.9 731.9" stroke="#fff" stroke-width="1.2999999999999998" fill="none" />
<path d="M1818.8 731.9 L1946.9 731.9" stroke="#555" stroke-width="1.2999999999999998" fill="none" stroke-dasharray="1.1 1.3" />
<path d="M2009 797.7 V676.0 Q2009 667.0 2018 666.5 L2031 659.5 Q2040 660.0 2040 669.0 V797.7" stroke="#1a1a1a" stroke-width="3.6999999999999997" fill="none" />
<path d="M2009 797.7 V676.0 Q2009 667.0 2018 666.5 L2031 659.5 Q2040 660.0 2040 669.0 V797.7" stroke="#fff" stroke-width="1.6999999999999997" fill="none" />
<path d="M2009 797.7 V676.0 Q2009 667.0 2018 666.5 L2031 659.5 Q2040 660.0 2040 669.0 V797.7" stroke="#555" stroke-width="1.6999999999999997" fill="none" stroke-dasharray="1.1 1.3" />
<path d="M2009.0 731.9 L2040.0 731.9" stroke="#1a1a1a" stroke-width="3.3" fill="none" stroke-linejoin="round"/>
<path d="M2009.0 731.9 L2040.0 731.9" stroke="#fff" stroke-width="1.2999999999999998" fill="none" />
<path d="M2009.0 731.9 L2040.0 731.9" stroke="#555" stroke-width="1.2999999999999998" fill="none" stroke-dasharray="1.1 1.3" />
<path d="M1172.0 717.8 A21 21 0 0 1 1193.0 696.8" stroke="#1a1a1a" stroke-width="1" fill="none" />
<line x1="1193.0" y1="717.8" x2="1172.0" y2="717.8" stroke="#1a1a1a" stroke-width="2.2" stroke-linecap="butt"/>
<path d="M1172.0 721.8 A21 21 0 0 0 1193.0 742.8" stroke="#1a1a1a" stroke-width="1" fill="none" />
<line x1="1193.0" y1="721.8" x2="1172.0" y2="721.8" stroke="#1a1a1a" stroke-width="2.2" stroke-linecap="butt"/>
<path d="M1275.5 730.0 A21 21 0 0 0 1254.5 709.0" stroke="#1a1a1a" stroke-width="1" fill="none" />
<line x1="1254.5" y1="730.0" x2="1275.5" y2="730.0" stroke="#1a1a1a" stroke-width="2.2" stroke-linecap="butt"/>
<path d="M1275.5 734.0 A21 21 0 0 1 1254.5 755.0" stroke="#1a1a1a" stroke-width="1" fill="none" />
<line x1="1254.5" y1="734.0" x2="1275.5" y2="734.0" stroke="#1a1a1a" stroke-width="2.2" stroke-linecap="butt"/>
<path d="M1360.3 730.0 A21 21 0 0 1 1381.3 709.0" stroke="#1a1a1a" stroke-width="1" fill="none" />
<line x1="1381.3" y1="730.0" x2="1360.3" y2="730.0" stroke="#1a1a1a" stroke-width="2.2" stroke-linecap="butt"/>
<path d="M1360.3 734.0 A21 21 0 0 0 1381.3 755.0" stroke="#1a1a1a" stroke-width="1" fill="none" />
<line x1="1381.3" y1="734.0" x2="1360.3" y2="734.0" stroke="#1a1a1a" stroke-width="2.2" stroke-linecap="butt"/>
<path d="M1463.2 730.0 A21 21 0 0 0 1442.2 709.0" stroke="#1a1a1a" stroke-width="1" fill="none" />
<line x1="1442.2" y1="730.0" x2="1463.2" y2="730.0" stroke="#1a1a1a" stroke-width="2.2" stroke-linecap="butt"/>
<path d="M1463.2 734.0 A21 21 0 0 1 1442.2 755.0" stroke="#1a1a1a" stroke-width="1" fill="none" />
<line x1="1442.2" y1="734.0" x2="1463.2" y2="734.0" stroke="#1a1a1a" stroke-width="2.2" stroke-linecap="butt"/>
<path d="M1549.3 730.0 A21 21 0 0 1 1570.3 709.0" stroke="#1a1a1a" stroke-width="1" fill="none" />
<line x1="1570.3" y1="730.0" x2="1549.3" y2="730.0" stroke="#1a1a1a" stroke-width="2.2" stroke-linecap="butt"/>
<path d="M1549.3 734.0 A21 21 0 0 0 1570.3 755.0" stroke="#1a1a1a" stroke-width="1" fill="none" />
<line x1="1570.3" y1="734.0" x2="1549.3" y2="734.0" stroke="#1a1a1a" stroke-width="2.2" stroke-linecap="butt"/>
<path d="M1839.8 730.0 A21 21 0 0 0 1818.8 709.0" stroke="#1a1a1a" stroke-width="1" fill="none" />
<line x1="1818.8" y1="730.0" x2="1839.8" y2="730.0" stroke="#1a1a1a" stroke-width="2.2" stroke-linecap="butt"/>
<path d="M1839.8 734.0 A21 21 0 0 1 1818.8 755.0" stroke="#1a1a1a" stroke-width="1" fill="none" />
<line x1="1818.8" y1="734.0" x2="1839.8" y2="734.0" stroke="#1a1a1a" stroke-width="2.2" stroke-linecap="butt"/>
<path d="M1925.9 730.0 A21 21 0 0 1 1946.9 709.0" stroke="#1a1a1a" stroke-width="1" fill="none" />
<line x1="1946.9" y1="730.0" x2="1925.9" y2="730.0" stroke="#1a1a1a" stroke-width="2.2" stroke-linecap="butt"/>
<path d="M1925.9 734.0 A21 21 0 0 0 1946.9 755.0" stroke="#1a1a1a" stroke-width="1" fill="none" />
<line x1="1946.9" y1="734.0" x2="1925.9" y2="734.0" stroke="#1a1a1a" stroke-width="2.2" stroke-linecap="butt"/>
<path d="M2030.0 730.0 A21 21 0 0 0 2009.0 709.0" stroke="#1a1a1a" stroke-width="1" fill="none" />
<line x1="2009.0" y1="730.0" x2="2030.0" y2="730.0" stroke="#1a1a1a" stroke-width="2.2" stroke-linecap="butt"/>
<path d="M2030.0 734.0 A21 21 0 0 1 2009.0 755.0" stroke="#1a1a1a" stroke-width="1" fill="none" />
<line x1="2009.0" y1="734.0" x2="2030.0" y2="734.0" stroke="#1a1a1a" stroke-width="2.2" stroke-linecap="butt"/>
<line x1="1193.0" y1="654.0" x2="1254.5" y2="660.0" stroke="#1a1a1a" stroke-width="1" stroke-dasharray="3 2" stroke-linecap="butt"/>
<line x1="1381.3" y1="667.0" x2="1442.2" y2="675.0" stroke="#1a1a1a" stroke-width="1" stroke-dasharray="3 2" stroke-linecap="butt"/>
<line x1="1570.3" y1="684.4" x2="1600.0" y2="686.0" stroke="#1a1a1a" stroke-width="1" stroke-dasharray="3 2" stroke-linecap="butt"/>
<line x1="1789.0" y1="686.0" x2="1818.8" y2="684.4" stroke="#1a1a1a" stroke-width="1" stroke-dasharray="3 2" stroke-linecap="butt"/>
<line x1="1946.9" y1="675.0" x2="2021.0" y2="665.0" stroke="#1a1a1a" stroke-width="1" stroke-dasharray="3 2" stroke-linecap="butt"/>
<path d="M1575 671.3 H1816 Q1825 671.3 1825 680 V803 Q1825 811.9 1816 811.9 H1575 Q1565.6 811.9 1565.6 803 V680 Q1565.6 671.3 1575 671.3" stroke="#1a1a1a" stroke-width="1.1" fill="none" stroke-dasharray="5 3.5" />
<path d="M1600.0 686.0 L1693.8 692.2 L1789.0 686.0 L1789.0 697.5 L1693.8 702.0 L1600.0 697.5 L1600.0 686.0" stroke="#1a1a1a" stroke-width="1.5" fill="none" />
<rect x="1600.0" y="697.5" width="189.0" height="15.9" rx="0" stroke="#1a1a1a" stroke-width="2.2" fill="none"/>
<rect x="1604.0" y="700.0" width="26.0" height="11.0" rx="0" stroke="#1a1a1a" stroke-width="1.2" fill="none"/>
<rect x="1758.0" y="700.0" width="27.0" height="11.0" rx="0" stroke="#1a1a1a" stroke-width="1.2" fill="none"/>
<rect x="1637.0" y="702.0" width="115.0" height="7.0" rx="0" stroke="#1a1a1a" stroke-width="1" fill="none" stroke-dasharray="2 1.5"/>
<rect x="1688.0" y="704.0" width="12.0" height="8.0" rx="0" stroke="#1a1a1a" stroke-width="1.2" fill="none"/>
<rect x="1637.5" y="722.5" width="114.5" height="36.9" rx="0" stroke="#1a1a1a" stroke-width="1.1" fill="none" stroke-dasharray="3 2"/>
<rect x="1637.5" y="731.3" width="114.5" height="18.7" rx="0" stroke="#1a1a1a" stroke-width="1.2" fill="none"/>
<rect x="1591.6" y="775.0" width="205.9" height="17.2" rx="0" stroke="#1a1a1a" stroke-width="1.6" fill="none"/>
<rect x="1591.6" y="775.0" width="17.4" height="17.2" rx="0" stroke="#1a1a1a" stroke-width="1.6" fill="none"/>
<rect x="1780.0" y="775.0" width="17.5" height="17.2" rx="0" stroke="#1a1a1a" stroke-width="1.6" fill="none"/>
<line x1="1825.0" y1="812.0" x2="1836.0" y2="826.0" stroke="#1a1a1a" stroke-width="1" stroke-linecap="butt"/>
<circle cx="1844.4" cy="836.0" r="12.5" stroke="#1a1a1a" stroke-width="1.1" fill="#fff"/>
<line x1="1832.0" y1="836.0" x2="1857.0" y2="836.0" stroke="#1a1a1a" stroke-width="0.9" stroke-linecap="butt"/>
<text x="1844.4" y="834" font-family="Liberation Sans" font-size="5.5" fill="#333" text-anchor="middle">01</text><text x="1844.4" y="843" font-family="Liberation Sans" font-size="5.5" fill="#333" text-anchor="middle">A8.01</text>
<circle cx="1192.0" cy="706.5" r="6" stroke="#333" stroke-width="0.9" fill="none"/>
<text x="1192.0" y="708.2" font-family="Liberation Sans" font-size="4.8" fill="#444" text-anchor="middle">242</text>
<circle cx="1192.0" cy="732.3" r="6" stroke="#333" stroke-width="0.9" fill="none"/>
<text x="1192.0" y="734.0" font-family="Liberation Sans" font-size="4.8" fill="#444" text-anchor="middle">243</text>
<circle cx="1255.0" cy="719.4" r="6" stroke="#333" stroke-width="0.9" fill="none"/>
<text x="1255.0" y="721.1" font-family="Liberation Sans" font-size="4.8" fill="#444" text-anchor="middle">240</text>
<circle cx="1255.0" cy="744.8" r="6" stroke="#333" stroke-width="0.9" fill="none"/>
<text x="1255.0" y="746.5" font-family="Liberation Sans" font-size="4.8" fill="#444" text-anchor="middle">241</text>
<circle cx="1381.0" cy="719.4" r="6" stroke="#333" stroke-width="0.9" fill="none"/>
<text x="1381.0" y="721.1" font-family="Liberation Sans" font-size="4.8" fill="#444" text-anchor="middle">238</text>
<circle cx="1381.0" cy="744.8" r="6" stroke="#333" stroke-width="0.9" fill="none"/>
<text x="1381.0" y="746.5" font-family="Liberation Sans" font-size="4.8" fill="#444" text-anchor="middle">239</text>
<circle cx="1443.0" cy="719.4" r="6" stroke="#333" stroke-width="0.9" fill="none"/>
<text x="1443.0" y="721.1" font-family="Liberation Sans" font-size="4.8" fill="#444" text-anchor="middle">236</text>
<circle cx="1443.0" cy="744.8" r="6" stroke="#333" stroke-width="0.9" fill="none"/>
<text x="1443.0" y="746.5" font-family="Liberation Sans" font-size="4.8" fill="#444" text-anchor="middle">237</text>
<circle cx="1573.0" cy="719.4" r="6" stroke="#333" stroke-width="0.9" fill="none"/>
<text x="1573.0" y="721.1" font-family="Liberation Sans" font-size="4.8" fill="#444" text-anchor="middle">234</text>
<circle cx="1573.0" cy="744.8" r="6" stroke="#333" stroke-width="0.9" fill="none"/>
<text x="1573.0" y="746.5" font-family="Liberation Sans" font-size="4.8" fill="#444" text-anchor="middle">235</text>
<circle cx="1815.0" cy="719.4" r="6" stroke="#333" stroke-width="0.9" fill="none"/>
<text x="1815.0" y="721.1" font-family="Liberation Sans" font-size="4.8" fill="#444" text-anchor="middle">231</text>
<circle cx="1815.0" cy="744.8" r="6" stroke="#333" stroke-width="0.9" fill="none"/>
<text x="1815.0" y="746.5" font-family="Liberation Sans" font-size="4.8" fill="#444" text-anchor="middle">232</text>
<circle cx="1947.0" cy="719.4" r="6" stroke="#333" stroke-width="0.9" fill="none"/>
<text x="1947.0" y="721.1" font-family="Liberation Sans" font-size="4.8" fill="#444" text-anchor="middle">229</text>
<circle cx="1947.0" cy="744.8" r="6" stroke="#333" stroke-width="0.9" fill="none"/>
<text x="1947.0" y="746.5" font-family="Liberation Sans" font-size="4.8" fill="#444" text-anchor="middle">230</text>
<circle cx="2010.0" cy="719.4" r="6" stroke="#333" stroke-width="0.9" fill="none"/>
<text x="2010.0" y="721.1" font-family="Liberation Sans" font-size="4.8" fill="#444" text-anchor="middle">227</text>
<circle cx="2010.0" cy="744.8" r="6" stroke="#333" stroke-width="0.9" fill="none"/>
<text x="2010.0" y="746.5" font-family="Liberation Sans" font-size="4.8" fill="#444" text-anchor="middle">228</text>
<text x="912.8" y="715.0" font-family="Liberation Sans" font-size="9.6" font-weight="bold" fill="#1a1a1a" textLength="66.2" lengthAdjust="spacingAndGlyphs" >OPEN OFFICE&#160;&#160;&#160;244</text>
<rect x="912.8" y="716.1" width="66.2" height="2" fill="#1a1a1a"/>
<text x="1104.6" y="687.4" font-family="Liberation Sans" font-size="9.6" font-weight="bold" fill="#1a1a1a" textLength="44.1" lengthAdjust="spacingAndGlyphs" >OFFICE&#160;&#160;&#160;242</text>
<rect x="1104.6" y="688.5" width="44.1" height="2" fill="#1a1a1a"/>
<text x="1104.6" y="759.1" font-family="Liberation Sans" font-size="9.6" font-weight="bold" fill="#1a1a1a" textLength="44.1" lengthAdjust="spacingAndGlyphs" >OFFICE&#160;&#160;&#160;243</text>
<rect x="1104.6" y="760.2" width="44.1" height="2" fill="#1a1a1a"/>
<text x="1262.9" y="697.4" font-family="Liberation Sans" font-size="9.6" font-weight="bold" fill="#1a1a1a" textLength="43.7" lengthAdjust="spacingAndGlyphs" >OFFICE&#160;&#160;&#160;240</text>
<rect x="1262.9" y="698.5" width="43.7" height="2" fill="#1a1a1a"/>
<text x="1328.0" y="698.0" font-family="Liberation Sans" font-size="9.6" font-weight="bold" fill="#1a1a1a" textLength="44.3" lengthAdjust="spacingAndGlyphs" >OFFICE&#160;&#160;&#160;238</text>
<rect x="1328.0" y="699.1" width="44.3" height="2" fill="#1a1a1a"/>
<text x="1262.9" y="766.1" font-family="Liberation Sans" font-size="9.6" font-weight="bold" fill="#1a1a1a" textLength="43.7" lengthAdjust="spacingAndGlyphs" >OFFICE&#160;&#160;&#160;241</text>
<rect x="1262.9" y="767.2" width="43.7" height="2" fill="#1a1a1a"/>
<text x="1326.5" y="766.1" font-family="Liberation Sans" font-size="9.6" font-weight="bold" fill="#1a1a1a" textLength="43.9" lengthAdjust="spacingAndGlyphs" >OFFICE&#160;&#160;&#160;239</text>
<rect x="1326.5" y="767.2" width="43.9" height="2" fill="#1a1a1a"/>
<text x="1451.6" y="708.1" font-family="Liberation Sans" font-size="9.6" font-weight="bold" fill="#1a1a1a" textLength="43.7" lengthAdjust="spacingAndGlyphs" >OFFICE&#160;&#160;&#160;236</text>
<rect x="1451.6" y="709.2" width="43.7" height="2" fill="#1a1a1a"/>
<text x="1511.6" y="708.1" font-family="Liberation Sans" font-size="9.6" font-weight="bold" fill="#1a1a1a" textLength="50.0" lengthAdjust="spacingAndGlyphs" >MEETING&#160;&#160;&#160;234</text>
<rect x="1511.6" y="709.2" width="50.0" height="2" fill="#1a1a1a"/>
<text x="1451.6" y="771.2" font-family="Liberation Sans" font-size="9.6" font-weight="bold" fill="#1a1a1a" textLength="43.7" lengthAdjust="spacingAndGlyphs" >OFFICE&#160;&#160;&#160;237</text>
<rect x="1451.6" y="772.3" width="43.7" height="2" fill="#1a1a1a"/>
<text x="1511.0" y="771.2" font-family="Liberation Sans" font-size="9.6" font-weight="bold" fill="#1a1a1a" textLength="50.6" lengthAdjust="spacingAndGlyphs" >MEETING&#160;&#160;&#160;235</text>
<rect x="1511.0" y="772.3" width="50.6" height="2" fill="#1a1a1a"/>
<text x="1669.7" y="744.0" font-family="Liberation Sans" font-size="9.6" font-weight="bold" fill="#1a1a1a" textLength="42.2" lengthAdjust="spacingAndGlyphs" >BREAK&#160;&#160;&#160;233</text>
<rect x="1669.7" y="745.1" width="42.2" height="2" fill="#1a1a1a"/>
<text x="1828.8" y="708.1" font-family="Liberation Sans" font-size="9.6" font-weight="bold" fill="#1a1a1a" textLength="50.0" lengthAdjust="spacingAndGlyphs" >MEETING&#160;&#160;&#160;231</text>
<rect x="1828.8" y="709.2" width="50.0" height="2" fill="#1a1a1a"/>
<text x="1888.4" y="708.1" font-family="Liberation Sans" font-size="9.6" font-weight="bold" fill="#1a1a1a" textLength="43.8" lengthAdjust="spacingAndGlyphs" >OFFICE&#160;&#160;&#160;229</text>
<rect x="1888.4" y="709.2" width="43.8" height="2" fill="#1a1a1a"/>
<text x="1828.0" y="764.4" font-family="Liberation Sans" font-size="9.6" font-weight="bold" fill="#1a1a1a" textLength="50.0" lengthAdjust="spacingAndGlyphs" >MEETING&#160;&#160;&#160;232</text>
<rect x="1828.0" y="765.5" width="50.0" height="2" fill="#1a1a1a"/>
<text x="1891.6" y="764.4" font-family="Liberation Sans" font-size="9.6" font-weight="bold" fill="#1a1a1a" textLength="42.8" lengthAdjust="spacingAndGlyphs" >OFFICE&#160;&#160;&#160;230</text>
<rect x="1891.6" y="765.5" width="42.8" height="2" fill="#1a1a1a"/>
</g></svg>
</body></html>
